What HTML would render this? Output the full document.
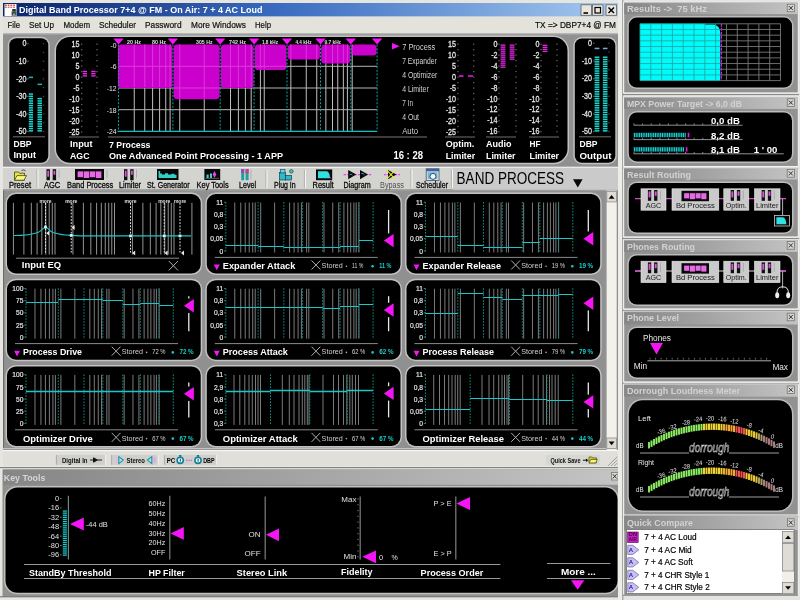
<!DOCTYPE html><html><head><meta charset="utf-8"><title>DBP</title>
<style>html,body{margin:0;padding:0;background:#e8e8e4;overflow:hidden}svg{display:block;font-family:'Liberation Sans', sans-serif}</style></head><body>
<svg width="800" height="600" viewBox="0 0 800 600" style="will-change:transform;filter:blur(0.45px)">
<defs>
<linearGradient id="tb" x1="0" x2="1" y1="0" y2="0"><stop offset="0" stop-color="#0a246a"/><stop offset="0.45" stop-color="#3a6cc0"/><stop offset="1" stop-color="#a6caf0"/></linearGradient>
<linearGradient id="gt" x1="0" x2="1" y1="0" y2="0"><stop offset="0" stop-color="#868686"/><stop offset="1" stop-color="#c4c4c4"/></linearGradient>
<linearGradient id="arcg" gradientUnits="userSpaceOnUse" x1="648" x2="773" y1="0" y2="0">
<stop offset="0" stop-color="#68d048"/><stop offset="0.44" stop-color="#90e060"/><stop offset="0.46" stop-color="#f0d020"/><stop offset="0.68" stop-color="#f0b020"/><stop offset="0.70" stop-color="#f05050"/><stop offset="0.77" stop-color="#f05050"/><stop offset="0.79" stop-color="#f0c020"/><stop offset="0.88" stop-color="#c8a830"/><stop offset="0.90" stop-color="#a07870"/><stop offset="1" stop-color="#a07878"/></linearGradient>
</defs>
<rect x="0.00" y="0.00" width="800.00" height="600.00" fill="#e6e6e2" />
<rect x="0.00" y="0.00" width="620.00" height="600.00" fill="#e6e5df" />
<rect x="3.00" y="3.00" width="615.00" height="13.60" fill="url(#tb)" />
<rect x="4.50" y="4.00" width="12.00" height="12.00" fill="#fdfdfd" />
<rect x="5.00" y="4.60" width="1.80" height="1.20" fill="#c83030" />
<rect x="5.00" y="6.60" width="1.80" height="1.20" fill="#d05050" />
<rect x="7.70" y="4.60" width="1.80" height="1.20" fill="#c83030" />
<rect x="7.70" y="6.60" width="1.80" height="1.20" fill="#d05050" />
<rect x="10.40" y="4.60" width="1.80" height="1.20" fill="#c83030" />
<rect x="10.40" y="6.60" width="1.80" height="1.20" fill="#d05050" />
<rect x="13.10" y="4.60" width="1.80" height="1.20" fill="#c83030" />
<rect x="13.10" y="6.60" width="1.80" height="1.20" fill="#d05050" />
<rect x="12.20" y="9.00" width="3.60" height="2.60" fill="#303030" />
<rect x="11.60" y="11.40" width="4.60" height="4.20" fill="#404848" />
<rect x="13.00" y="13.60" width="2.20" height="1.60" fill="#80b090" />
<text x="19.00" y="9.90" font-size="9.7" fill="#fff" dominant-baseline="central" font-weight="bold" textLength="243.50" lengthAdjust="spacingAndGlyphs" >Digital Band Processor 7+4 @ FM - On Air: 7 + 4 AC Loud</text>
<rect x="581.00" y="4.80" width="10.50" height="10.50" fill="#e8e6de" stroke="#606060" stroke-width="0.8"/>
<rect x="592.50" y="4.80" width="10.50" height="10.50" fill="#e8e6de" stroke="#606060" stroke-width="0.8"/>
<rect x="606.00" y="4.80" width="10.50" height="10.50" fill="#e8e6de" stroke="#606060" stroke-width="0.8"/>
<line x1="583.50" y1="13.00" x2="588.00" y2="13.00" stroke="#000" stroke-width="1.6" />
<rect x="595.00" y="7.50" width="5.50" height="5.50" fill="none" stroke="#000" stroke-width="1.2"/>
<line x1="608.50" y1="7.50" x2="614.00" y2="13.00" stroke="#000" stroke-width="1.5" />
<line x1="614.00" y1="7.50" x2="608.50" y2="13.00" stroke="#000" stroke-width="1.5" />
<rect x="3.00" y="16.60" width="615.00" height="17.00" fill="#e3e2db" />
<text x="7.50" y="24.80" font-size="9" fill="#101010" dominant-baseline="central" textLength="12.50" lengthAdjust="spacingAndGlyphs" stroke="#101010" stroke-width="0.2">File</text>
<text x="29.00" y="24.80" font-size="9" fill="#101010" dominant-baseline="central" textLength="25.00" lengthAdjust="spacingAndGlyphs" stroke="#101010" stroke-width="0.2">Set Up</text>
<text x="63.50" y="24.80" font-size="9" fill="#101010" dominant-baseline="central" textLength="26.50" lengthAdjust="spacingAndGlyphs" stroke="#101010" stroke-width="0.2">Modem</text>
<text x="99.00" y="24.80" font-size="9" fill="#101010" dominant-baseline="central" textLength="37.00" lengthAdjust="spacingAndGlyphs" stroke="#101010" stroke-width="0.2">Scheduler</text>
<text x="145.00" y="24.80" font-size="9" fill="#101010" dominant-baseline="central" textLength="36.50" lengthAdjust="spacingAndGlyphs" stroke="#101010" stroke-width="0.2">Password</text>
<text x="191.00" y="24.80" font-size="9" fill="#101010" dominant-baseline="central" textLength="55.00" lengthAdjust="spacingAndGlyphs" stroke="#101010" stroke-width="0.2">More Windows</text>
<text x="255.00" y="24.80" font-size="9" fill="#101010" dominant-baseline="central" textLength="16.00" lengthAdjust="spacingAndGlyphs" stroke="#101010" stroke-width="0.2">Help</text>
<text x="535.00" y="24.50" font-size="9" fill="#0c0c0c" dominant-baseline="central" textLength="81.00" lengthAdjust="spacingAndGlyphs" stroke="#0c0c0c" stroke-width="0.2">TX =&gt; DBP7+4 @ FM</text>
<rect x="3.00" y="33.50" width="615.00" height="134.00" fill="#909090" />
<line x1="3.00" y1="34.00" x2="618.00" y2="34.00" stroke="#b0b0b0" stroke-width="1" />
<rect x="7.80" y="36.80" width="42.00" height="127.50" fill="#c2c2c2" rx="8.5" />
<rect x="9.30" y="38.30" width="39.00" height="124.50" fill="#000" rx="7" />
<rect x="54.50" y="35.50" width="514.50" height="128.80" fill="#c2c2c2" rx="15.5" />
<rect x="56.00" y="37.00" width="511.50" height="125.80" fill="#000" rx="14" />
<rect x="573.30" y="37.00" width="43.50" height="127.30" fill="#c2c2c2" rx="8.5" />
<rect x="574.80" y="38.50" width="40.50" height="124.30" fill="#000" rx="7" />
<text transform="translate(26.50,43.70) scale(0.84,1)" x="0" y="0" font-size="8.5" fill="#e8e8e8" dominant-baseline="central" text-anchor="end" stroke="#e8e8e8" stroke-width="0.25">0</text>
<text transform="translate(26.50,61.25) scale(0.84,1)" x="0" y="0" font-size="8.5" fill="#e8e8e8" dominant-baseline="central" text-anchor="end" stroke="#e8e8e8" stroke-width="0.25">-10</text>
<text transform="translate(26.50,78.80) scale(0.84,1)" x="0" y="0" font-size="8.5" fill="#e8e8e8" dominant-baseline="central" text-anchor="end" stroke="#e8e8e8" stroke-width="0.25">-20</text>
<text transform="translate(26.50,96.35) scale(0.84,1)" x="0" y="0" font-size="8.5" fill="#e8e8e8" dominant-baseline="central" text-anchor="end" stroke="#e8e8e8" stroke-width="0.25">-30</text>
<text transform="translate(26.50,113.90) scale(0.84,1)" x="0" y="0" font-size="8.5" fill="#e8e8e8" dominant-baseline="central" text-anchor="end" stroke="#e8e8e8" stroke-width="0.25">-40</text>
<text transform="translate(26.50,131.45) scale(0.84,1)" x="0" y="0" font-size="8.5" fill="#e8e8e8" dominant-baseline="central" text-anchor="end" stroke="#e8e8e8" stroke-width="0.25">-50</text>
<rect x="27.30" y="43.10" width="1.40" height="1.20" fill="#606060" />
<rect x="27.30" y="60.66" width="1.40" height="1.20" fill="#606060" />
<rect x="27.30" y="78.22" width="1.40" height="1.20" fill="#606060" />
<rect x="27.30" y="95.78" width="1.40" height="1.20" fill="#606060" />
<rect x="27.30" y="113.34" width="1.40" height="1.20" fill="#606060" />
<rect x="27.30" y="130.90" width="1.40" height="1.20" fill="#606060" />
<rect x="42.80" y="43.10" width="1.40" height="1.20" fill="#484848" />
<rect x="42.80" y="51.88" width="1.40" height="1.20" fill="#484848" />
<rect x="42.80" y="60.66" width="1.40" height="1.20" fill="#484848" />
<rect x="42.80" y="69.44" width="1.40" height="1.20" fill="#484848" />
<rect x="42.80" y="78.22" width="1.40" height="1.20" fill="#484848" />
<rect x="42.80" y="87.00" width="1.40" height="1.20" fill="#484848" />
<rect x="42.80" y="95.78" width="1.40" height="1.20" fill="#484848" />
<rect x="42.80" y="104.56" width="1.40" height="1.20" fill="#484848" />
<rect x="42.80" y="113.34" width="1.40" height="1.20" fill="#484848" />
<rect x="42.80" y="122.12" width="1.40" height="1.20" fill="#484848" />
<rect x="42.80" y="130.90" width="1.40" height="1.20" fill="#484848" />
<rect x="28.80" y="130.10" width="4.20" height="1.50" fill="#1cd6ce" />
<rect x="28.80" y="127.80" width="4.20" height="1.50" fill="#1cd6ce" />
<rect x="28.80" y="125.50" width="4.20" height="1.50" fill="#1cd6ce" />
<rect x="28.80" y="123.20" width="4.20" height="1.50" fill="#1cd6ce" />
<rect x="28.80" y="120.90" width="4.20" height="1.50" fill="#1cd6ce" />
<rect x="28.80" y="118.60" width="4.20" height="1.50" fill="#1cd6ce" />
<rect x="28.80" y="116.30" width="4.20" height="1.50" fill="#1cd6ce" />
<rect x="28.80" y="114.00" width="4.20" height="1.50" fill="#1cd6ce" />
<rect x="28.80" y="111.70" width="4.20" height="1.50" fill="#1cd6ce" />
<rect x="28.80" y="109.40" width="4.20" height="1.50" fill="#1cd6ce" />
<rect x="28.80" y="107.10" width="4.20" height="1.50" fill="#1cd6ce" />
<rect x="28.80" y="104.80" width="4.20" height="1.50" fill="#1cd6ce" />
<rect x="28.80" y="102.50" width="4.20" height="1.50" fill="#1cd6ce" />
<rect x="28.80" y="100.20" width="4.20" height="1.50" fill="#1cd6ce" />
<rect x="28.80" y="97.90" width="4.20" height="1.50" fill="#1cd6ce" />
<rect x="28.80" y="95.60" width="4.20" height="1.50" fill="#1cd6ce" />
<rect x="28.80" y="93.30" width="4.20" height="1.50" fill="#1cd6ce" />
<rect x="37.50" y="130.10" width="4.50" height="1.50" fill="#1cd6ce" />
<rect x="37.50" y="127.80" width="4.50" height="1.50" fill="#1cd6ce" />
<rect x="37.50" y="125.50" width="4.50" height="1.50" fill="#1cd6ce" />
<rect x="37.50" y="123.20" width="4.50" height="1.50" fill="#1cd6ce" />
<rect x="37.50" y="120.90" width="4.50" height="1.50" fill="#1cd6ce" />
<rect x="37.50" y="118.60" width="4.50" height="1.50" fill="#1cd6ce" />
<rect x="37.50" y="116.30" width="4.50" height="1.50" fill="#1cd6ce" />
<rect x="37.50" y="114.00" width="4.50" height="1.50" fill="#1cd6ce" />
<rect x="37.50" y="111.70" width="4.50" height="1.50" fill="#1cd6ce" />
<rect x="37.50" y="109.40" width="4.50" height="1.50" fill="#1cd6ce" />
<rect x="37.50" y="107.10" width="4.50" height="1.50" fill="#1cd6ce" />
<rect x="37.50" y="104.80" width="4.50" height="1.50" fill="#1cd6ce" />
<rect x="37.50" y="102.50" width="4.50" height="1.50" fill="#1cd6ce" />
<rect x="37.50" y="100.20" width="4.50" height="1.50" fill="#1cd6ce" />
<rect x="37.50" y="97.90" width="4.50" height="1.50" fill="#1cd6ce" />
<rect x="28.80" y="76.60" width="4.20" height="1.50" fill="#20b0b0" />
<rect x="37.50" y="83.60" width="4.50" height="1.50" fill="#20b0b0" />
<line x1="13.00" y1="136.80" x2="45.00" y2="136.80" stroke="#707070" stroke-width="1" />
<text x="13.50" y="143.00" font-size="9.5" fill="#fff" dominant-baseline="central" font-weight="bold" textLength="18.00" lengthAdjust="spacingAndGlyphs" >DBP</text>
<text x="13.50" y="154.80" font-size="9.5" fill="#fff" dominant-baseline="central" font-weight="bold" textLength="22.50" lengthAdjust="spacingAndGlyphs" >Input</text>
<text transform="translate(79.50,44.20) scale(0.84,1)" x="0" y="0" font-size="8.5" fill="#e8e8e8" dominant-baseline="central" text-anchor="end" stroke="#e8e8e8" stroke-width="0.25">15</text>
<text transform="translate(79.50,55.17) scale(0.84,1)" x="0" y="0" font-size="8.5" fill="#e8e8e8" dominant-baseline="central" text-anchor="end" stroke="#e8e8e8" stroke-width="0.25">10</text>
<text transform="translate(79.50,66.14) scale(0.84,1)" x="0" y="0" font-size="8.5" fill="#e8e8e8" dominant-baseline="central" text-anchor="end" stroke="#e8e8e8" stroke-width="0.25">5</text>
<text transform="translate(79.50,77.11) scale(0.84,1)" x="0" y="0" font-size="8.5" fill="#e8e8e8" dominant-baseline="central" text-anchor="end" stroke="#e8e8e8" stroke-width="0.25">0</text>
<text transform="translate(79.50,88.08) scale(0.84,1)" x="0" y="0" font-size="8.5" fill="#e8e8e8" dominant-baseline="central" text-anchor="end" stroke="#e8e8e8" stroke-width="0.25">-5</text>
<text transform="translate(79.50,99.05) scale(0.84,1)" x="0" y="0" font-size="8.5" fill="#e8e8e8" dominant-baseline="central" text-anchor="end" stroke="#e8e8e8" stroke-width="0.25">-10</text>
<text transform="translate(79.50,110.02) scale(0.84,1)" x="0" y="0" font-size="8.5" fill="#e8e8e8" dominant-baseline="central" text-anchor="end" stroke="#e8e8e8" stroke-width="0.25">-15</text>
<text transform="translate(79.50,120.99) scale(0.84,1)" x="0" y="0" font-size="8.5" fill="#e8e8e8" dominant-baseline="central" text-anchor="end" stroke="#e8e8e8" stroke-width="0.25">-20</text>
<text transform="translate(79.50,131.96) scale(0.84,1)" x="0" y="0" font-size="8.5" fill="#e8e8e8" dominant-baseline="central" text-anchor="end" stroke="#e8e8e8" stroke-width="0.25">-25</text>
<rect x="81.00" y="43.60" width="1.40" height="1.20" fill="#606060" />
<rect x="81.00" y="49.09" width="1.40" height="1.20" fill="#606060" />
<rect x="81.00" y="54.58" width="1.40" height="1.20" fill="#606060" />
<rect x="81.00" y="60.06" width="1.40" height="1.20" fill="#606060" />
<rect x="81.00" y="65.55" width="1.40" height="1.20" fill="#606060" />
<rect x="81.00" y="71.04" width="1.40" height="1.20" fill="#606060" />
<rect x="81.00" y="76.53" width="1.40" height="1.20" fill="#606060" />
<rect x="81.00" y="82.01" width="1.40" height="1.20" fill="#606060" />
<rect x="81.00" y="87.50" width="1.40" height="1.20" fill="#606060" />
<rect x="81.00" y="92.99" width="1.40" height="1.20" fill="#606060" />
<rect x="81.00" y="98.48" width="1.40" height="1.20" fill="#606060" />
<rect x="81.00" y="103.96" width="1.40" height="1.20" fill="#606060" />
<rect x="81.00" y="109.45" width="1.40" height="1.20" fill="#606060" />
<rect x="81.00" y="114.94" width="1.40" height="1.20" fill="#606060" />
<rect x="81.00" y="120.43" width="1.40" height="1.20" fill="#606060" />
<rect x="81.00" y="125.91" width="1.40" height="1.20" fill="#606060" />
<rect x="81.00" y="131.40" width="1.40" height="1.20" fill="#606060" />
<rect x="96.30" y="43.60" width="1.40" height="1.20" fill="#606060" />
<rect x="96.30" y="49.09" width="1.40" height="1.20" fill="#606060" />
<rect x="96.30" y="54.58" width="1.40" height="1.20" fill="#606060" />
<rect x="96.30" y="60.06" width="1.40" height="1.20" fill="#606060" />
<rect x="96.30" y="65.55" width="1.40" height="1.20" fill="#606060" />
<rect x="96.30" y="71.04" width="1.40" height="1.20" fill="#606060" />
<rect x="96.30" y="76.53" width="1.40" height="1.20" fill="#606060" />
<rect x="96.30" y="82.01" width="1.40" height="1.20" fill="#606060" />
<rect x="96.30" y="87.50" width="1.40" height="1.20" fill="#606060" />
<rect x="96.30" y="92.99" width="1.40" height="1.20" fill="#606060" />
<rect x="96.30" y="98.48" width="1.40" height="1.20" fill="#606060" />
<rect x="96.30" y="103.96" width="1.40" height="1.20" fill="#606060" />
<rect x="96.30" y="109.45" width="1.40" height="1.20" fill="#606060" />
<rect x="96.30" y="114.94" width="1.40" height="1.20" fill="#606060" />
<rect x="96.30" y="120.43" width="1.40" height="1.20" fill="#606060" />
<rect x="96.30" y="125.91" width="1.40" height="1.20" fill="#606060" />
<rect x="96.30" y="131.40" width="1.40" height="1.20" fill="#606060" />
<rect x="82.80" y="75.20" width="4.20" height="1.40" fill="#e428e4" />
<rect x="82.80" y="73.00" width="4.20" height="1.40" fill="#e428e4" />
<rect x="82.80" y="70.80" width="4.20" height="1.40" fill="#e428e4" />
<rect x="91.20" y="75.20" width="4.40" height="1.40" fill="#e428e4" />
<rect x="91.20" y="73.00" width="4.40" height="1.40" fill="#e428e4" />
<rect x="91.20" y="70.80" width="4.40" height="1.40" fill="#e428e4" />
<text x="70.00" y="143.50" font-size="9.5" fill="#fff" dominant-baseline="central" font-weight="bold" textLength="22.50" lengthAdjust="spacingAndGlyphs" >Input</text>
<text x="70.00" y="155.00" font-size="9.5" fill="#fff" dominant-baseline="central" font-weight="bold" textLength="19.50" lengthAdjust="spacingAndGlyphs" >AGC</text>
<line x1="69.00" y1="137.00" x2="99.00" y2="137.00" stroke="#707070" stroke-width="1" />
<text transform="translate(116.50,45.50) scale(0.85,1)" x="0" y="0" font-size="8" fill="#e8e8e8" dominant-baseline="central" text-anchor="end" >-0</text>
<text transform="translate(116.50,66.50) scale(0.85,1)" x="0" y="0" font-size="8" fill="#e8e8e8" dominant-baseline="central" text-anchor="end" >-6</text>
<text transform="translate(116.50,88.20) scale(0.85,1)" x="0" y="0" font-size="8" fill="#e8e8e8" dominant-baseline="central" text-anchor="end" >-12</text>
<text transform="translate(116.50,110.00) scale(0.85,1)" x="0" y="0" font-size="8" fill="#e8e8e8" dominant-baseline="central" text-anchor="end" >-18</text>
<text transform="translate(116.50,131.50) scale(0.85,1)" x="0" y="0" font-size="8" fill="#e8e8e8" dominant-baseline="central" text-anchor="end" >-24</text>
<line x1="134.25" y1="44.60" x2="134.25" y2="131.40" stroke="#c0c0c0" stroke-width="1" />
<line x1="144.75" y1="44.60" x2="144.75" y2="131.40" stroke="#c0c0c0" stroke-width="1" />
<line x1="152.60" y1="44.60" x2="152.60" y2="131.40" stroke="#c0c0c0" stroke-width="1" />
<line x1="159.60" y1="44.60" x2="159.60" y2="131.40" stroke="#c0c0c0" stroke-width="1" />
<line x1="165.75" y1="44.60" x2="165.75" y2="131.40" stroke="#c0c0c0" stroke-width="1" />
<line x1="170.10" y1="44.60" x2="170.10" y2="131.40" stroke="#c0c0c0" stroke-width="1" />
<line x1="179.75" y1="44.60" x2="179.75" y2="131.40" stroke="#c0c0c0" stroke-width="1" />
<line x1="204.25" y1="44.60" x2="204.25" y2="131.40" stroke="#c0c0c0" stroke-width="1" />
<line x1="230.50" y1="44.60" x2="230.50" y2="131.40" stroke="#c0c0c0" stroke-width="1" />
<line x1="238.40" y1="44.60" x2="238.40" y2="131.40" stroke="#c0c0c0" stroke-width="1" />
<line x1="245.40" y1="44.60" x2="245.40" y2="131.40" stroke="#c0c0c0" stroke-width="1" />
<line x1="251.20" y1="44.60" x2="251.20" y2="131.40" stroke="#c0c0c0" stroke-width="1" />
<line x1="260.40" y1="44.60" x2="260.40" y2="131.40" stroke="#c0c0c0" stroke-width="1" />
<line x1="264.25" y1="44.60" x2="264.25" y2="131.40" stroke="#c0c0c0" stroke-width="1" />
<line x1="290.85" y1="44.60" x2="290.85" y2="131.40" stroke="#c0c0c0" stroke-width="1" />
<line x1="306.25" y1="44.60" x2="306.25" y2="131.40" stroke="#c0c0c0" stroke-width="1" />
<line x1="316.75" y1="44.60" x2="316.75" y2="131.40" stroke="#c0c0c0" stroke-width="1" />
<line x1="325.85" y1="44.60" x2="325.85" y2="131.40" stroke="#c0c0c0" stroke-width="1" />
<line x1="332.50" y1="44.60" x2="332.50" y2="131.40" stroke="#c0c0c0" stroke-width="1" />
<line x1="337.75" y1="44.60" x2="337.75" y2="131.40" stroke="#c0c0c0" stroke-width="1" />
<line x1="343.35" y1="44.60" x2="343.35" y2="131.40" stroke="#c0c0c0" stroke-width="1" />
<line x1="347.40" y1="44.60" x2="347.40" y2="131.40" stroke="#c0c0c0" stroke-width="1" />
<line x1="352.20" y1="44.60" x2="352.20" y2="131.40" stroke="#c0c0c0" stroke-width="1" />
<line x1="118.50" y1="66.30" x2="377.10" y2="66.30" stroke="#b4b4b4" stroke-width="1" />
<line x1="118.50" y1="88.00" x2="377.10" y2="88.00" stroke="#b4b4b4" stroke-width="1" />
<line x1="118.50" y1="109.70" x2="377.10" y2="109.70" stroke="#b4b4b4" stroke-width="1" />
<rect x="117.90" y="44.60" width="54.40" height="43.40" fill="#cc00cc" rx="3.6" />
<rect x="173.60" y="44.60" width="46.00" height="54.60" fill="#cc00cc" rx="3.6" />
<rect x="220.90" y="44.60" width="32.60" height="43.40" fill="#cc00cc" rx="3.6" />
<rect x="254.80" y="44.60" width="31.60" height="25.40" fill="#cc00cc" rx="3.6" />
<rect x="287.70" y="44.60" width="32.20" height="15.00" fill="#cc00cc" rx="3.6" />
<rect x="321.20" y="44.60" width="29.00" height="19.00" fill="#cc00cc" rx="3.6" />
<rect x="351.50" y="44.60" width="25.00" height="11.00" fill="#cc00cc" rx="3.6" />
<g opacity="0.3">
<line x1="134.25" y1="44.60" x2="134.25" y2="87.00" stroke="#ffc0ff" stroke-width="0.9" />
<line x1="144.75" y1="44.60" x2="144.75" y2="87.00" stroke="#ffc0ff" stroke-width="0.9" />
<line x1="152.60" y1="44.60" x2="152.60" y2="87.00" stroke="#ffc0ff" stroke-width="0.9" />
<line x1="159.60" y1="44.60" x2="159.60" y2="87.00" stroke="#ffc0ff" stroke-width="0.9" />
<line x1="165.75" y1="44.60" x2="165.75" y2="87.00" stroke="#ffc0ff" stroke-width="0.9" />
<line x1="170.10" y1="44.60" x2="170.10" y2="87.00" stroke="#ffc0ff" stroke-width="0.9" />
<line x1="119.30" y1="66.30" x2="172.60" y2="66.30" stroke="#ffc0ff" stroke-width="1" />
<line x1="179.75" y1="44.60" x2="179.75" y2="98.20" stroke="#ffc0ff" stroke-width="0.9" />
<line x1="204.25" y1="44.60" x2="204.25" y2="98.20" stroke="#ffc0ff" stroke-width="0.9" />
<line x1="173.70" y1="66.30" x2="219.90" y2="66.30" stroke="#ffc0ff" stroke-width="1" />
<line x1="173.70" y1="88.00" x2="219.90" y2="88.00" stroke="#ffc0ff" stroke-width="1" />
<line x1="230.50" y1="44.60" x2="230.50" y2="87.00" stroke="#ffc0ff" stroke-width="0.9" />
<line x1="238.40" y1="44.60" x2="238.40" y2="87.00" stroke="#ffc0ff" stroke-width="0.9" />
<line x1="245.40" y1="44.60" x2="245.40" y2="87.00" stroke="#ffc0ff" stroke-width="0.9" />
<line x1="251.20" y1="44.60" x2="251.20" y2="87.00" stroke="#ffc0ff" stroke-width="0.9" />
<line x1="221.00" y1="66.30" x2="253.80" y2="66.30" stroke="#ffc0ff" stroke-width="1" />
<line x1="260.40" y1="44.60" x2="260.40" y2="69.00" stroke="#ffc0ff" stroke-width="0.9" />
<line x1="264.25" y1="44.60" x2="264.25" y2="69.00" stroke="#ffc0ff" stroke-width="0.9" />
<line x1="254.90" y1="66.30" x2="286.70" y2="66.30" stroke="#ffc0ff" stroke-width="1" />
<line x1="290.85" y1="44.60" x2="290.85" y2="58.60" stroke="#ffc0ff" stroke-width="0.9" />
<line x1="306.25" y1="44.60" x2="306.25" y2="58.60" stroke="#ffc0ff" stroke-width="0.9" />
<line x1="316.75" y1="44.60" x2="316.75" y2="58.60" stroke="#ffc0ff" stroke-width="0.9" />
<line x1="325.85" y1="44.60" x2="325.85" y2="62.60" stroke="#ffc0ff" stroke-width="0.9" />
<line x1="332.50" y1="44.60" x2="332.50" y2="62.60" stroke="#ffc0ff" stroke-width="0.9" />
<line x1="337.75" y1="44.60" x2="337.75" y2="62.60" stroke="#ffc0ff" stroke-width="0.9" />
<line x1="343.35" y1="44.60" x2="343.35" y2="62.60" stroke="#ffc0ff" stroke-width="0.9" />
<line x1="347.40" y1="44.60" x2="347.40" y2="62.60" stroke="#ffc0ff" stroke-width="0.9" />
<line x1="352.20" y1="44.60" x2="352.20" y2="54.60" stroke="#ffc0ff" stroke-width="0.9" />
</g>
<line x1="118.50" y1="44.60" x2="118.50" y2="131.40" stroke="#10a098" stroke-width="1" stroke-dasharray="2 1.6"/>
<line x1="172.90" y1="44.60" x2="172.90" y2="131.40" stroke="#10a098" stroke-width="1" stroke-dasharray="2 1.6"/>
<line x1="220.20" y1="44.60" x2="220.20" y2="131.40" stroke="#10a098" stroke-width="1" stroke-dasharray="2 1.6"/>
<line x1="254.10" y1="44.60" x2="254.10" y2="131.40" stroke="#10a098" stroke-width="1" stroke-dasharray="2 1.6"/>
<line x1="287.00" y1="44.60" x2="287.00" y2="131.40" stroke="#10a098" stroke-width="1" stroke-dasharray="2 1.6"/>
<line x1="320.50" y1="44.60" x2="320.50" y2="131.40" stroke="#10a098" stroke-width="1" stroke-dasharray="2 1.6"/>
<line x1="350.80" y1="44.60" x2="350.80" y2="131.40" stroke="#10a098" stroke-width="1" stroke-dasharray="2 1.6"/>
<line x1="377.10" y1="44.60" x2="377.10" y2="131.40" stroke="#10a098" stroke-width="1" stroke-dasharray="2 1.6"/>
<line x1="117.50" y1="131.40" x2="377.10" y2="131.40" stroke="#10c0c0" stroke-width="1.3" />
<path d="M113.3,38.6 H123.7 L118.5,44.6 Z" fill="#f414f4" stroke="none" stroke-width="1" />
<path d="M167.7,38.6 H178.1 L172.9,44.6 Z" fill="#f414f4" stroke="none" stroke-width="1" />
<path d="M215.0,38.6 H225.4 L220.2,44.6 Z" fill="#f414f4" stroke="none" stroke-width="1" />
<path d="M248.9,38.6 H259.3 L254.1,44.6 Z" fill="#f414f4" stroke="none" stroke-width="1" />
<path d="M281.8,38.6 H292.2 L287.0,44.6 Z" fill="#f414f4" stroke="none" stroke-width="1" />
<path d="M315.3,38.6 H325.7 L320.5,44.6 Z" fill="#f414f4" stroke="none" stroke-width="1" />
<path d="M345.6,38.6 H356.0 L350.8,44.6 Z" fill="#f414f4" stroke="none" stroke-width="1" />
<path d="M371.9,38.6 H382.3 L377.1,44.6 Z" fill="#f414f4" stroke="none" stroke-width="1" />
<text x="127.00" y="41.60" font-size="6" fill="#e0e0e0" dominant-baseline="central" font-weight="bold" textLength="14.00" lengthAdjust="spacingAndGlyphs" >20 Hz</text>
<text x="152.00" y="41.60" font-size="6" fill="#e0e0e0" dominant-baseline="central" font-weight="bold" textLength="14.00" lengthAdjust="spacingAndGlyphs" >80 Hz</text>
<text x="196.00" y="41.60" font-size="6" fill="#e0e0e0" dominant-baseline="central" font-weight="bold" textLength="16.50" lengthAdjust="spacingAndGlyphs" >305 Hz</text>
<text x="229.00" y="41.60" font-size="6" fill="#e0e0e0" dominant-baseline="central" font-weight="bold" textLength="17.00" lengthAdjust="spacingAndGlyphs" >742 Hz</text>
<text x="262.00" y="41.60" font-size="6" fill="#e0e0e0" dominant-baseline="central" font-weight="bold" textLength="16.00" lengthAdjust="spacingAndGlyphs" >1.8 kHz</text>
<text x="295.50" y="41.60" font-size="6" fill="#e0e0e0" dominant-baseline="central" font-weight="bold" textLength="16.00" lengthAdjust="spacingAndGlyphs" >4.4 kHz</text>
<text x="324.50" y="41.60" font-size="6" fill="#e0e0e0" dominant-baseline="central" font-weight="bold" textLength="16.50" lengthAdjust="spacingAndGlyphs" >9.7 kHz</text>
<line x1="108.00" y1="137.00" x2="427.00" y2="137.00" stroke="#787878" stroke-width="1" />
<text x="109.00" y="144.00" font-size="9.5" fill="#fff" dominant-baseline="central" font-weight="bold" textLength="41.50" lengthAdjust="spacingAndGlyphs" >7 Process</text>
<text x="109.00" y="155.30" font-size="9.5" fill="#fff" dominant-baseline="central" font-weight="bold" textLength="174.00" lengthAdjust="spacingAndGlyphs" >One Advanced Point Processing - 1 APP</text>
<text x="393.40" y="155.20" font-size="10" fill="#fff" dominant-baseline="central" font-weight="bold" textLength="29.60" lengthAdjust="spacingAndGlyphs" >16 : 28</text>
<path d="M392,43 L399.6,46.3 L392,49.6 Z" fill="#f414f4" stroke="none" stroke-width="1" />
<text x="402.20" y="46.50" font-size="8.5" fill="#d2d2d2" dominant-baseline="central" textLength="33.00" lengthAdjust="spacingAndGlyphs" >7 Process</text>
<text x="402.20" y="60.50" font-size="8.5" fill="#d2d2d2" dominant-baseline="central" textLength="34.50" lengthAdjust="spacingAndGlyphs" >7 Expander</text>
<text x="402.20" y="74.50" font-size="8.5" fill="#d2d2d2" dominant-baseline="central" textLength="35.20" lengthAdjust="spacingAndGlyphs" >4 Optimizer</text>
<text x="402.20" y="88.50" font-size="8.5" fill="#d2d2d2" dominant-baseline="central" textLength="26.50" lengthAdjust="spacingAndGlyphs" >4 Limiter</text>
<text x="402.20" y="102.50" font-size="8.5" fill="#d2d2d2" dominant-baseline="central" textLength="10.80" lengthAdjust="spacingAndGlyphs" >7 In</text>
<text x="402.20" y="116.50" font-size="8.5" fill="#d2d2d2" dominant-baseline="central" textLength="16.80" lengthAdjust="spacingAndGlyphs" >4 Out</text>
<text x="402.20" y="130.50" font-size="8.5" fill="#d2d2d2" dominant-baseline="central" textLength="16.00" lengthAdjust="spacingAndGlyphs" >Auto</text>
<text transform="translate(456.00,44.20) scale(0.84,1)" x="0" y="0" font-size="8.5" fill="#e8e8e8" dominant-baseline="central" text-anchor="end" stroke="#e8e8e8" stroke-width="0.25">15</text>
<text transform="translate(456.00,55.17) scale(0.84,1)" x="0" y="0" font-size="8.5" fill="#e8e8e8" dominant-baseline="central" text-anchor="end" stroke="#e8e8e8" stroke-width="0.25">10</text>
<text transform="translate(456.00,66.14) scale(0.84,1)" x="0" y="0" font-size="8.5" fill="#e8e8e8" dominant-baseline="central" text-anchor="end" stroke="#e8e8e8" stroke-width="0.25">5</text>
<text transform="translate(456.00,77.11) scale(0.84,1)" x="0" y="0" font-size="8.5" fill="#e8e8e8" dominant-baseline="central" text-anchor="end" stroke="#e8e8e8" stroke-width="0.25">0</text>
<text transform="translate(456.00,88.08) scale(0.84,1)" x="0" y="0" font-size="8.5" fill="#e8e8e8" dominant-baseline="central" text-anchor="end" stroke="#e8e8e8" stroke-width="0.25">-5</text>
<text transform="translate(456.00,99.05) scale(0.84,1)" x="0" y="0" font-size="8.5" fill="#e8e8e8" dominant-baseline="central" text-anchor="end" stroke="#e8e8e8" stroke-width="0.25">-10</text>
<text transform="translate(456.00,110.02) scale(0.84,1)" x="0" y="0" font-size="8.5" fill="#e8e8e8" dominant-baseline="central" text-anchor="end" stroke="#e8e8e8" stroke-width="0.25">-15</text>
<text transform="translate(456.00,120.99) scale(0.84,1)" x="0" y="0" font-size="8.5" fill="#e8e8e8" dominant-baseline="central" text-anchor="end" stroke="#e8e8e8" stroke-width="0.25">-20</text>
<text transform="translate(456.00,131.96) scale(0.84,1)" x="0" y="0" font-size="8.5" fill="#e8e8e8" dominant-baseline="central" text-anchor="end" stroke="#e8e8e8" stroke-width="0.25">-25</text>
<rect x="457.30" y="43.60" width="1.40" height="1.20" fill="#606060" />
<rect x="457.30" y="49.09" width="1.40" height="1.20" fill="#606060" />
<rect x="457.30" y="54.58" width="1.40" height="1.20" fill="#606060" />
<rect x="457.30" y="60.06" width="1.40" height="1.20" fill="#606060" />
<rect x="457.30" y="65.55" width="1.40" height="1.20" fill="#606060" />
<rect x="457.30" y="71.04" width="1.40" height="1.20" fill="#606060" />
<rect x="457.30" y="76.53" width="1.40" height="1.20" fill="#606060" />
<rect x="457.30" y="82.01" width="1.40" height="1.20" fill="#606060" />
<rect x="457.30" y="87.50" width="1.40" height="1.20" fill="#606060" />
<rect x="457.30" y="92.99" width="1.40" height="1.20" fill="#606060" />
<rect x="457.30" y="98.48" width="1.40" height="1.20" fill="#606060" />
<rect x="457.30" y="103.96" width="1.40" height="1.20" fill="#606060" />
<rect x="457.30" y="109.45" width="1.40" height="1.20" fill="#606060" />
<rect x="457.30" y="114.94" width="1.40" height="1.20" fill="#606060" />
<rect x="457.30" y="120.43" width="1.40" height="1.20" fill="#606060" />
<rect x="457.30" y="125.91" width="1.40" height="1.20" fill="#606060" />
<rect x="457.30" y="131.40" width="1.40" height="1.20" fill="#606060" />
<rect x="473.00" y="43.60" width="1.40" height="1.20" fill="#606060" />
<rect x="473.00" y="49.09" width="1.40" height="1.20" fill="#606060" />
<rect x="473.00" y="54.58" width="1.40" height="1.20" fill="#606060" />
<rect x="473.00" y="60.06" width="1.40" height="1.20" fill="#606060" />
<rect x="473.00" y="65.55" width="1.40" height="1.20" fill="#606060" />
<rect x="473.00" y="71.04" width="1.40" height="1.20" fill="#606060" />
<rect x="473.00" y="76.53" width="1.40" height="1.20" fill="#606060" />
<rect x="473.00" y="82.01" width="1.40" height="1.20" fill="#606060" />
<rect x="473.00" y="87.50" width="1.40" height="1.20" fill="#606060" />
<rect x="473.00" y="92.99" width="1.40" height="1.20" fill="#606060" />
<rect x="473.00" y="98.48" width="1.40" height="1.20" fill="#606060" />
<rect x="473.00" y="103.96" width="1.40" height="1.20" fill="#606060" />
<rect x="473.00" y="109.45" width="1.40" height="1.20" fill="#606060" />
<rect x="473.00" y="114.94" width="1.40" height="1.20" fill="#606060" />
<rect x="473.00" y="120.43" width="1.40" height="1.20" fill="#606060" />
<rect x="473.00" y="125.91" width="1.40" height="1.20" fill="#606060" />
<rect x="473.00" y="131.40" width="1.40" height="1.20" fill="#606060" />
<rect x="459.00" y="75.30" width="4.50" height="1.50" fill="#f414f4" />
<rect x="468.00" y="75.30" width="5.00" height="1.50" fill="#f414f4" />
<line x1="445.00" y1="137.00" x2="475.00" y2="137.00" stroke="#707070" stroke-width="1" />
<text x="445.70" y="143.80" font-size="9.5" fill="#fff" dominant-baseline="central" font-weight="bold" textLength="28.50" lengthAdjust="spacingAndGlyphs" >Optim.</text>
<text x="445.70" y="155.20" font-size="9.5" fill="#fff" dominant-baseline="central" font-weight="bold" textLength="29.50" lengthAdjust="spacingAndGlyphs" >Limiter</text>
<text transform="translate(497.50,44.20) scale(0.84,1)" x="0" y="0" font-size="8.5" fill="#e8e8e8" dominant-baseline="central" text-anchor="end" stroke="#e8e8e8" stroke-width="0.25">0</text>
<text transform="translate(539.50,44.20) scale(0.84,1)" x="0" y="0" font-size="8.5" fill="#e8e8e8" dominant-baseline="central" text-anchor="end" stroke="#e8e8e8" stroke-width="0.25">0</text>
<text transform="translate(497.50,55.13) scale(0.84,1)" x="0" y="0" font-size="8.5" fill="#e8e8e8" dominant-baseline="central" text-anchor="end" stroke="#e8e8e8" stroke-width="0.25">-2</text>
<text transform="translate(539.50,55.13) scale(0.84,1)" x="0" y="0" font-size="8.5" fill="#e8e8e8" dominant-baseline="central" text-anchor="end" stroke="#e8e8e8" stroke-width="0.25">-2</text>
<text transform="translate(497.50,66.06) scale(0.84,1)" x="0" y="0" font-size="8.5" fill="#e8e8e8" dominant-baseline="central" text-anchor="end" stroke="#e8e8e8" stroke-width="0.25">-4</text>
<text transform="translate(539.50,66.06) scale(0.84,1)" x="0" y="0" font-size="8.5" fill="#e8e8e8" dominant-baseline="central" text-anchor="end" stroke="#e8e8e8" stroke-width="0.25">-4</text>
<text transform="translate(497.50,76.99) scale(0.84,1)" x="0" y="0" font-size="8.5" fill="#e8e8e8" dominant-baseline="central" text-anchor="end" stroke="#e8e8e8" stroke-width="0.25">-6</text>
<text transform="translate(539.50,76.99) scale(0.84,1)" x="0" y="0" font-size="8.5" fill="#e8e8e8" dominant-baseline="central" text-anchor="end" stroke="#e8e8e8" stroke-width="0.25">-6</text>
<text transform="translate(497.50,87.92) scale(0.84,1)" x="0" y="0" font-size="8.5" fill="#e8e8e8" dominant-baseline="central" text-anchor="end" stroke="#e8e8e8" stroke-width="0.25">-8</text>
<text transform="translate(539.50,87.92) scale(0.84,1)" x="0" y="0" font-size="8.5" fill="#e8e8e8" dominant-baseline="central" text-anchor="end" stroke="#e8e8e8" stroke-width="0.25">-8</text>
<text transform="translate(497.50,98.85) scale(0.84,1)" x="0" y="0" font-size="8.5" fill="#e8e8e8" dominant-baseline="central" text-anchor="end" stroke="#e8e8e8" stroke-width="0.25">-10</text>
<text transform="translate(539.50,98.85) scale(0.84,1)" x="0" y="0" font-size="8.5" fill="#e8e8e8" dominant-baseline="central" text-anchor="end" stroke="#e8e8e8" stroke-width="0.25">-10</text>
<text transform="translate(497.50,109.78) scale(0.84,1)" x="0" y="0" font-size="8.5" fill="#e8e8e8" dominant-baseline="central" text-anchor="end" stroke="#e8e8e8" stroke-width="0.25">-12</text>
<text transform="translate(539.50,109.78) scale(0.84,1)" x="0" y="0" font-size="8.5" fill="#e8e8e8" dominant-baseline="central" text-anchor="end" stroke="#e8e8e8" stroke-width="0.25">-12</text>
<text transform="translate(497.50,120.71) scale(0.84,1)" x="0" y="0" font-size="8.5" fill="#e8e8e8" dominant-baseline="central" text-anchor="end" stroke="#e8e8e8" stroke-width="0.25">-14</text>
<text transform="translate(539.50,120.71) scale(0.84,1)" x="0" y="0" font-size="8.5" fill="#e8e8e8" dominant-baseline="central" text-anchor="end" stroke="#e8e8e8" stroke-width="0.25">-14</text>
<text transform="translate(497.50,131.64) scale(0.84,1)" x="0" y="0" font-size="8.5" fill="#e8e8e8" dominant-baseline="central" text-anchor="end" stroke="#e8e8e8" stroke-width="0.25">-16</text>
<text transform="translate(539.50,131.64) scale(0.84,1)" x="0" y="0" font-size="8.5" fill="#e8e8e8" dominant-baseline="central" text-anchor="end" stroke="#e8e8e8" stroke-width="0.25">-16</text>
<rect x="498.30" y="43.60" width="1.40" height="1.20" fill="#606060" />
<rect x="498.30" y="49.07" width="1.40" height="1.20" fill="#606060" />
<rect x="498.30" y="54.54" width="1.40" height="1.20" fill="#606060" />
<rect x="498.30" y="60.01" width="1.40" height="1.20" fill="#606060" />
<rect x="498.30" y="65.48" width="1.40" height="1.20" fill="#606060" />
<rect x="498.30" y="70.94" width="1.40" height="1.20" fill="#606060" />
<rect x="498.30" y="76.41" width="1.40" height="1.20" fill="#606060" />
<rect x="498.30" y="81.88" width="1.40" height="1.20" fill="#606060" />
<rect x="498.30" y="87.35" width="1.40" height="1.20" fill="#606060" />
<rect x="498.30" y="92.82" width="1.40" height="1.20" fill="#606060" />
<rect x="498.30" y="98.29" width="1.40" height="1.20" fill="#606060" />
<rect x="498.30" y="103.76" width="1.40" height="1.20" fill="#606060" />
<rect x="498.30" y="109.22" width="1.40" height="1.20" fill="#606060" />
<rect x="498.30" y="114.69" width="1.40" height="1.20" fill="#606060" />
<rect x="498.30" y="120.16" width="1.40" height="1.20" fill="#606060" />
<rect x="498.30" y="125.63" width="1.40" height="1.20" fill="#606060" />
<rect x="498.30" y="131.10" width="1.40" height="1.20" fill="#606060" />
<rect x="515.30" y="43.60" width="1.40" height="1.20" fill="#606060" />
<rect x="515.30" y="49.07" width="1.40" height="1.20" fill="#606060" />
<rect x="515.30" y="54.54" width="1.40" height="1.20" fill="#606060" />
<rect x="515.30" y="60.01" width="1.40" height="1.20" fill="#606060" />
<rect x="515.30" y="65.48" width="1.40" height="1.20" fill="#606060" />
<rect x="515.30" y="70.94" width="1.40" height="1.20" fill="#606060" />
<rect x="515.30" y="76.41" width="1.40" height="1.20" fill="#606060" />
<rect x="515.30" y="81.88" width="1.40" height="1.20" fill="#606060" />
<rect x="515.30" y="87.35" width="1.40" height="1.20" fill="#606060" />
<rect x="515.30" y="92.82" width="1.40" height="1.20" fill="#606060" />
<rect x="515.30" y="98.29" width="1.40" height="1.20" fill="#606060" />
<rect x="515.30" y="103.76" width="1.40" height="1.20" fill="#606060" />
<rect x="515.30" y="109.22" width="1.40" height="1.20" fill="#606060" />
<rect x="515.30" y="114.69" width="1.40" height="1.20" fill="#606060" />
<rect x="515.30" y="120.16" width="1.40" height="1.20" fill="#606060" />
<rect x="515.30" y="125.63" width="1.40" height="1.20" fill="#606060" />
<rect x="515.30" y="131.10" width="1.40" height="1.20" fill="#606060" />
<rect x="540.30" y="43.60" width="1.40" height="1.20" fill="#606060" />
<rect x="540.30" y="49.07" width="1.40" height="1.20" fill="#606060" />
<rect x="540.30" y="54.54" width="1.40" height="1.20" fill="#606060" />
<rect x="540.30" y="60.01" width="1.40" height="1.20" fill="#606060" />
<rect x="540.30" y="65.48" width="1.40" height="1.20" fill="#606060" />
<rect x="540.30" y="70.94" width="1.40" height="1.20" fill="#606060" />
<rect x="540.30" y="76.41" width="1.40" height="1.20" fill="#606060" />
<rect x="540.30" y="81.88" width="1.40" height="1.20" fill="#606060" />
<rect x="540.30" y="87.35" width="1.40" height="1.20" fill="#606060" />
<rect x="540.30" y="92.82" width="1.40" height="1.20" fill="#606060" />
<rect x="540.30" y="98.29" width="1.40" height="1.20" fill="#606060" />
<rect x="540.30" y="103.76" width="1.40" height="1.20" fill="#606060" />
<rect x="540.30" y="109.22" width="1.40" height="1.20" fill="#606060" />
<rect x="540.30" y="114.69" width="1.40" height="1.20" fill="#606060" />
<rect x="540.30" y="120.16" width="1.40" height="1.20" fill="#606060" />
<rect x="540.30" y="125.63" width="1.40" height="1.20" fill="#606060" />
<rect x="540.30" y="131.10" width="1.40" height="1.20" fill="#606060" />
<rect x="556.30" y="43.60" width="1.40" height="1.20" fill="#606060" />
<rect x="556.30" y="49.07" width="1.40" height="1.20" fill="#606060" />
<rect x="556.30" y="54.54" width="1.40" height="1.20" fill="#606060" />
<rect x="556.30" y="60.01" width="1.40" height="1.20" fill="#606060" />
<rect x="556.30" y="65.48" width="1.40" height="1.20" fill="#606060" />
<rect x="556.30" y="70.94" width="1.40" height="1.20" fill="#606060" />
<rect x="556.30" y="76.41" width="1.40" height="1.20" fill="#606060" />
<rect x="556.30" y="81.88" width="1.40" height="1.20" fill="#606060" />
<rect x="556.30" y="87.35" width="1.40" height="1.20" fill="#606060" />
<rect x="556.30" y="92.82" width="1.40" height="1.20" fill="#606060" />
<rect x="556.30" y="98.29" width="1.40" height="1.20" fill="#606060" />
<rect x="556.30" y="103.76" width="1.40" height="1.20" fill="#606060" />
<rect x="556.30" y="109.22" width="1.40" height="1.20" fill="#606060" />
<rect x="556.30" y="114.69" width="1.40" height="1.20" fill="#606060" />
<rect x="556.30" y="120.16" width="1.40" height="1.20" fill="#606060" />
<rect x="556.30" y="125.63" width="1.40" height="1.20" fill="#606060" />
<rect x="556.30" y="131.10" width="1.40" height="1.20" fill="#606060" />
<rect x="500.60" y="66.50" width="4.80" height="1.30" fill="#e428e4" />
<rect x="500.60" y="64.50" width="4.80" height="1.30" fill="#e428e4" />
<rect x="500.60" y="62.50" width="4.80" height="1.30" fill="#e428e4" />
<rect x="500.60" y="60.50" width="4.80" height="1.30" fill="#e428e4" />
<rect x="500.60" y="58.50" width="4.80" height="1.30" fill="#e428e4" />
<rect x="500.60" y="56.50" width="4.80" height="1.30" fill="#e428e4" />
<rect x="500.60" y="54.50" width="4.80" height="1.30" fill="#e428e4" />
<rect x="500.60" y="52.50" width="4.80" height="1.30" fill="#e428e4" />
<rect x="500.60" y="50.50" width="4.80" height="1.30" fill="#e428e4" />
<rect x="500.60" y="48.50" width="4.80" height="1.30" fill="#e428e4" />
<rect x="500.60" y="46.50" width="4.80" height="1.30" fill="#e428e4" />
<rect x="500.60" y="44.50" width="4.80" height="1.30" fill="#e428e4" />
<rect x="509.70" y="58.50" width="4.80" height="1.30" fill="#e428e4" />
<rect x="509.70" y="56.50" width="4.80" height="1.30" fill="#e428e4" />
<rect x="509.70" y="54.50" width="4.80" height="1.30" fill="#e428e4" />
<rect x="509.70" y="52.50" width="4.80" height="1.30" fill="#e428e4" />
<rect x="509.70" y="50.50" width="4.80" height="1.30" fill="#e428e4" />
<rect x="509.70" y="48.50" width="4.80" height="1.30" fill="#e428e4" />
<rect x="509.70" y="46.50" width="4.80" height="1.30" fill="#e428e4" />
<rect x="509.70" y="44.50" width="4.80" height="1.30" fill="#e428e4" />
<rect x="542.60" y="50.70" width="4.80" height="1.30" fill="#e428e4" />
<rect x="542.60" y="48.70" width="4.80" height="1.30" fill="#e428e4" />
<rect x="542.60" y="46.70" width="4.80" height="1.30" fill="#e428e4" />
<rect x="542.60" y="44.70" width="4.80" height="1.30" fill="#e428e4" />
<line x1="486.00" y1="137.00" x2="516.00" y2="137.00" stroke="#707070" stroke-width="1" />
<line x1="529.00" y1="137.00" x2="559.00" y2="137.00" stroke="#707070" stroke-width="1" />
<text x="486.00" y="143.80" font-size="9.5" fill="#fff" dominant-baseline="central" font-weight="bold" textLength="25.50" lengthAdjust="spacingAndGlyphs" >Audio</text>
<text x="486.00" y="155.20" font-size="9.5" fill="#fff" dominant-baseline="central" font-weight="bold" textLength="29.50" lengthAdjust="spacingAndGlyphs" >Limiter</text>
<text x="529.50" y="143.80" font-size="9.5" fill="#fff" dominant-baseline="central" font-weight="bold" textLength="11.00" lengthAdjust="spacingAndGlyphs" >HF</text>
<text x="529.50" y="155.20" font-size="9.5" fill="#fff" dominant-baseline="central" font-weight="bold" textLength="29.50" lengthAdjust="spacingAndGlyphs" >Limiter</text>
<text transform="translate(592.00,43.30) scale(0.84,1)" x="0" y="0" font-size="8.5" fill="#e8e8e8" dominant-baseline="central" text-anchor="end" stroke="#e8e8e8" stroke-width="0.25">0</text>
<text transform="translate(592.00,60.95) scale(0.84,1)" x="0" y="0" font-size="8.5" fill="#e8e8e8" dominant-baseline="central" text-anchor="end" stroke="#e8e8e8" stroke-width="0.25">-10</text>
<text transform="translate(592.00,78.60) scale(0.84,1)" x="0" y="0" font-size="8.5" fill="#e8e8e8" dominant-baseline="central" text-anchor="end" stroke="#e8e8e8" stroke-width="0.25">-20</text>
<text transform="translate(592.00,96.25) scale(0.84,1)" x="0" y="0" font-size="8.5" fill="#e8e8e8" dominant-baseline="central" text-anchor="end" stroke="#e8e8e8" stroke-width="0.25">-30</text>
<text transform="translate(592.00,113.90) scale(0.84,1)" x="0" y="0" font-size="8.5" fill="#e8e8e8" dominant-baseline="central" text-anchor="end" stroke="#e8e8e8" stroke-width="0.25">-40</text>
<text transform="translate(592.00,131.55) scale(0.84,1)" x="0" y="0" font-size="8.5" fill="#e8e8e8" dominant-baseline="central" text-anchor="end" stroke="#e8e8e8" stroke-width="0.25">-50</text>
<rect x="593.00" y="42.70" width="1.40" height="1.20" fill="#606060" />
<rect x="593.00" y="60.34" width="1.40" height="1.20" fill="#606060" />
<rect x="593.00" y="77.98" width="1.40" height="1.20" fill="#606060" />
<rect x="593.00" y="95.62" width="1.40" height="1.20" fill="#606060" />
<rect x="593.00" y="113.26" width="1.40" height="1.20" fill="#606060" />
<rect x="593.00" y="130.90" width="1.40" height="1.20" fill="#606060" />
<rect x="608.30" y="42.70" width="1.40" height="1.20" fill="#484848" />
<rect x="608.30" y="51.52" width="1.40" height="1.20" fill="#484848" />
<rect x="608.30" y="60.34" width="1.40" height="1.20" fill="#484848" />
<rect x="608.30" y="69.16" width="1.40" height="1.20" fill="#484848" />
<rect x="608.30" y="77.98" width="1.40" height="1.20" fill="#484848" />
<rect x="608.30" y="86.80" width="1.40" height="1.20" fill="#484848" />
<rect x="608.30" y="95.62" width="1.40" height="1.20" fill="#484848" />
<rect x="608.30" y="104.44" width="1.40" height="1.20" fill="#484848" />
<rect x="608.30" y="113.26" width="1.40" height="1.20" fill="#484848" />
<rect x="608.30" y="122.08" width="1.40" height="1.20" fill="#484848" />
<rect x="608.30" y="130.90" width="1.40" height="1.20" fill="#484848" />
<rect x="594.60" y="130.10" width="4.80" height="1.50" fill="#1cd6ce" />
<rect x="594.60" y="127.80" width="4.80" height="1.50" fill="#1cd6ce" />
<rect x="594.60" y="125.50" width="4.80" height="1.50" fill="#1cd6ce" />
<rect x="594.60" y="123.20" width="4.80" height="1.50" fill="#1cd6ce" />
<rect x="594.60" y="120.90" width="4.80" height="1.50" fill="#1cd6ce" />
<rect x="594.60" y="118.60" width="4.80" height="1.50" fill="#1cd6ce" />
<rect x="594.60" y="116.30" width="4.80" height="1.50" fill="#1cd6ce" />
<rect x="594.60" y="114.00" width="4.80" height="1.50" fill="#1cd6ce" />
<rect x="594.60" y="111.70" width="4.80" height="1.50" fill="#1cd6ce" />
<rect x="594.60" y="109.40" width="4.80" height="1.50" fill="#1cd6ce" />
<rect x="594.60" y="107.10" width="4.80" height="1.50" fill="#1cd6ce" />
<rect x="594.60" y="104.80" width="4.80" height="1.50" fill="#1cd6ce" />
<rect x="594.60" y="102.50" width="4.80" height="1.50" fill="#1cd6ce" />
<rect x="594.60" y="100.20" width="4.80" height="1.50" fill="#1cd6ce" />
<rect x="594.60" y="97.90" width="4.80" height="1.50" fill="#1cd6ce" />
<rect x="594.60" y="95.60" width="4.80" height="1.50" fill="#1cd6ce" />
<rect x="594.60" y="93.30" width="4.80" height="1.50" fill="#1cd6ce" />
<rect x="594.60" y="91.00" width="4.80" height="1.50" fill="#1cd6ce" />
<rect x="594.60" y="88.70" width="4.80" height="1.50" fill="#1cd6ce" />
<rect x="594.60" y="86.40" width="4.80" height="1.50" fill="#1cd6ce" />
<rect x="594.60" y="84.10" width="4.80" height="1.50" fill="#1cd6ce" />
<rect x="594.60" y="81.80" width="4.80" height="1.50" fill="#1cd6ce" />
<rect x="594.60" y="79.50" width="4.80" height="1.50" fill="#1cd6ce" />
<rect x="594.60" y="77.20" width="4.80" height="1.50" fill="#1cd6ce" />
<rect x="594.60" y="74.90" width="4.80" height="1.50" fill="#1cd6ce" />
<rect x="594.60" y="72.60" width="4.80" height="1.50" fill="#1cd6ce" />
<rect x="594.60" y="70.30" width="4.80" height="1.50" fill="#1cd6ce" />
<rect x="594.60" y="68.00" width="4.80" height="1.50" fill="#1cd6ce" />
<rect x="594.60" y="65.70" width="4.80" height="1.50" fill="#1cd6ce" />
<rect x="594.60" y="63.40" width="4.80" height="1.50" fill="#1cd6ce" />
<rect x="594.60" y="61.10" width="4.80" height="1.50" fill="#1cd6ce" />
<rect x="594.60" y="58.80" width="4.80" height="1.50" fill="#1cd6ce" />
<rect x="594.60" y="56.50" width="4.80" height="1.50" fill="#1cd6ce" />
<rect x="602.90" y="130.10" width="4.60" height="1.50" fill="#1cd6ce" />
<rect x="602.90" y="127.80" width="4.60" height="1.50" fill="#1cd6ce" />
<rect x="602.90" y="125.50" width="4.60" height="1.50" fill="#1cd6ce" />
<rect x="602.90" y="123.20" width="4.60" height="1.50" fill="#1cd6ce" />
<rect x="602.90" y="120.90" width="4.60" height="1.50" fill="#1cd6ce" />
<rect x="602.90" y="118.60" width="4.60" height="1.50" fill="#1cd6ce" />
<rect x="602.90" y="116.30" width="4.60" height="1.50" fill="#1cd6ce" />
<rect x="602.90" y="114.00" width="4.60" height="1.50" fill="#1cd6ce" />
<rect x="602.90" y="111.70" width="4.60" height="1.50" fill="#1cd6ce" />
<rect x="602.90" y="109.40" width="4.60" height="1.50" fill="#1cd6ce" />
<rect x="602.90" y="107.10" width="4.60" height="1.50" fill="#1cd6ce" />
<rect x="602.90" y="104.80" width="4.60" height="1.50" fill="#1cd6ce" />
<rect x="602.90" y="102.50" width="4.60" height="1.50" fill="#1cd6ce" />
<rect x="602.90" y="100.20" width="4.60" height="1.50" fill="#1cd6ce" />
<rect x="602.90" y="97.90" width="4.60" height="1.50" fill="#1cd6ce" />
<rect x="602.90" y="95.60" width="4.60" height="1.50" fill="#1cd6ce" />
<rect x="602.90" y="93.30" width="4.60" height="1.50" fill="#1cd6ce" />
<rect x="602.90" y="91.00" width="4.60" height="1.50" fill="#1cd6ce" />
<rect x="602.90" y="88.70" width="4.60" height="1.50" fill="#1cd6ce" />
<rect x="602.90" y="86.40" width="4.60" height="1.50" fill="#1cd6ce" />
<rect x="602.90" y="84.10" width="4.60" height="1.50" fill="#1cd6ce" />
<rect x="602.90" y="81.80" width="4.60" height="1.50" fill="#1cd6ce" />
<rect x="602.90" y="79.50" width="4.60" height="1.50" fill="#1cd6ce" />
<rect x="602.90" y="77.20" width="4.60" height="1.50" fill="#1cd6ce" />
<rect x="602.90" y="74.90" width="4.60" height="1.50" fill="#1cd6ce" />
<rect x="602.90" y="72.60" width="4.60" height="1.50" fill="#1cd6ce" />
<rect x="602.90" y="70.30" width="4.60" height="1.50" fill="#1cd6ce" />
<rect x="602.90" y="68.00" width="4.60" height="1.50" fill="#1cd6ce" />
<rect x="602.90" y="65.70" width="4.60" height="1.50" fill="#1cd6ce" />
<rect x="602.90" y="63.40" width="4.60" height="1.50" fill="#1cd6ce" />
<rect x="602.90" y="61.10" width="4.60" height="1.50" fill="#1cd6ce" />
<rect x="602.90" y="58.80" width="4.60" height="1.50" fill="#1cd6ce" />
<rect x="602.90" y="56.50" width="4.60" height="1.50" fill="#1cd6ce" />
<rect x="594.60" y="47.70" width="4.80" height="1.50" fill="#78a8e0" />
<rect x="602.90" y="47.70" width="4.60" height="1.50" fill="#78a8e0" />
<line x1="579.00" y1="136.80" x2="611.00" y2="136.80" stroke="#707070" stroke-width="1" />
<text x="579.50" y="143.80" font-size="9.5" fill="#fff" dominant-baseline="central" font-weight="bold" textLength="18.00" lengthAdjust="spacingAndGlyphs" >DBP</text>
<text x="579.50" y="155.20" font-size="9.5" fill="#fff" dominant-baseline="central" font-weight="bold" textLength="32.00" lengthAdjust="spacingAndGlyphs" >Output</text>
<rect x="3.00" y="166.80" width="615.50" height="23.40" fill="#d3d3cf" />
<line x1="3.00" y1="167.30" x2="618.00" y2="167.30" stroke="#f8f8f8" stroke-width="1" />
<line x1="3.00" y1="190.00" x2="618.00" y2="190.00" stroke="#707070" stroke-width="1" />
<path d="M14.5,172 h4 l1,1.2 h5 v7 h-10 z" fill="#e8e040" stroke="#303000" stroke-width="0.7" />
<path d="M14.5,180.2 l2.5,-4.6 h9.5 l-2.5,4.6 z" fill="#f8f880" stroke="#303000" stroke-width="0.7" />
<path d="M21.5,170.6 q2.5,-1.8 4,0.4" fill="none" stroke="#202020" stroke-width="0.8" />
<text x="9.00" y="185.20" font-size="8.5" fill="#0a0a0a" dominant-baseline="central" textLength="22.00" lengthAdjust="spacingAndGlyphs" stroke="#0a0a0a" stroke-width="0.3">Preset</text>
<line x1="37.00" y1="169.50" x2="37.00" y2="188.00" stroke="#a8a8a8" stroke-width="1" />
<line x1="38.00" y1="169.50" x2="38.00" y2="188.00" stroke="#fafafa" stroke-width="1" />
<rect x="46.50" y="169.20" width="3.40" height="11.00" fill="#101010" />
<rect x="47.30" y="170.70" width="1.80" height="6.00" fill="#e050e0" />
<rect x="52.70" y="169.20" width="3.40" height="11.00" fill="#101010" />
<rect x="53.50" y="170.70" width="1.80" height="4.00" fill="#e050e0" />
<line x1="59.00" y1="169.70" x2="59.00" y2="178.20" stroke="#b0b0b0" stroke-width="1" />
<text x="44.00" y="185.20" font-size="8.5" fill="#0a0a0a" dominant-baseline="central" textLength="16.20" lengthAdjust="spacingAndGlyphs" stroke="#0a0a0a" stroke-width="0.3">AGC</text>
<rect x="75.00" y="169.00" width="29.00" height="11.00" fill="#080808" />
<rect x="77.60" y="171.40" width="5.50" height="5.80" fill="#e868e8" />
<rect x="83.70" y="171.40" width="5.50" height="6.60" fill="#e868e8" />
<rect x="89.80" y="171.40" width="5.50" height="5.80" fill="#e868e8" />
<rect x="95.90" y="171.40" width="5.50" height="6.60" fill="#e868e8" />
<line x1="107.00" y1="170.00" x2="107.00" y2="178.00" stroke="#b0b0b0" stroke-width="1" />
<text x="67.00" y="185.20" font-size="8.5" fill="#0a0a0a" dominant-baseline="central" textLength="46.20" lengthAdjust="spacingAndGlyphs" stroke="#0a0a0a" stroke-width="0.3">Band Process</text>
<rect x="124.00" y="169.20" width="3.40" height="11.00" fill="#101010" />
<rect x="124.80" y="170.70" width="1.80" height="6.00" fill="#e050e0" />
<rect x="130.20" y="169.20" width="3.40" height="11.00" fill="#101010" />
<rect x="131.00" y="170.70" width="1.80" height="4.00" fill="#e050e0" />
<line x1="136.50" y1="169.70" x2="136.50" y2="178.20" stroke="#b0b0b0" stroke-width="1" />
<text x="119.00" y="185.20" font-size="8.5" fill="#0a0a0a" dominant-baseline="central" textLength="22.00" lengthAdjust="spacingAndGlyphs" stroke="#0a0a0a" stroke-width="0.3">Limiter</text>
<rect x="157.00" y="169.00" width="21.50" height="11.00" fill="#080808" />
<path d="M158.5,171 v7 h18 v-3.2 h-2 v-1 h-3 v0.8 h-3.5 v-1.4 h-3 v1.2 h-3 v-1 h-1.8 v-2.4z" fill="#30d0c8" stroke="none" stroke-width="1" />
<text x="147.00" y="185.20" font-size="8.5" fill="#0a0a0a" dominant-baseline="central" textLength="42.60" lengthAdjust="spacingAndGlyphs" stroke="#0a0a0a" stroke-width="0.3">St. Generator</text>
<rect x="204.40" y="169.00" width="15.80" height="11.00" fill="#080808" />
<rect x="206.50" y="174.50" width="2.20" height="3.50" fill="#30d0d0" />
<rect x="210.00" y="173.50" width="2.00" height="4.50" fill="#30d0d0" />
<path d="M214.5,171 l1.8,3.5 l-1.8,3.5 l-1.8,-3.5z" fill="#f040f0" stroke="none" stroke-width="1" />
<line x1="205.50" y1="178.40" x2="219.00" y2="178.40" stroke="#909090" stroke-width="0.6" />
<text x="196.60" y="185.20" font-size="8.5" fill="#0a0a0a" dominant-baseline="central" textLength="32.00" lengthAdjust="spacingAndGlyphs" stroke="#0a0a0a" stroke-width="0.3">Key Tools</text>
<rect x="241.20" y="169.00" width="3.00" height="11.20" fill="#20a0a0" />
<rect x="241.20" y="169.00" width="3.00" height="4.00" fill="#a040c0" />
<rect x="245.60" y="169.00" width="3.00" height="11.20" fill="#20a0a0" />
<rect x="245.60" y="169.00" width="3.00" height="4.60" fill="#c04080" />
<line x1="251.00" y1="169.50" x2="251.00" y2="179.50" stroke="#b0b0b0" stroke-width="1" />
<text x="239.00" y="185.20" font-size="8.5" fill="#0a0a0a" dominant-baseline="central" textLength="17.00" lengthAdjust="spacingAndGlyphs" stroke="#0a0a0a" stroke-width="0.3">Level</text>
<line x1="266.00" y1="169.50" x2="266.00" y2="188.00" stroke="#a8a8a8" stroke-width="1" />
<line x1="267.00" y1="169.50" x2="267.00" y2="188.00" stroke="#fafafa" stroke-width="1" />
<rect x="279.50" y="172.50" width="6.00" height="7.50" fill="#30b8c8" stroke="#104050" stroke-width="0.7"/>
<rect x="285.50" y="175.50" width="6.00" height="4.50" fill="#30b8c8" stroke="#104050" stroke-width="0.7"/>
<rect x="280.50" y="169.50" width="4.50" height="3.40" fill="#60d8e0" stroke="#104050" stroke-width="0.6"/>
<circle cx="291.3" cy="171.3" r="1.9" fill="#40c0a0" stroke="#205040" stroke-width="0.6"/>
<text x="274.00" y="185.20" font-size="8.5" fill="#0a0a0a" dominant-baseline="central" textLength="21.60" lengthAdjust="spacingAndGlyphs" stroke="#0a0a0a" stroke-width="0.3">Plug In</text>
<line x1="304.40" y1="169.50" x2="304.40" y2="188.00" stroke="#a8a8a8" stroke-width="1" />
<line x1="305.40" y1="169.50" x2="305.40" y2="188.00" stroke="#fafafa" stroke-width="1" />
<rect x="316.00" y="169.40" width="16.20" height="10.80" fill="#080808" />
<path d="M318,171.2 h8.5 q3.2,0.4 3.6,7 h-12.1z" fill="#30e0e0" stroke="none" stroke-width="1" />
<line x1="329.40" y1="176.60" x2="331.00" y2="178.40" stroke="#f040f0" stroke-width="1" />
<text x="312.60" y="185.20" font-size="8.5" fill="#0a0a0a" dominant-baseline="central" textLength="21.00" lengthAdjust="spacingAndGlyphs" stroke="#0a0a0a" stroke-width="0.3">Result</text>
<line x1="343.60" y1="174.60" x2="372.00" y2="174.60" stroke="#f040f0" stroke-width="1.4" stroke-dasharray="2.4 1.2"/>
<path d="M348.2,170 l8,4.6 l-8,4.6z" fill="#080808" stroke="none" stroke-width="1" />
<path d="M360,170 l8,4.6 l-8,4.6z" fill="#080808" stroke="none" stroke-width="1" />
<path d="M349.5,175 q1.5,-2 3,0" fill="none" stroke="#30d0d0" stroke-width="0.8" />
<path d="M361.2,173.4 q2,-0.6 3.4,1.6" fill="none" stroke="#30d0d0" stroke-width="0.8" />
<text x="343.60" y="185.20" font-size="8.5" fill="#0a0a0a" dominant-baseline="central" textLength="27.00" lengthAdjust="spacingAndGlyphs" stroke="#0a0a0a" stroke-width="0.3">Diagram</text>
<line x1="384.00" y1="174.60" x2="400.00" y2="174.60" stroke="#f040f0" stroke-width="1.4" stroke-dasharray="2.4 1.2"/>
<path d="M388,170 l8.4,4.6 l-8.4,4.6z" fill="#080808" stroke="none" stroke-width="1" />
<line x1="386.40" y1="169.60" x2="395.60" y2="179.60" stroke="#e8e830" stroke-width="1.1" />
<line x1="395.60" y1="169.60" x2="386.40" y2="179.60" stroke="#e8e830" stroke-width="1.1" />
<text x="380.00" y="185.20" font-size="8.5" fill="#505050" dominant-baseline="central" textLength="24.00" lengthAdjust="spacingAndGlyphs" >Bypass</text>
<line x1="411.00" y1="169.50" x2="411.00" y2="188.00" stroke="#a8a8a8" stroke-width="1" />
<line x1="412.00" y1="169.50" x2="412.00" y2="188.00" stroke="#fafafa" stroke-width="1" />
<rect x="426.20" y="168.80" width="12.80" height="11.60" fill="#e8f0f8" stroke="#405060" stroke-width="0.8"/>
<rect x="426.20" y="168.80" width="12.80" height="2.60" fill="#4060a0" />
<rect x="427.50" y="172.20" width="10.00" height="7.00" fill="#70b8d8" />
<circle cx="433" cy="176.4" r="3" fill="#f4f8ff" stroke="#204060" stroke-width="0.9"/>
<text x="416.00" y="185.20" font-size="8.5" fill="#0a0a0a" dominant-baseline="central" textLength="32.00" lengthAdjust="spacingAndGlyphs" stroke="#0a0a0a" stroke-width="0.3">Scheduler</text>
<line x1="451.40" y1="169.50" x2="451.40" y2="188.00" stroke="#a8a8a8" stroke-width="1" />
<line x1="452.40" y1="169.50" x2="452.40" y2="188.00" stroke="#fafafa" stroke-width="1" />
<rect x="453.00" y="167.80" width="165.50" height="22.00" fill="#cacaca" />
<text x="456.60" y="178.30" font-size="16.5" fill="#000" dominant-baseline="central" textLength="107.50" lengthAdjust="spacingAndGlyphs" >BAND PROCESS</text>
<path d="M573,179.2 h9.6 l-4.8,8.2z" fill="#080808" stroke="none" stroke-width="1" />
<rect x="3.00" y="190.50" width="615.50" height="260.00" fill="#909090" />
<line x1="3.60" y1="190.50" x2="3.60" y2="449.00" stroke="#686868" stroke-width="1" />
<line x1="3.00" y1="448.60" x2="606.00" y2="448.60" stroke="#c8c8c8" stroke-width="1" />
<rect x="606.50" y="190.50" width="10.20" height="260.00" fill="#f2f1ec" />
<line x1="606.30" y1="190.50" x2="606.30" y2="450.00" stroke="#b0b0b0" stroke-width="0.8" />
<rect x="606.80" y="191.50" width="9.60" height="10.40" fill="#dedcd4" stroke="#808080" stroke-width="0.7"/>
<path d="M608.7,198.7 h5.8 l-2.9,-3.6z" fill="#000" stroke="none" stroke-width="1" />
<rect x="606.80" y="438.00" width="9.60" height="10.40" fill="#dedcd4" stroke="#808080" stroke-width="0.7"/>
<path d="M608.7,441.6 h5.8 l-2.9,3.6z" fill="#000" stroke="none" stroke-width="1" />
<rect x="5.50" y="192.50" width="196.70" height="82.50" fill="#c2c2c2" rx="10.5" />
<rect x="7.00" y="194.00" width="193.70" height="79.50" fill="#000" rx="9" />
<line x1="13.41" y1="202.80" x2="13.41" y2="254.60" stroke="#a4a4a4" stroke-width="0.9" />
<line x1="23.89" y1="202.80" x2="23.89" y2="254.60" stroke="#a4a4a4" stroke-width="0.9" />
<line x1="31.32" y1="202.80" x2="31.32" y2="254.60" stroke="#a4a4a4" stroke-width="0.9" />
<line x1="37.09" y1="202.80" x2="37.09" y2="254.60" stroke="#a4a4a4" stroke-width="0.9" />
<line x1="41.80" y1="202.80" x2="41.80" y2="254.60" stroke="#a4a4a4" stroke-width="0.9" />
<line x1="45.78" y1="202.80" x2="45.78" y2="254.60" stroke="#a4a4a4" stroke-width="0.9" />
<line x1="49.23" y1="202.80" x2="49.23" y2="254.60" stroke="#a4a4a4" stroke-width="0.9" />
<line x1="52.28" y1="202.80" x2="52.28" y2="254.60" stroke="#a4a4a4" stroke-width="0.9" />
<line x1="55.00" y1="202.80" x2="55.00" y2="254.60" stroke="#a4a4a4" stroke-width="0.9" />
<line x1="72.91" y1="202.80" x2="72.91" y2="254.60" stroke="#a4a4a4" stroke-width="0.9" />
<line x1="83.39" y1="202.80" x2="83.39" y2="254.60" stroke="#a4a4a4" stroke-width="0.9" />
<line x1="90.82" y1="202.80" x2="90.82" y2="254.60" stroke="#a4a4a4" stroke-width="0.9" />
<line x1="96.59" y1="202.80" x2="96.59" y2="254.60" stroke="#a4a4a4" stroke-width="0.9" />
<line x1="101.30" y1="202.80" x2="101.30" y2="254.60" stroke="#a4a4a4" stroke-width="0.9" />
<line x1="105.28" y1="202.80" x2="105.28" y2="254.60" stroke="#a4a4a4" stroke-width="0.9" />
<line x1="108.73" y1="202.80" x2="108.73" y2="254.60" stroke="#a4a4a4" stroke-width="0.9" />
<line x1="111.78" y1="202.80" x2="111.78" y2="254.60" stroke="#a4a4a4" stroke-width="0.9" />
<line x1="114.50" y1="202.80" x2="114.50" y2="254.60" stroke="#a4a4a4" stroke-width="0.9" />
<line x1="132.41" y1="202.80" x2="132.41" y2="254.60" stroke="#a4a4a4" stroke-width="0.9" />
<line x1="142.89" y1="202.80" x2="142.89" y2="254.60" stroke="#a4a4a4" stroke-width="0.9" />
<line x1="150.32" y1="202.80" x2="150.32" y2="254.60" stroke="#a4a4a4" stroke-width="0.9" />
<line x1="156.09" y1="202.80" x2="156.09" y2="254.60" stroke="#a4a4a4" stroke-width="0.9" />
<line x1="160.80" y1="202.80" x2="160.80" y2="254.60" stroke="#a4a4a4" stroke-width="0.9" />
<line x1="164.78" y1="202.80" x2="164.78" y2="254.60" stroke="#a4a4a4" stroke-width="0.9" />
<line x1="168.23" y1="202.80" x2="168.23" y2="254.60" stroke="#a4a4a4" stroke-width="0.9" />
<line x1="171.28" y1="202.80" x2="171.28" y2="254.60" stroke="#a4a4a4" stroke-width="0.9" />
<line x1="174.00" y1="202.80" x2="174.00" y2="254.60" stroke="#a4a4a4" stroke-width="0.9" />
<line x1="191.91" y1="202.80" x2="191.91" y2="254.60" stroke="#a4a4a4" stroke-width="0.9" />
<text x="45.50" y="201.20" font-size="5" fill="#e0e0e0" dominant-baseline="central" font-weight="bold" text-anchor="middle" >more</text>
<line x1="45.50" y1="203.00" x2="45.50" y2="252.50" stroke="#e8e8e8" stroke-width="1" stroke-dasharray="1.8 1.4"/>
<text x="71.25" y="201.20" font-size="5" fill="#e0e0e0" dominant-baseline="central" font-weight="bold" text-anchor="middle" >more</text>
<line x1="71.25" y1="203.00" x2="71.25" y2="252.50" stroke="#e8e8e8" stroke-width="1" stroke-dasharray="1.8 1.4"/>
<text x="130.50" y="201.20" font-size="5" fill="#e0e0e0" dominant-baseline="central" font-weight="bold" text-anchor="middle" >more</text>
<line x1="130.50" y1="203.00" x2="130.50" y2="252.50" stroke="#e8e8e8" stroke-width="1" stroke-dasharray="1.8 1.4"/>
<text x="164.25" y="201.20" font-size="5" fill="#e0e0e0" dominant-baseline="central" font-weight="bold" text-anchor="middle" >more</text>
<line x1="164.25" y1="203.00" x2="164.25" y2="252.50" stroke="#e8e8e8" stroke-width="1" stroke-dasharray="1.8 1.4"/>
<text x="180.00" y="201.20" font-size="5" fill="#e0e0e0" dominant-baseline="central" font-weight="bold" text-anchor="middle" >more</text>
<line x1="180.00" y1="203.00" x2="180.00" y2="252.50" stroke="#e8e8e8" stroke-width="1" stroke-dasharray="1.8 1.4"/>
<path d="M13.8,235.5 C25,235.4 32,234.5 38,232.4 C42,231 44,227 45.5,227 C47.5,227 49,230.8 53,232.6 C60,235 66,235.2 71.2,235.4 L80,235.9 H191" fill="none" stroke="#18c8c8" stroke-width="1.1" />
<rect x="44.10" y="225.60" width="2.80" height="2.80" fill="#d0f0f0" />
<rect x="69.85" y="234.00" width="2.80" height="2.80" fill="#d0f0f0" />
<rect x="129.10" y="234.50" width="2.80" height="2.80" fill="#d0f0f0" />
<rect x="162.85" y="234.50" width="2.80" height="2.80" fill="#d0f0f0" />
<rect x="178.60" y="234.50" width="2.80" height="2.80" fill="#d0f0f0" />
<path d="M46.2,233.2 l3,-2.4 v4.8z" fill="#e8e8e8" stroke="none" stroke-width="1" />
<path d="M71.6,227.5 l3,-2.4 v4.8z" fill="#e8e8e8" stroke="none" stroke-width="1" />
<path d="M132.2,253.0 l3,-2.4 v4.8z" fill="#e8e8e8" stroke="none" stroke-width="1" />
<path d="M164.6,253.0 l3,-2.4 v4.8z" fill="#e8e8e8" stroke="none" stroke-width="1" />
<path d="M181.0,253.0 l3,-2.4 v4.8z" fill="#e8e8e8" stroke="none" stroke-width="1" />
<line x1="16.00" y1="258.20" x2="179.00" y2="258.20" stroke="#8a8a8a" stroke-width="1" />
<text x="21.80" y="264.80" font-size="9.5" fill="#fff" dominant-baseline="central" font-weight="bold" textLength="39.20" lengthAdjust="spacingAndGlyphs" >Input EQ</text>
<line x1="168.80" y1="261.00" x2="178.00" y2="270.40" stroke="#b0b0b0" stroke-width="1" />
<line x1="178.00" y1="261.00" x2="168.80" y2="270.40" stroke="#b0b0b0" stroke-width="1" />
<rect x="205.30" y="192.50" width="196.70" height="82.50" fill="#c2c2c2" rx="10.5" />
<rect x="206.80" y="194.00" width="193.70" height="79.50" fill="#000" rx="9" />
<text transform="translate(223.30,202.30) scale(0.86,1)" x="0" y="0" font-size="7.8" fill="#e4e4e4" dominant-baseline="central" text-anchor="end" stroke="#e4e4e4" stroke-width="0.2">11</text>
<rect x="224.10" y="201.80" width="1.50" height="1.00" fill="#707070" />
<text transform="translate(223.30,214.45) scale(0.86,1)" x="0" y="0" font-size="7.8" fill="#e4e4e4" dominant-baseline="central" text-anchor="end" stroke="#e4e4e4" stroke-width="0.2">0,8</text>
<rect x="224.10" y="213.95" width="1.50" height="1.00" fill="#707070" />
<text transform="translate(223.30,226.60) scale(0.86,1)" x="0" y="0" font-size="7.8" fill="#e4e4e4" dominant-baseline="central" text-anchor="end" stroke="#e4e4e4" stroke-width="0.2">0,3</text>
<rect x="224.10" y="226.10" width="1.50" height="1.00" fill="#707070" />
<text transform="translate(223.30,238.75) scale(0.86,1)" x="0" y="0" font-size="7.8" fill="#e4e4e4" dominant-baseline="central" text-anchor="end" stroke="#e4e4e4" stroke-width="0.2">0,05</text>
<rect x="224.10" y="238.25" width="1.50" height="1.00" fill="#707070" />
<text transform="translate(223.30,250.90) scale(0.86,1)" x="0" y="0" font-size="7.8" fill="#e4e4e4" dominant-baseline="central" text-anchor="end" stroke="#e4e4e4" stroke-width="0.2">0</text>
<rect x="224.10" y="250.40" width="1.50" height="1.00" fill="#707070" />
<line x1="234.77" y1="202.50" x2="234.77" y2="252.50" stroke="#9a9a9a" stroke-width="0.8" />
<line x1="240.75" y1="202.50" x2="240.75" y2="252.50" stroke="#9a9a9a" stroke-width="0.8" />
<line x1="245.22" y1="202.50" x2="245.22" y2="252.50" stroke="#9a9a9a" stroke-width="0.8" />
<line x1="249.21" y1="202.50" x2="249.21" y2="252.50" stroke="#9a9a9a" stroke-width="0.8" />
<line x1="252.71" y1="202.50" x2="252.71" y2="252.50" stroke="#9a9a9a" stroke-width="0.8" />
<line x1="255.19" y1="202.50" x2="255.19" y2="252.50" stroke="#9a9a9a" stroke-width="0.8" />
<line x1="260.69" y1="202.50" x2="260.69" y2="252.50" stroke="#9a9a9a" stroke-width="0.8" />
<line x1="274.64" y1="202.50" x2="274.64" y2="252.50" stroke="#9a9a9a" stroke-width="0.8" />
<line x1="289.60" y1="202.50" x2="289.60" y2="252.50" stroke="#9a9a9a" stroke-width="0.8" />
<line x1="294.10" y1="202.50" x2="294.10" y2="252.50" stroke="#9a9a9a" stroke-width="0.8" />
<line x1="298.08" y1="202.50" x2="298.08" y2="252.50" stroke="#9a9a9a" stroke-width="0.8" />
<line x1="301.39" y1="202.50" x2="301.39" y2="252.50" stroke="#9a9a9a" stroke-width="0.8" />
<line x1="306.63" y1="202.50" x2="306.63" y2="252.50" stroke="#9a9a9a" stroke-width="0.8" />
<line x1="308.82" y1="202.50" x2="308.82" y2="252.50" stroke="#9a9a9a" stroke-width="0.8" />
<line x1="323.97" y1="202.50" x2="323.97" y2="252.50" stroke="#9a9a9a" stroke-width="0.8" />
<line x1="332.74" y1="202.50" x2="332.74" y2="252.50" stroke="#9a9a9a" stroke-width="0.8" />
<line x1="338.72" y1="202.50" x2="338.72" y2="252.50" stroke="#9a9a9a" stroke-width="0.8" />
<line x1="343.91" y1="202.50" x2="343.91" y2="252.50" stroke="#9a9a9a" stroke-width="0.8" />
<line x1="347.70" y1="202.50" x2="347.70" y2="252.50" stroke="#9a9a9a" stroke-width="0.8" />
<line x1="350.69" y1="202.50" x2="350.69" y2="252.50" stroke="#9a9a9a" stroke-width="0.8" />
<line x1="353.88" y1="202.50" x2="353.88" y2="252.50" stroke="#9a9a9a" stroke-width="0.8" />
<line x1="356.18" y1="202.50" x2="356.18" y2="252.50" stroke="#9a9a9a" stroke-width="0.8" />
<line x1="358.92" y1="202.50" x2="358.92" y2="252.50" stroke="#9a9a9a" stroke-width="0.8" />
<line x1="225.80" y1="202.00" x2="225.80" y2="252.50" stroke="#0c8c84" stroke-width="1" stroke-dasharray="1.6 1.4"/>
<line x1="258.10" y1="202.00" x2="258.10" y2="252.50" stroke="#0c8c84" stroke-width="1" stroke-dasharray="1.6 1.4"/>
<line x1="283.80" y1="202.00" x2="283.80" y2="252.50" stroke="#0c8c84" stroke-width="1" stroke-dasharray="1.6 1.4"/>
<line x1="302.60" y1="202.00" x2="302.60" y2="252.50" stroke="#0c8c84" stroke-width="1" stroke-dasharray="1.6 1.4"/>
<line x1="322.60" y1="202.00" x2="322.60" y2="252.50" stroke="#0c8c84" stroke-width="1" stroke-dasharray="1.6 1.4"/>
<line x1="340.10" y1="202.00" x2="340.10" y2="252.50" stroke="#0c8c84" stroke-width="1" stroke-dasharray="1.6 1.4"/>
<line x1="358.80" y1="202.00" x2="358.80" y2="252.50" stroke="#0c8c84" stroke-width="1" stroke-dasharray="1.6 1.4"/>
<line x1="373.10" y1="202.00" x2="373.10" y2="252.50" stroke="#0c8c84" stroke-width="1" stroke-dasharray="1.6 1.4"/>
<path d="M225.8,245.50 H258.1 M258.1,246.50 H283.8 M283.8,247.50 H302.6 M302.6,247.50 H322.6 M322.6,247.50 H340.1 M340.1,246.50 H358.8 M358.8,240.50 H373.1 " fill="none" stroke="#18c8c8" stroke-width="1.1" />
<line x1="214.80" y1="257.40" x2="377.80" y2="257.40" stroke="#8a8a8a" stroke-width="1" />
<path d="M213.8,264.6 h6 l-3,5.6z" fill="#f414f4" stroke="none" stroke-width="1" />
<text x="222.80" y="265.60" font-size="9.5" fill="#fff" dominant-baseline="central" font-weight="bold" textLength="72.50" lengthAdjust="spacingAndGlyphs" >Expander Attack</text>
<line x1="311.50" y1="260.50" x2="320.30" y2="269.50" stroke="#b0b0b0" stroke-width="1" />
<line x1="320.30" y1="260.50" x2="311.50" y2="269.50" stroke="#b0b0b0" stroke-width="1" />
<text x="321.60" y="265.70" font-size="8" fill="#d0d0d0" dominant-baseline="central" textLength="21.20" lengthAdjust="spacingAndGlyphs" >Stored</text>
<circle cx="346.4" cy="266.2" r="0.8" fill="#b0b0b0"/>
<text x="352.00" y="265.70" font-size="7.5" fill="#d8d8d8" dominant-baseline="central" textLength="11.30" lengthAdjust="spacingAndGlyphs" >11 %</text>
<circle cx="372.6" cy="266.2" r="1.3" fill="#18c8c8"/>
<text x="379.20" y="265.70" font-size="7.5" fill="#18d0d0" dominant-baseline="central" font-weight="bold" textLength="12.30" lengthAdjust="spacingAndGlyphs" >11 %</text>
<line x1="388.60" y1="210.00" x2="388.60" y2="245.00" stroke="#e8e8e8" stroke-width="1.3" />
<rect x="383.00" y="233.40" width="11.60" height="14.40" fill="#000" />
<path d="M383.8,240.6 L393.6,233.9 V247.3 Z" fill="#f414f4" stroke="none" stroke-width="1" />
<rect x="405.00" y="192.50" width="196.70" height="82.50" fill="#c2c2c2" rx="10.5" />
<rect x="406.50" y="194.00" width="193.70" height="79.50" fill="#000" rx="9" />
<text transform="translate(423.00,202.30) scale(0.86,1)" x="0" y="0" font-size="7.8" fill="#e4e4e4" dominant-baseline="central" text-anchor="end" stroke="#e4e4e4" stroke-width="0.2">11</text>
<rect x="423.80" y="201.80" width="1.50" height="1.00" fill="#707070" />
<text transform="translate(423.00,214.45) scale(0.86,1)" x="0" y="0" font-size="7.8" fill="#e4e4e4" dominant-baseline="central" text-anchor="end" stroke="#e4e4e4" stroke-width="0.2">0,8</text>
<rect x="423.80" y="213.95" width="1.50" height="1.00" fill="#707070" />
<text transform="translate(423.00,226.60) scale(0.86,1)" x="0" y="0" font-size="7.8" fill="#e4e4e4" dominant-baseline="central" text-anchor="end" stroke="#e4e4e4" stroke-width="0.2">0,3</text>
<rect x="423.80" y="226.10" width="1.50" height="1.00" fill="#707070" />
<text transform="translate(423.00,238.75) scale(0.86,1)" x="0" y="0" font-size="7.8" fill="#e4e4e4" dominant-baseline="central" text-anchor="end" stroke="#e4e4e4" stroke-width="0.2">0,05</text>
<rect x="423.80" y="238.25" width="1.50" height="1.00" fill="#707070" />
<text transform="translate(423.00,250.90) scale(0.86,1)" x="0" y="0" font-size="7.8" fill="#e4e4e4" dominant-baseline="central" text-anchor="end" stroke="#e4e4e4" stroke-width="0.2">0</text>
<rect x="423.80" y="250.40" width="1.50" height="1.00" fill="#707070" />
<line x1="434.47" y1="202.50" x2="434.47" y2="252.50" stroke="#9a9a9a" stroke-width="0.8" />
<line x1="440.45" y1="202.50" x2="440.45" y2="252.50" stroke="#9a9a9a" stroke-width="0.8" />
<line x1="444.92" y1="202.50" x2="444.92" y2="252.50" stroke="#9a9a9a" stroke-width="0.8" />
<line x1="448.91" y1="202.50" x2="448.91" y2="252.50" stroke="#9a9a9a" stroke-width="0.8" />
<line x1="452.41" y1="202.50" x2="452.41" y2="252.50" stroke="#9a9a9a" stroke-width="0.8" />
<line x1="454.89" y1="202.50" x2="454.89" y2="252.50" stroke="#9a9a9a" stroke-width="0.8" />
<line x1="460.39" y1="202.50" x2="460.39" y2="252.50" stroke="#9a9a9a" stroke-width="0.8" />
<line x1="474.34" y1="202.50" x2="474.34" y2="252.50" stroke="#9a9a9a" stroke-width="0.8" />
<line x1="489.30" y1="202.50" x2="489.30" y2="252.50" stroke="#9a9a9a" stroke-width="0.8" />
<line x1="493.80" y1="202.50" x2="493.80" y2="252.50" stroke="#9a9a9a" stroke-width="0.8" />
<line x1="497.78" y1="202.50" x2="497.78" y2="252.50" stroke="#9a9a9a" stroke-width="0.8" />
<line x1="501.09" y1="202.50" x2="501.09" y2="252.50" stroke="#9a9a9a" stroke-width="0.8" />
<line x1="506.33" y1="202.50" x2="506.33" y2="252.50" stroke="#9a9a9a" stroke-width="0.8" />
<line x1="508.52" y1="202.50" x2="508.52" y2="252.50" stroke="#9a9a9a" stroke-width="0.8" />
<line x1="523.67" y1="202.50" x2="523.67" y2="252.50" stroke="#9a9a9a" stroke-width="0.8" />
<line x1="532.44" y1="202.50" x2="532.44" y2="252.50" stroke="#9a9a9a" stroke-width="0.8" />
<line x1="538.42" y1="202.50" x2="538.42" y2="252.50" stroke="#9a9a9a" stroke-width="0.8" />
<line x1="543.61" y1="202.50" x2="543.61" y2="252.50" stroke="#9a9a9a" stroke-width="0.8" />
<line x1="547.40" y1="202.50" x2="547.40" y2="252.50" stroke="#9a9a9a" stroke-width="0.8" />
<line x1="550.39" y1="202.50" x2="550.39" y2="252.50" stroke="#9a9a9a" stroke-width="0.8" />
<line x1="553.58" y1="202.50" x2="553.58" y2="252.50" stroke="#9a9a9a" stroke-width="0.8" />
<line x1="555.88" y1="202.50" x2="555.88" y2="252.50" stroke="#9a9a9a" stroke-width="0.8" />
<line x1="558.62" y1="202.50" x2="558.62" y2="252.50" stroke="#9a9a9a" stroke-width="0.8" />
<line x1="425.50" y1="202.00" x2="425.50" y2="252.50" stroke="#0c8c84" stroke-width="1" stroke-dasharray="1.6 1.4"/>
<line x1="457.80" y1="202.00" x2="457.80" y2="252.50" stroke="#0c8c84" stroke-width="1" stroke-dasharray="1.6 1.4"/>
<line x1="483.50" y1="202.00" x2="483.50" y2="252.50" stroke="#0c8c84" stroke-width="1" stroke-dasharray="1.6 1.4"/>
<line x1="502.30" y1="202.00" x2="502.30" y2="252.50" stroke="#0c8c84" stroke-width="1" stroke-dasharray="1.6 1.4"/>
<line x1="522.30" y1="202.00" x2="522.30" y2="252.50" stroke="#0c8c84" stroke-width="1" stroke-dasharray="1.6 1.4"/>
<line x1="539.80" y1="202.00" x2="539.80" y2="252.50" stroke="#0c8c84" stroke-width="1" stroke-dasharray="1.6 1.4"/>
<line x1="558.50" y1="202.00" x2="558.50" y2="252.50" stroke="#0c8c84" stroke-width="1" stroke-dasharray="1.6 1.4"/>
<line x1="572.80" y1="202.00" x2="572.80" y2="252.50" stroke="#0c8c84" stroke-width="1" stroke-dasharray="1.6 1.4"/>
<path d="M425.5,236.50 H457.8 M457.8,245.50 H483.5 M483.5,247.50 H502.3 M502.3,247.50 H522.3 M522.3,242.50 H539.8 M539.8,238.50 H558.5 M558.5,238.50 H572.8 " fill="none" stroke="#18c8c8" stroke-width="1.1" />
<line x1="414.50" y1="257.40" x2="577.50" y2="257.40" stroke="#8a8a8a" stroke-width="1" />
<path d="M413.5,264.6 h6 l-3,5.6z" fill="#f414f4" stroke="none" stroke-width="1" />
<text x="422.50" y="265.60" font-size="9.5" fill="#fff" dominant-baseline="central" font-weight="bold" textLength="78.50" lengthAdjust="spacingAndGlyphs" >Expander Release</text>
<line x1="511.20" y1="260.50" x2="520.00" y2="269.50" stroke="#b0b0b0" stroke-width="1" />
<line x1="520.00" y1="260.50" x2="511.20" y2="269.50" stroke="#b0b0b0" stroke-width="1" />
<text x="521.30" y="265.70" font-size="8" fill="#d0d0d0" dominant-baseline="central" textLength="21.20" lengthAdjust="spacingAndGlyphs" >Stored</text>
<circle cx="546.1" cy="266.2" r="0.8" fill="#b0b0b0"/>
<text x="551.70" y="265.70" font-size="7.5" fill="#d8d8d8" dominant-baseline="central" textLength="13.30" lengthAdjust="spacingAndGlyphs" >19 %</text>
<circle cx="572.3" cy="266.2" r="1.3" fill="#18c8c8"/>
<text x="578.90" y="265.70" font-size="7.5" fill="#18d0d0" dominant-baseline="central" font-weight="bold" textLength="14.30" lengthAdjust="spacingAndGlyphs" >19 %</text>
<line x1="588.30" y1="210.00" x2="588.30" y2="245.00" stroke="#e8e8e8" stroke-width="1.3" />
<rect x="582.70" y="231.50" width="11.60" height="14.40" fill="#000" />
<path d="M583.5,238.7 L593.3,232.0 V245.4 Z" fill="#f414f4" stroke="none" stroke-width="1" />
<rect x="5.50" y="278.70" width="196.70" height="82.50" fill="#c2c2c2" rx="10.5" />
<rect x="7.00" y="280.20" width="193.70" height="79.50" fill="#000" rx="9" />
<text transform="translate(23.50,288.50) scale(0.86,1)" x="0" y="0" font-size="7.8" fill="#e4e4e4" dominant-baseline="central" text-anchor="end" stroke="#e4e4e4" stroke-width="0.2">100</text>
<rect x="24.30" y="288.00" width="1.50" height="1.00" fill="#707070" />
<text transform="translate(23.50,300.65) scale(0.86,1)" x="0" y="0" font-size="7.8" fill="#e4e4e4" dominant-baseline="central" text-anchor="end" stroke="#e4e4e4" stroke-width="0.2">75</text>
<rect x="24.30" y="300.15" width="1.50" height="1.00" fill="#707070" />
<text transform="translate(23.50,312.80) scale(0.86,1)" x="0" y="0" font-size="7.8" fill="#e4e4e4" dominant-baseline="central" text-anchor="end" stroke="#e4e4e4" stroke-width="0.2">50</text>
<rect x="24.30" y="312.30" width="1.50" height="1.00" fill="#707070" />
<text transform="translate(23.50,324.95) scale(0.86,1)" x="0" y="0" font-size="7.8" fill="#e4e4e4" dominant-baseline="central" text-anchor="end" stroke="#e4e4e4" stroke-width="0.2">25</text>
<rect x="24.30" y="324.45" width="1.50" height="1.00" fill="#707070" />
<text transform="translate(23.50,337.10) scale(0.86,1)" x="0" y="0" font-size="7.8" fill="#e4e4e4" dominant-baseline="central" text-anchor="end" stroke="#e4e4e4" stroke-width="0.2">0</text>
<rect x="24.30" y="336.60" width="1.50" height="1.00" fill="#707070" />
<line x1="34.97" y1="288.70" x2="34.97" y2="338.70" stroke="#9a9a9a" stroke-width="0.8" />
<line x1="40.95" y1="288.70" x2="40.95" y2="338.70" stroke="#9a9a9a" stroke-width="0.8" />
<line x1="45.42" y1="288.70" x2="45.42" y2="338.70" stroke="#9a9a9a" stroke-width="0.8" />
<line x1="49.41" y1="288.70" x2="49.41" y2="338.70" stroke="#9a9a9a" stroke-width="0.8" />
<line x1="52.91" y1="288.70" x2="52.91" y2="338.70" stroke="#9a9a9a" stroke-width="0.8" />
<line x1="55.39" y1="288.70" x2="55.39" y2="338.70" stroke="#9a9a9a" stroke-width="0.8" />
<line x1="60.89" y1="288.70" x2="60.89" y2="338.70" stroke="#9a9a9a" stroke-width="0.8" />
<line x1="74.84" y1="288.70" x2="74.84" y2="338.70" stroke="#9a9a9a" stroke-width="0.8" />
<line x1="89.80" y1="288.70" x2="89.80" y2="338.70" stroke="#9a9a9a" stroke-width="0.8" />
<line x1="94.30" y1="288.70" x2="94.30" y2="338.70" stroke="#9a9a9a" stroke-width="0.8" />
<line x1="98.28" y1="288.70" x2="98.28" y2="338.70" stroke="#9a9a9a" stroke-width="0.8" />
<line x1="101.59" y1="288.70" x2="101.59" y2="338.70" stroke="#9a9a9a" stroke-width="0.8" />
<line x1="106.83" y1="288.70" x2="106.83" y2="338.70" stroke="#9a9a9a" stroke-width="0.8" />
<line x1="109.02" y1="288.70" x2="109.02" y2="338.70" stroke="#9a9a9a" stroke-width="0.8" />
<line x1="124.17" y1="288.70" x2="124.17" y2="338.70" stroke="#9a9a9a" stroke-width="0.8" />
<line x1="132.94" y1="288.70" x2="132.94" y2="338.70" stroke="#9a9a9a" stroke-width="0.8" />
<line x1="138.92" y1="288.70" x2="138.92" y2="338.70" stroke="#9a9a9a" stroke-width="0.8" />
<line x1="144.11" y1="288.70" x2="144.11" y2="338.70" stroke="#9a9a9a" stroke-width="0.8" />
<line x1="147.90" y1="288.70" x2="147.90" y2="338.70" stroke="#9a9a9a" stroke-width="0.8" />
<line x1="150.89" y1="288.70" x2="150.89" y2="338.70" stroke="#9a9a9a" stroke-width="0.8" />
<line x1="154.08" y1="288.70" x2="154.08" y2="338.70" stroke="#9a9a9a" stroke-width="0.8" />
<line x1="156.38" y1="288.70" x2="156.38" y2="338.70" stroke="#9a9a9a" stroke-width="0.8" />
<line x1="159.12" y1="288.70" x2="159.12" y2="338.70" stroke="#9a9a9a" stroke-width="0.8" />
<line x1="26.00" y1="288.20" x2="26.00" y2="338.70" stroke="#0c8c84" stroke-width="1" stroke-dasharray="1.6 1.4"/>
<line x1="58.30" y1="288.20" x2="58.30" y2="338.70" stroke="#0c8c84" stroke-width="1" stroke-dasharray="1.6 1.4"/>
<line x1="84.00" y1="288.20" x2="84.00" y2="338.70" stroke="#0c8c84" stroke-width="1" stroke-dasharray="1.6 1.4"/>
<line x1="102.80" y1="288.20" x2="102.80" y2="338.70" stroke="#0c8c84" stroke-width="1" stroke-dasharray="1.6 1.4"/>
<line x1="122.80" y1="288.20" x2="122.80" y2="338.70" stroke="#0c8c84" stroke-width="1" stroke-dasharray="1.6 1.4"/>
<line x1="140.30" y1="288.20" x2="140.30" y2="338.70" stroke="#0c8c84" stroke-width="1" stroke-dasharray="1.6 1.4"/>
<line x1="159.00" y1="288.20" x2="159.00" y2="338.70" stroke="#0c8c84" stroke-width="1" stroke-dasharray="1.6 1.4"/>
<line x1="173.30" y1="288.20" x2="173.30" y2="338.70" stroke="#0c8c84" stroke-width="1" stroke-dasharray="1.6 1.4"/>
<path d="M26.0,302.50 H58.3 M58.3,299.50 H84.0 M84.0,299.50 H102.8 M102.8,300.50 H122.8 M122.8,304.50 H140.3 M140.3,303.50 H159.0 M159.0,305.50 H173.3 " fill="none" stroke="#18c8c8" stroke-width="1.1" />
<line x1="15.00" y1="343.60" x2="178.00" y2="343.60" stroke="#8a8a8a" stroke-width="1" />
<path d="M14.0,350.8 h6 l-3,5.6z" fill="#f414f4" stroke="none" stroke-width="1" />
<text x="23.00" y="351.80" font-size="9.5" fill="#fff" dominant-baseline="central" font-weight="bold" textLength="59.00" lengthAdjust="spacingAndGlyphs" >Process Drive</text>
<line x1="111.70" y1="346.70" x2="120.50" y2="355.70" stroke="#b0b0b0" stroke-width="1" />
<line x1="120.50" y1="346.70" x2="111.70" y2="355.70" stroke="#b0b0b0" stroke-width="1" />
<text x="121.80" y="351.90" font-size="8" fill="#d0d0d0" dominant-baseline="central" textLength="21.20" lengthAdjust="spacingAndGlyphs" >Stored</text>
<circle cx="146.6" cy="352.4" r="0.8" fill="#b0b0b0"/>
<text x="152.20" y="351.90" font-size="7.5" fill="#d8d8d8" dominant-baseline="central" textLength="13.30" lengthAdjust="spacingAndGlyphs" >72 %</text>
<circle cx="172.8" cy="352.4" r="1.3" fill="#18c8c8"/>
<text x="179.40" y="351.90" font-size="7.5" fill="#18d0d0" dominant-baseline="central" font-weight="bold" textLength="14.30" lengthAdjust="spacingAndGlyphs" >72 %</text>
<line x1="188.80" y1="296.20" x2="188.80" y2="331.20" stroke="#e8e8e8" stroke-width="1.3" />
<rect x="183.20" y="298.50" width="11.60" height="14.40" fill="#000" />
<path d="M184.0,305.7 L193.8,299.0 V312.4 Z" fill="#f414f4" stroke="none" stroke-width="1" />
<rect x="205.30" y="278.70" width="196.70" height="82.50" fill="#c2c2c2" rx="10.5" />
<rect x="206.80" y="280.20" width="193.70" height="79.50" fill="#000" rx="9" />
<text transform="translate(223.30,288.50) scale(0.86,1)" x="0" y="0" font-size="7.8" fill="#e4e4e4" dominant-baseline="central" text-anchor="end" stroke="#e4e4e4" stroke-width="0.2">11</text>
<rect x="224.10" y="288.00" width="1.50" height="1.00" fill="#707070" />
<text transform="translate(223.30,300.65) scale(0.86,1)" x="0" y="0" font-size="7.8" fill="#e4e4e4" dominant-baseline="central" text-anchor="end" stroke="#e4e4e4" stroke-width="0.2">0,8</text>
<rect x="224.10" y="300.15" width="1.50" height="1.00" fill="#707070" />
<text transform="translate(223.30,312.80) scale(0.86,1)" x="0" y="0" font-size="7.8" fill="#e4e4e4" dominant-baseline="central" text-anchor="end" stroke="#e4e4e4" stroke-width="0.2">0,3</text>
<rect x="224.10" y="312.30" width="1.50" height="1.00" fill="#707070" />
<text transform="translate(223.30,324.95) scale(0.86,1)" x="0" y="0" font-size="7.8" fill="#e4e4e4" dominant-baseline="central" text-anchor="end" stroke="#e4e4e4" stroke-width="0.2">0,05</text>
<rect x="224.10" y="324.45" width="1.50" height="1.00" fill="#707070" />
<text transform="translate(223.30,337.10) scale(0.86,1)" x="0" y="0" font-size="7.8" fill="#e4e4e4" dominant-baseline="central" text-anchor="end" stroke="#e4e4e4" stroke-width="0.2">0</text>
<rect x="224.10" y="336.60" width="1.50" height="1.00" fill="#707070" />
<line x1="234.77" y1="288.70" x2="234.77" y2="338.70" stroke="#9a9a9a" stroke-width="0.8" />
<line x1="240.75" y1="288.70" x2="240.75" y2="338.70" stroke="#9a9a9a" stroke-width="0.8" />
<line x1="245.22" y1="288.70" x2="245.22" y2="338.70" stroke="#9a9a9a" stroke-width="0.8" />
<line x1="249.21" y1="288.70" x2="249.21" y2="338.70" stroke="#9a9a9a" stroke-width="0.8" />
<line x1="252.71" y1="288.70" x2="252.71" y2="338.70" stroke="#9a9a9a" stroke-width="0.8" />
<line x1="255.19" y1="288.70" x2="255.19" y2="338.70" stroke="#9a9a9a" stroke-width="0.8" />
<line x1="260.69" y1="288.70" x2="260.69" y2="338.70" stroke="#9a9a9a" stroke-width="0.8" />
<line x1="274.64" y1="288.70" x2="274.64" y2="338.70" stroke="#9a9a9a" stroke-width="0.8" />
<line x1="289.60" y1="288.70" x2="289.60" y2="338.70" stroke="#9a9a9a" stroke-width="0.8" />
<line x1="294.10" y1="288.70" x2="294.10" y2="338.70" stroke="#9a9a9a" stroke-width="0.8" />
<line x1="298.08" y1="288.70" x2="298.08" y2="338.70" stroke="#9a9a9a" stroke-width="0.8" />
<line x1="301.39" y1="288.70" x2="301.39" y2="338.70" stroke="#9a9a9a" stroke-width="0.8" />
<line x1="306.63" y1="288.70" x2="306.63" y2="338.70" stroke="#9a9a9a" stroke-width="0.8" />
<line x1="308.82" y1="288.70" x2="308.82" y2="338.70" stroke="#9a9a9a" stroke-width="0.8" />
<line x1="323.97" y1="288.70" x2="323.97" y2="338.70" stroke="#9a9a9a" stroke-width="0.8" />
<line x1="332.74" y1="288.70" x2="332.74" y2="338.70" stroke="#9a9a9a" stroke-width="0.8" />
<line x1="338.72" y1="288.70" x2="338.72" y2="338.70" stroke="#9a9a9a" stroke-width="0.8" />
<line x1="343.91" y1="288.70" x2="343.91" y2="338.70" stroke="#9a9a9a" stroke-width="0.8" />
<line x1="347.70" y1="288.70" x2="347.70" y2="338.70" stroke="#9a9a9a" stroke-width="0.8" />
<line x1="350.69" y1="288.70" x2="350.69" y2="338.70" stroke="#9a9a9a" stroke-width="0.8" />
<line x1="353.88" y1="288.70" x2="353.88" y2="338.70" stroke="#9a9a9a" stroke-width="0.8" />
<line x1="356.18" y1="288.70" x2="356.18" y2="338.70" stroke="#9a9a9a" stroke-width="0.8" />
<line x1="358.92" y1="288.70" x2="358.92" y2="338.70" stroke="#9a9a9a" stroke-width="0.8" />
<line x1="225.80" y1="288.20" x2="225.80" y2="338.70" stroke="#0c8c84" stroke-width="1" stroke-dasharray="1.6 1.4"/>
<line x1="258.10" y1="288.20" x2="258.10" y2="338.70" stroke="#0c8c84" stroke-width="1" stroke-dasharray="1.6 1.4"/>
<line x1="283.80" y1="288.20" x2="283.80" y2="338.70" stroke="#0c8c84" stroke-width="1" stroke-dasharray="1.6 1.4"/>
<line x1="302.60" y1="288.20" x2="302.60" y2="338.70" stroke="#0c8c84" stroke-width="1" stroke-dasharray="1.6 1.4"/>
<line x1="322.60" y1="288.20" x2="322.60" y2="338.70" stroke="#0c8c84" stroke-width="1" stroke-dasharray="1.6 1.4"/>
<line x1="340.10" y1="288.20" x2="340.10" y2="338.70" stroke="#0c8c84" stroke-width="1" stroke-dasharray="1.6 1.4"/>
<line x1="358.80" y1="288.20" x2="358.80" y2="338.70" stroke="#0c8c84" stroke-width="1" stroke-dasharray="1.6 1.4"/>
<line x1="373.10" y1="288.20" x2="373.10" y2="338.70" stroke="#0c8c84" stroke-width="1" stroke-dasharray="1.6 1.4"/>
<path d="M225.8,307.50 H258.1 M258.1,307.50 H283.8 M283.8,307.50 H302.6 M302.6,307.50 H322.6 M322.6,308.50 H340.1 M340.1,306.50 H358.8 M358.8,304.50 H373.1 " fill="none" stroke="#18c8c8" stroke-width="1.1" />
<line x1="214.80" y1="343.60" x2="377.80" y2="343.60" stroke="#8a8a8a" stroke-width="1" />
<path d="M213.8,350.8 h6 l-3,5.6z" fill="#f414f4" stroke="none" stroke-width="1" />
<text x="222.80" y="351.80" font-size="9.5" fill="#fff" dominant-baseline="central" font-weight="bold" textLength="65.00" lengthAdjust="spacingAndGlyphs" >Process Attack</text>
<line x1="311.50" y1="346.70" x2="320.30" y2="355.70" stroke="#b0b0b0" stroke-width="1" />
<line x1="320.30" y1="346.70" x2="311.50" y2="355.70" stroke="#b0b0b0" stroke-width="1" />
<text x="321.60" y="351.90" font-size="8" fill="#d0d0d0" dominant-baseline="central" textLength="21.20" lengthAdjust="spacingAndGlyphs" >Stored</text>
<circle cx="346.4" cy="352.4" r="0.8" fill="#b0b0b0"/>
<text x="352.00" y="351.90" font-size="7.5" fill="#d8d8d8" dominant-baseline="central" textLength="13.30" lengthAdjust="spacingAndGlyphs" >62 %</text>
<circle cx="372.6" cy="352.4" r="1.3" fill="#18c8c8"/>
<text x="379.20" y="351.90" font-size="7.5" fill="#18d0d0" dominant-baseline="central" font-weight="bold" textLength="14.30" lengthAdjust="spacingAndGlyphs" >62 %</text>
<line x1="388.60" y1="296.20" x2="388.60" y2="331.20" stroke="#e8e8e8" stroke-width="1.3" />
<rect x="383.00" y="302.80" width="11.60" height="14.40" fill="#000" />
<path d="M383.8,310.0 L393.6,303.3 V316.7 Z" fill="#f414f4" stroke="none" stroke-width="1" />
<rect x="405.00" y="278.70" width="196.70" height="82.50" fill="#c2c2c2" rx="10.5" />
<rect x="406.50" y="280.20" width="193.70" height="79.50" fill="#000" rx="9" />
<text transform="translate(423.00,288.50) scale(0.86,1)" x="0" y="0" font-size="7.8" fill="#e4e4e4" dominant-baseline="central" text-anchor="end" stroke="#e4e4e4" stroke-width="0.2">11</text>
<rect x="423.80" y="288.00" width="1.50" height="1.00" fill="#707070" />
<text transform="translate(423.00,300.65) scale(0.86,1)" x="0" y="0" font-size="7.8" fill="#e4e4e4" dominant-baseline="central" text-anchor="end" stroke="#e4e4e4" stroke-width="0.2">0,8</text>
<rect x="423.80" y="300.15" width="1.50" height="1.00" fill="#707070" />
<text transform="translate(423.00,312.80) scale(0.86,1)" x="0" y="0" font-size="7.8" fill="#e4e4e4" dominant-baseline="central" text-anchor="end" stroke="#e4e4e4" stroke-width="0.2">0,3</text>
<rect x="423.80" y="312.30" width="1.50" height="1.00" fill="#707070" />
<text transform="translate(423.00,324.95) scale(0.86,1)" x="0" y="0" font-size="7.8" fill="#e4e4e4" dominant-baseline="central" text-anchor="end" stroke="#e4e4e4" stroke-width="0.2">0,05</text>
<rect x="423.80" y="324.45" width="1.50" height="1.00" fill="#707070" />
<text transform="translate(423.00,337.10) scale(0.86,1)" x="0" y="0" font-size="7.8" fill="#e4e4e4" dominant-baseline="central" text-anchor="end" stroke="#e4e4e4" stroke-width="0.2">0</text>
<rect x="423.80" y="336.60" width="1.50" height="1.00" fill="#707070" />
<line x1="434.47" y1="288.70" x2="434.47" y2="338.70" stroke="#9a9a9a" stroke-width="0.8" />
<line x1="440.45" y1="288.70" x2="440.45" y2="338.70" stroke="#9a9a9a" stroke-width="0.8" />
<line x1="444.92" y1="288.70" x2="444.92" y2="338.70" stroke="#9a9a9a" stroke-width="0.8" />
<line x1="448.91" y1="288.70" x2="448.91" y2="338.70" stroke="#9a9a9a" stroke-width="0.8" />
<line x1="452.41" y1="288.70" x2="452.41" y2="338.70" stroke="#9a9a9a" stroke-width="0.8" />
<line x1="454.89" y1="288.70" x2="454.89" y2="338.70" stroke="#9a9a9a" stroke-width="0.8" />
<line x1="460.39" y1="288.70" x2="460.39" y2="338.70" stroke="#9a9a9a" stroke-width="0.8" />
<line x1="474.34" y1="288.70" x2="474.34" y2="338.70" stroke="#9a9a9a" stroke-width="0.8" />
<line x1="489.30" y1="288.70" x2="489.30" y2="338.70" stroke="#9a9a9a" stroke-width="0.8" />
<line x1="493.80" y1="288.70" x2="493.80" y2="338.70" stroke="#9a9a9a" stroke-width="0.8" />
<line x1="497.78" y1="288.70" x2="497.78" y2="338.70" stroke="#9a9a9a" stroke-width="0.8" />
<line x1="501.09" y1="288.70" x2="501.09" y2="338.70" stroke="#9a9a9a" stroke-width="0.8" />
<line x1="506.33" y1="288.70" x2="506.33" y2="338.70" stroke="#9a9a9a" stroke-width="0.8" />
<line x1="508.52" y1="288.70" x2="508.52" y2="338.70" stroke="#9a9a9a" stroke-width="0.8" />
<line x1="523.67" y1="288.70" x2="523.67" y2="338.70" stroke="#9a9a9a" stroke-width="0.8" />
<line x1="532.44" y1="288.70" x2="532.44" y2="338.70" stroke="#9a9a9a" stroke-width="0.8" />
<line x1="538.42" y1="288.70" x2="538.42" y2="338.70" stroke="#9a9a9a" stroke-width="0.8" />
<line x1="543.61" y1="288.70" x2="543.61" y2="338.70" stroke="#9a9a9a" stroke-width="0.8" />
<line x1="547.40" y1="288.70" x2="547.40" y2="338.70" stroke="#9a9a9a" stroke-width="0.8" />
<line x1="550.39" y1="288.70" x2="550.39" y2="338.70" stroke="#9a9a9a" stroke-width="0.8" />
<line x1="553.58" y1="288.70" x2="553.58" y2="338.70" stroke="#9a9a9a" stroke-width="0.8" />
<line x1="555.88" y1="288.70" x2="555.88" y2="338.70" stroke="#9a9a9a" stroke-width="0.8" />
<line x1="558.62" y1="288.70" x2="558.62" y2="338.70" stroke="#9a9a9a" stroke-width="0.8" />
<line x1="425.50" y1="288.20" x2="425.50" y2="338.70" stroke="#0c8c84" stroke-width="1" stroke-dasharray="1.6 1.4"/>
<line x1="457.80" y1="288.20" x2="457.80" y2="338.70" stroke="#0c8c84" stroke-width="1" stroke-dasharray="1.6 1.4"/>
<line x1="483.50" y1="288.20" x2="483.50" y2="338.70" stroke="#0c8c84" stroke-width="1" stroke-dasharray="1.6 1.4"/>
<line x1="502.30" y1="288.20" x2="502.30" y2="338.70" stroke="#0c8c84" stroke-width="1" stroke-dasharray="1.6 1.4"/>
<line x1="522.30" y1="288.20" x2="522.30" y2="338.70" stroke="#0c8c84" stroke-width="1" stroke-dasharray="1.6 1.4"/>
<line x1="539.80" y1="288.20" x2="539.80" y2="338.70" stroke="#0c8c84" stroke-width="1" stroke-dasharray="1.6 1.4"/>
<line x1="558.50" y1="288.20" x2="558.50" y2="338.70" stroke="#0c8c84" stroke-width="1" stroke-dasharray="1.6 1.4"/>
<line x1="572.80" y1="288.20" x2="572.80" y2="338.70" stroke="#0c8c84" stroke-width="1" stroke-dasharray="1.6 1.4"/>
<path d="M425.5,313.50 H457.8 M457.8,293.50 H483.5 M483.5,297.50 H502.3 M502.3,299.50 H522.3 M522.3,295.50 H539.8 M539.8,295.50 H558.5 M558.5,294.50 H572.8 " fill="none" stroke="#18c8c8" stroke-width="1.1" />
<line x1="414.50" y1="343.60" x2="577.50" y2="343.60" stroke="#8a8a8a" stroke-width="1" />
<path d="M413.5,350.8 h6 l-3,5.6z" fill="#f414f4" stroke="none" stroke-width="1" />
<text x="422.50" y="351.80" font-size="9.5" fill="#fff" dominant-baseline="central" font-weight="bold" textLength="71.50" lengthAdjust="spacingAndGlyphs" >Process Release</text>
<line x1="511.20" y1="346.70" x2="520.00" y2="355.70" stroke="#b0b0b0" stroke-width="1" />
<line x1="520.00" y1="346.70" x2="511.20" y2="355.70" stroke="#b0b0b0" stroke-width="1" />
<text x="521.30" y="351.90" font-size="8" fill="#d0d0d0" dominant-baseline="central" textLength="21.20" lengthAdjust="spacingAndGlyphs" >Stored</text>
<circle cx="546.1" cy="352.4" r="0.8" fill="#b0b0b0"/>
<text x="551.70" y="351.90" font-size="7.5" fill="#d8d8d8" dominant-baseline="central" textLength="13.30" lengthAdjust="spacingAndGlyphs" >79 %</text>
<circle cx="572.3" cy="352.4" r="1.3" fill="#18c8c8"/>
<text x="578.90" y="351.90" font-size="7.5" fill="#18d0d0" dominant-baseline="central" font-weight="bold" textLength="14.30" lengthAdjust="spacingAndGlyphs" >79 %</text>
<line x1="588.30" y1="296.20" x2="588.30" y2="331.20" stroke="#e8e8e8" stroke-width="1.3" />
<rect x="582.70" y="296.00" width="11.60" height="14.40" fill="#000" />
<path d="M583.5,303.2 L593.3,296.5 V309.9 Z" fill="#f414f4" stroke="none" stroke-width="1" />
<rect x="5.50" y="364.90" width="196.70" height="82.50" fill="#c2c2c2" rx="10.5" />
<rect x="7.00" y="366.40" width="193.70" height="79.50" fill="#000" rx="9" />
<text transform="translate(23.50,374.70) scale(0.86,1)" x="0" y="0" font-size="7.8" fill="#e4e4e4" dominant-baseline="central" text-anchor="end" stroke="#e4e4e4" stroke-width="0.2">100</text>
<rect x="24.30" y="374.20" width="1.50" height="1.00" fill="#707070" />
<text transform="translate(23.50,386.85) scale(0.86,1)" x="0" y="0" font-size="7.8" fill="#e4e4e4" dominant-baseline="central" text-anchor="end" stroke="#e4e4e4" stroke-width="0.2">75</text>
<rect x="24.30" y="386.35" width="1.50" height="1.00" fill="#707070" />
<text transform="translate(23.50,399.00) scale(0.86,1)" x="0" y="0" font-size="7.8" fill="#e4e4e4" dominant-baseline="central" text-anchor="end" stroke="#e4e4e4" stroke-width="0.2">50</text>
<rect x="24.30" y="398.50" width="1.50" height="1.00" fill="#707070" />
<text transform="translate(23.50,411.15) scale(0.86,1)" x="0" y="0" font-size="7.8" fill="#e4e4e4" dominant-baseline="central" text-anchor="end" stroke="#e4e4e4" stroke-width="0.2">25</text>
<rect x="24.30" y="410.65" width="1.50" height="1.00" fill="#707070" />
<text transform="translate(23.50,423.30) scale(0.86,1)" x="0" y="0" font-size="7.8" fill="#e4e4e4" dominant-baseline="central" text-anchor="end" stroke="#e4e4e4" stroke-width="0.2">0</text>
<rect x="24.30" y="422.80" width="1.50" height="1.00" fill="#707070" />
<line x1="34.97" y1="374.90" x2="34.97" y2="424.90" stroke="#9a9a9a" stroke-width="0.8" />
<line x1="40.95" y1="374.90" x2="40.95" y2="424.90" stroke="#9a9a9a" stroke-width="0.8" />
<line x1="45.42" y1="374.90" x2="45.42" y2="424.90" stroke="#9a9a9a" stroke-width="0.8" />
<line x1="49.41" y1="374.90" x2="49.41" y2="424.90" stroke="#9a9a9a" stroke-width="0.8" />
<line x1="52.91" y1="374.90" x2="52.91" y2="424.90" stroke="#9a9a9a" stroke-width="0.8" />
<line x1="55.39" y1="374.90" x2="55.39" y2="424.90" stroke="#9a9a9a" stroke-width="0.8" />
<line x1="60.89" y1="374.90" x2="60.89" y2="424.90" stroke="#9a9a9a" stroke-width="0.8" />
<line x1="74.84" y1="374.90" x2="74.84" y2="424.90" stroke="#9a9a9a" stroke-width="0.8" />
<line x1="89.80" y1="374.90" x2="89.80" y2="424.90" stroke="#9a9a9a" stroke-width="0.8" />
<line x1="94.30" y1="374.90" x2="94.30" y2="424.90" stroke="#9a9a9a" stroke-width="0.8" />
<line x1="98.28" y1="374.90" x2="98.28" y2="424.90" stroke="#9a9a9a" stroke-width="0.8" />
<line x1="101.59" y1="374.90" x2="101.59" y2="424.90" stroke="#9a9a9a" stroke-width="0.8" />
<line x1="106.83" y1="374.90" x2="106.83" y2="424.90" stroke="#9a9a9a" stroke-width="0.8" />
<line x1="109.02" y1="374.90" x2="109.02" y2="424.90" stroke="#9a9a9a" stroke-width="0.8" />
<line x1="124.17" y1="374.90" x2="124.17" y2="424.90" stroke="#9a9a9a" stroke-width="0.8" />
<line x1="132.94" y1="374.90" x2="132.94" y2="424.90" stroke="#9a9a9a" stroke-width="0.8" />
<line x1="138.92" y1="374.90" x2="138.92" y2="424.90" stroke="#9a9a9a" stroke-width="0.8" />
<line x1="144.11" y1="374.90" x2="144.11" y2="424.90" stroke="#9a9a9a" stroke-width="0.8" />
<line x1="147.90" y1="374.90" x2="147.90" y2="424.90" stroke="#9a9a9a" stroke-width="0.8" />
<line x1="150.89" y1="374.90" x2="150.89" y2="424.90" stroke="#9a9a9a" stroke-width="0.8" />
<line x1="154.08" y1="374.90" x2="154.08" y2="424.90" stroke="#9a9a9a" stroke-width="0.8" />
<line x1="156.38" y1="374.90" x2="156.38" y2="424.90" stroke="#9a9a9a" stroke-width="0.8" />
<line x1="159.12" y1="374.90" x2="159.12" y2="424.90" stroke="#9a9a9a" stroke-width="0.8" />
<line x1="26.00" y1="374.40" x2="26.00" y2="424.90" stroke="#0c8c84" stroke-width="1" stroke-dasharray="1.6 1.4"/>
<line x1="58.30" y1="374.40" x2="58.30" y2="424.90" stroke="#0c8c84" stroke-width="1" stroke-dasharray="1.6 1.4"/>
<line x1="84.00" y1="374.40" x2="84.00" y2="424.90" stroke="#0c8c84" stroke-width="1" stroke-dasharray="1.6 1.4"/>
<line x1="102.80" y1="374.40" x2="102.80" y2="424.90" stroke="#0c8c84" stroke-width="1" stroke-dasharray="1.6 1.4"/>
<line x1="122.80" y1="374.40" x2="122.80" y2="424.90" stroke="#0c8c84" stroke-width="1" stroke-dasharray="1.6 1.4"/>
<line x1="140.30" y1="374.40" x2="140.30" y2="424.90" stroke="#0c8c84" stroke-width="1" stroke-dasharray="1.6 1.4"/>
<line x1="159.00" y1="374.40" x2="159.00" y2="424.90" stroke="#0c8c84" stroke-width="1" stroke-dasharray="1.6 1.4"/>
<line x1="173.30" y1="374.40" x2="173.30" y2="424.90" stroke="#0c8c84" stroke-width="1" stroke-dasharray="1.6 1.4"/>
<path d="M26.0,391.50 H58.3 M58.3,391.50 H84.0 M84.0,391.50 H102.8 M102.8,391.50 H122.8 M122.8,391.50 H140.3 M140.3,391.50 H159.0 M159.0,391.50 H173.3 " fill="none" stroke="#18c8c8" stroke-width="1.7" />
<line x1="15.00" y1="429.80" x2="178.00" y2="429.80" stroke="#8a8a8a" stroke-width="1" />
<text x="23.00" y="438.00" font-size="9.5" fill="#fff" dominant-baseline="central" font-weight="bold" textLength="69.70" lengthAdjust="spacingAndGlyphs" >Optimizer Drive</text>
<line x1="111.70" y1="432.90" x2="120.50" y2="441.90" stroke="#b0b0b0" stroke-width="1" />
<line x1="120.50" y1="432.90" x2="111.70" y2="441.90" stroke="#b0b0b0" stroke-width="1" />
<text x="121.80" y="438.10" font-size="8" fill="#d0d0d0" dominant-baseline="central" textLength="21.20" lengthAdjust="spacingAndGlyphs" >Stored</text>
<circle cx="146.6" cy="438.6" r="0.8" fill="#b0b0b0"/>
<text x="152.20" y="438.10" font-size="7.5" fill="#d8d8d8" dominant-baseline="central" textLength="13.30" lengthAdjust="spacingAndGlyphs" >67 %</text>
<circle cx="172.8" cy="438.6" r="1.3" fill="#18c8c8"/>
<text x="179.40" y="438.10" font-size="7.5" fill="#18d0d0" dominant-baseline="central" font-weight="bold" textLength="14.30" lengthAdjust="spacingAndGlyphs" >67 %</text>
<line x1="188.80" y1="382.40" x2="188.80" y2="417.40" stroke="#e8e8e8" stroke-width="1.3" />
<rect x="183.20" y="386.50" width="11.60" height="14.40" fill="#000" />
<path d="M184.0,393.7 L193.8,387.0 V400.4 Z" fill="#f414f4" stroke="none" stroke-width="1" />
<rect x="205.30" y="364.90" width="196.70" height="82.50" fill="#c2c2c2" rx="10.5" />
<rect x="206.80" y="366.40" width="193.70" height="79.50" fill="#000" rx="9" />
<text transform="translate(223.30,374.70) scale(0.86,1)" x="0" y="0" font-size="7.8" fill="#e4e4e4" dominant-baseline="central" text-anchor="end" stroke="#e4e4e4" stroke-width="0.2">11</text>
<rect x="224.10" y="374.20" width="1.50" height="1.00" fill="#707070" />
<text transform="translate(223.30,386.85) scale(0.86,1)" x="0" y="0" font-size="7.8" fill="#e4e4e4" dominant-baseline="central" text-anchor="end" stroke="#e4e4e4" stroke-width="0.2">2,9</text>
<rect x="224.10" y="386.35" width="1.50" height="1.00" fill="#707070" />
<text transform="translate(223.30,399.00) scale(0.86,1)" x="0" y="0" font-size="7.8" fill="#e4e4e4" dominant-baseline="central" text-anchor="end" stroke="#e4e4e4" stroke-width="0.2">0,8</text>
<rect x="224.10" y="398.50" width="1.50" height="1.00" fill="#707070" />
<text transform="translate(223.30,411.15) scale(0.86,1)" x="0" y="0" font-size="7.8" fill="#e4e4e4" dominant-baseline="central" text-anchor="end" stroke="#e4e4e4" stroke-width="0.2">0,5</text>
<rect x="224.10" y="410.65" width="1.50" height="1.00" fill="#707070" />
<text transform="translate(223.30,423.30) scale(0.86,1)" x="0" y="0" font-size="7.8" fill="#e4e4e4" dominant-baseline="central" text-anchor="end" stroke="#e4e4e4" stroke-width="0.2">0,3</text>
<rect x="224.10" y="422.80" width="1.50" height="1.00" fill="#707070" />
<line x1="234.00" y1="374.90" x2="234.00" y2="424.90" stroke="#9a9a9a" stroke-width="0.8" />
<line x1="239.80" y1="374.90" x2="239.80" y2="424.90" stroke="#9a9a9a" stroke-width="0.8" />
<line x1="244.80" y1="374.90" x2="244.80" y2="424.90" stroke="#9a9a9a" stroke-width="0.8" />
<line x1="249.00" y1="374.90" x2="249.00" y2="424.90" stroke="#9a9a9a" stroke-width="0.8" />
<line x1="252.30" y1="374.90" x2="252.30" y2="424.90" stroke="#9a9a9a" stroke-width="0.8" />
<line x1="255.50" y1="374.90" x2="255.50" y2="424.90" stroke="#9a9a9a" stroke-width="0.8" />
<line x1="258.00" y1="374.90" x2="258.00" y2="424.90" stroke="#9a9a9a" stroke-width="0.8" />
<line x1="260.50" y1="374.90" x2="260.50" y2="424.90" stroke="#9a9a9a" stroke-width="0.8" />
<line x1="282.30" y1="374.90" x2="282.30" y2="424.90" stroke="#9a9a9a" stroke-width="0.8" />
<line x1="289.30" y1="374.90" x2="289.30" y2="424.90" stroke="#9a9a9a" stroke-width="0.8" />
<line x1="294.00" y1="374.90" x2="294.00" y2="424.90" stroke="#9a9a9a" stroke-width="0.8" />
<line x1="299.00" y1="374.90" x2="299.00" y2="424.90" stroke="#9a9a9a" stroke-width="0.8" />
<line x1="302.30" y1="374.90" x2="302.30" y2="424.90" stroke="#9a9a9a" stroke-width="0.8" />
<line x1="304.80" y1="374.90" x2="304.80" y2="424.90" stroke="#9a9a9a" stroke-width="0.8" />
<line x1="307.30" y1="374.90" x2="307.30" y2="424.90" stroke="#9a9a9a" stroke-width="0.8" />
<line x1="309.00" y1="374.90" x2="309.00" y2="424.90" stroke="#9a9a9a" stroke-width="0.8" />
<line x1="323.00" y1="374.90" x2="323.00" y2="424.90" stroke="#9a9a9a" stroke-width="0.8" />
<line x1="333.50" y1="374.90" x2="333.50" y2="424.90" stroke="#9a9a9a" stroke-width="0.8" />
<line x1="338.50" y1="374.90" x2="338.50" y2="424.90" stroke="#9a9a9a" stroke-width="0.8" />
<line x1="343.50" y1="374.90" x2="343.50" y2="424.90" stroke="#9a9a9a" stroke-width="0.8" />
<line x1="346.80" y1="374.90" x2="346.80" y2="424.90" stroke="#9a9a9a" stroke-width="0.8" />
<line x1="349.80" y1="374.90" x2="349.80" y2="424.90" stroke="#9a9a9a" stroke-width="0.8" />
<line x1="352.30" y1="374.90" x2="352.30" y2="424.90" stroke="#9a9a9a" stroke-width="0.8" />
<line x1="355.50" y1="374.90" x2="355.50" y2="424.90" stroke="#9a9a9a" stroke-width="0.8" />
<line x1="358.50" y1="374.90" x2="358.50" y2="424.90" stroke="#9a9a9a" stroke-width="0.8" />
<line x1="225.80" y1="374.40" x2="225.80" y2="424.90" stroke="#0c8c84" stroke-width="1" stroke-dasharray="1.6 1.4"/>
<line x1="270.50" y1="374.40" x2="270.50" y2="424.90" stroke="#0c8c84" stroke-width="1" stroke-dasharray="1.6 1.4"/>
<line x1="309.80" y1="374.40" x2="309.80" y2="424.90" stroke="#0c8c84" stroke-width="1" stroke-dasharray="1.6 1.4"/>
<line x1="347.30" y1="374.40" x2="347.30" y2="424.90" stroke="#0c8c84" stroke-width="1" stroke-dasharray="1.6 1.4"/>
<line x1="373.10" y1="374.40" x2="373.10" y2="424.90" stroke="#0c8c84" stroke-width="1" stroke-dasharray="1.6 1.4"/>
<path d="M225.8,391.50 H270.5 M270.5,390.50 H309.8 M309.8,391.50 H347.3 M347.3,390.50 H373.1 " fill="none" stroke="#18c8c8" stroke-width="1.4" />
<line x1="214.80" y1="429.80" x2="377.80" y2="429.80" stroke="#8a8a8a" stroke-width="1" />
<text x="222.80" y="438.00" font-size="9.5" fill="#fff" dominant-baseline="central" font-weight="bold" textLength="75.00" lengthAdjust="spacingAndGlyphs" >Optimizer Attack</text>
<line x1="311.50" y1="432.90" x2="320.30" y2="441.90" stroke="#b0b0b0" stroke-width="1" />
<line x1="320.30" y1="432.90" x2="311.50" y2="441.90" stroke="#b0b0b0" stroke-width="1" />
<text x="321.60" y="438.10" font-size="8" fill="#d0d0d0" dominant-baseline="central" textLength="21.20" lengthAdjust="spacingAndGlyphs" >Stored</text>
<circle cx="346.4" cy="438.6" r="0.8" fill="#b0b0b0"/>
<text x="352.00" y="438.10" font-size="7.5" fill="#d8d8d8" dominant-baseline="central" textLength="13.30" lengthAdjust="spacingAndGlyphs" >67 %</text>
<circle cx="372.6" cy="438.6" r="1.3" fill="#18c8c8"/>
<text x="379.20" y="438.10" font-size="7.5" fill="#18d0d0" dominant-baseline="central" font-weight="bold" textLength="14.30" lengthAdjust="spacingAndGlyphs" >67 %</text>
<line x1="388.60" y1="382.40" x2="388.60" y2="417.40" stroke="#e8e8e8" stroke-width="1.3" />
<rect x="383.00" y="386.20" width="11.60" height="14.40" fill="#000" />
<path d="M383.8,393.4 L393.6,386.7 V400.1 Z" fill="#f414f4" stroke="none" stroke-width="1" />
<rect x="405.00" y="364.90" width="196.70" height="82.50" fill="#c2c2c2" rx="10.5" />
<rect x="406.50" y="366.40" width="193.70" height="79.50" fill="#000" rx="9" />
<text transform="translate(423.00,374.70) scale(0.86,1)" x="0" y="0" font-size="7.8" fill="#e4e4e4" dominant-baseline="central" text-anchor="end" stroke="#e4e4e4" stroke-width="0.2">11</text>
<rect x="423.80" y="374.20" width="1.50" height="1.00" fill="#707070" />
<text transform="translate(423.00,386.85) scale(0.86,1)" x="0" y="0" font-size="7.8" fill="#e4e4e4" dominant-baseline="central" text-anchor="end" stroke="#e4e4e4" stroke-width="0.2">0,8</text>
<rect x="423.80" y="386.35" width="1.50" height="1.00" fill="#707070" />
<text transform="translate(423.00,399.00) scale(0.86,1)" x="0" y="0" font-size="7.8" fill="#e4e4e4" dominant-baseline="central" text-anchor="end" stroke="#e4e4e4" stroke-width="0.2">0,3</text>
<rect x="423.80" y="398.50" width="1.50" height="1.00" fill="#707070" />
<text transform="translate(423.00,411.15) scale(0.86,1)" x="0" y="0" font-size="7.8" fill="#e4e4e4" dominant-baseline="central" text-anchor="end" stroke="#e4e4e4" stroke-width="0.2">0,05</text>
<rect x="423.80" y="410.65" width="1.50" height="1.00" fill="#707070" />
<text transform="translate(423.00,423.30) scale(0.86,1)" x="0" y="0" font-size="7.8" fill="#e4e4e4" dominant-baseline="central" text-anchor="end" stroke="#e4e4e4" stroke-width="0.2">0</text>
<rect x="423.80" y="422.80" width="1.50" height="1.00" fill="#707070" />
<line x1="433.70" y1="374.90" x2="433.70" y2="424.90" stroke="#9a9a9a" stroke-width="0.8" />
<line x1="439.50" y1="374.90" x2="439.50" y2="424.90" stroke="#9a9a9a" stroke-width="0.8" />
<line x1="444.50" y1="374.90" x2="444.50" y2="424.90" stroke="#9a9a9a" stroke-width="0.8" />
<line x1="448.70" y1="374.90" x2="448.70" y2="424.90" stroke="#9a9a9a" stroke-width="0.8" />
<line x1="452.00" y1="374.90" x2="452.00" y2="424.90" stroke="#9a9a9a" stroke-width="0.8" />
<line x1="455.20" y1="374.90" x2="455.20" y2="424.90" stroke="#9a9a9a" stroke-width="0.8" />
<line x1="457.70" y1="374.90" x2="457.70" y2="424.90" stroke="#9a9a9a" stroke-width="0.8" />
<line x1="460.20" y1="374.90" x2="460.20" y2="424.90" stroke="#9a9a9a" stroke-width="0.8" />
<line x1="482.00" y1="374.90" x2="482.00" y2="424.90" stroke="#9a9a9a" stroke-width="0.8" />
<line x1="489.00" y1="374.90" x2="489.00" y2="424.90" stroke="#9a9a9a" stroke-width="0.8" />
<line x1="493.70" y1="374.90" x2="493.70" y2="424.90" stroke="#9a9a9a" stroke-width="0.8" />
<line x1="498.70" y1="374.90" x2="498.70" y2="424.90" stroke="#9a9a9a" stroke-width="0.8" />
<line x1="502.00" y1="374.90" x2="502.00" y2="424.90" stroke="#9a9a9a" stroke-width="0.8" />
<line x1="504.50" y1="374.90" x2="504.50" y2="424.90" stroke="#9a9a9a" stroke-width="0.8" />
<line x1="507.00" y1="374.90" x2="507.00" y2="424.90" stroke="#9a9a9a" stroke-width="0.8" />
<line x1="508.70" y1="374.90" x2="508.70" y2="424.90" stroke="#9a9a9a" stroke-width="0.8" />
<line x1="522.70" y1="374.90" x2="522.70" y2="424.90" stroke="#9a9a9a" stroke-width="0.8" />
<line x1="533.20" y1="374.90" x2="533.20" y2="424.90" stroke="#9a9a9a" stroke-width="0.8" />
<line x1="538.20" y1="374.90" x2="538.20" y2="424.90" stroke="#9a9a9a" stroke-width="0.8" />
<line x1="543.20" y1="374.90" x2="543.20" y2="424.90" stroke="#9a9a9a" stroke-width="0.8" />
<line x1="546.50" y1="374.90" x2="546.50" y2="424.90" stroke="#9a9a9a" stroke-width="0.8" />
<line x1="549.50" y1="374.90" x2="549.50" y2="424.90" stroke="#9a9a9a" stroke-width="0.8" />
<line x1="552.00" y1="374.90" x2="552.00" y2="424.90" stroke="#9a9a9a" stroke-width="0.8" />
<line x1="555.20" y1="374.90" x2="555.20" y2="424.90" stroke="#9a9a9a" stroke-width="0.8" />
<line x1="558.20" y1="374.90" x2="558.20" y2="424.90" stroke="#9a9a9a" stroke-width="0.8" />
<line x1="425.50" y1="374.40" x2="425.50" y2="424.90" stroke="#0c8c84" stroke-width="1" stroke-dasharray="1.6 1.4"/>
<line x1="470.20" y1="374.40" x2="470.20" y2="424.90" stroke="#0c8c84" stroke-width="1" stroke-dasharray="1.6 1.4"/>
<line x1="509.50" y1="374.40" x2="509.50" y2="424.90" stroke="#0c8c84" stroke-width="1" stroke-dasharray="1.6 1.4"/>
<line x1="547.00" y1="374.40" x2="547.00" y2="424.90" stroke="#0c8c84" stroke-width="1" stroke-dasharray="1.6 1.4"/>
<line x1="572.80" y1="374.40" x2="572.80" y2="424.90" stroke="#0c8c84" stroke-width="1" stroke-dasharray="1.6 1.4"/>
<path d="M425.5,409.50 H470.2 M470.2,398.50 H509.5 M509.5,399.50 H547.0 M547.0,400.50 H572.8 " fill="none" stroke="#18c8c8" stroke-width="1.1" />
<line x1="414.50" y1="429.80" x2="577.50" y2="429.80" stroke="#8a8a8a" stroke-width="1" />
<text x="422.50" y="438.00" font-size="9.5" fill="#fff" dominant-baseline="central" font-weight="bold" textLength="81.50" lengthAdjust="spacingAndGlyphs" >Optimizer Release</text>
<line x1="511.20" y1="432.90" x2="520.00" y2="441.90" stroke="#b0b0b0" stroke-width="1" />
<line x1="520.00" y1="432.90" x2="511.20" y2="441.90" stroke="#b0b0b0" stroke-width="1" />
<text x="521.30" y="438.10" font-size="8" fill="#d0d0d0" dominant-baseline="central" textLength="21.20" lengthAdjust="spacingAndGlyphs" >Stored</text>
<circle cx="546.1" cy="438.6" r="0.8" fill="#b0b0b0"/>
<text x="551.70" y="438.10" font-size="7.5" fill="#d8d8d8" dominant-baseline="central" textLength="13.30" lengthAdjust="spacingAndGlyphs" >44 %</text>
<circle cx="572.3" cy="438.6" r="1.3" fill="#18c8c8"/>
<text x="578.90" y="438.10" font-size="7.5" fill="#18d0d0" dominant-baseline="central" font-weight="bold" textLength="14.30" lengthAdjust="spacingAndGlyphs" >44 %</text>
<line x1="588.30" y1="382.40" x2="588.30" y2="417.40" stroke="#e8e8e8" stroke-width="1.3" />
<rect x="582.70" y="394.70" width="11.60" height="14.40" fill="#000" />
<path d="M583.5,401.9 L593.3,395.2 V408.6 Z" fill="#f414f4" stroke="none" stroke-width="1" />
<rect x="3.00" y="450.30" width="615.00" height="16.30" fill="#e0dfd9" />
<line x1="3.00" y1="450.60" x2="618.00" y2="450.60" stroke="#fafafa" stroke-width="1" />
<rect x="56.40" y="455.00" width="49.20" height="9.80" fill="#cfcfcc" />
<line x1="56.40" y1="455.00" x2="56.40" y2="464.80" stroke="#a0a0a0" stroke-width="0.8" />
<line x1="105.60" y1="455.00" x2="105.60" y2="464.80" stroke="#f8f8f8" stroke-width="0.8" />
<rect x="111.60" y="455.00" width="46.80" height="9.80" fill="#cfcfcc" />
<line x1="111.60" y1="455.00" x2="111.60" y2="464.80" stroke="#a0a0a0" stroke-width="0.8" />
<line x1="158.40" y1="455.00" x2="158.40" y2="464.80" stroke="#f8f8f8" stroke-width="0.8" />
<rect x="164.40" y="455.00" width="52.20" height="9.80" fill="#cfcfcc" />
<line x1="164.40" y1="455.00" x2="164.40" y2="464.80" stroke="#a0a0a0" stroke-width="0.8" />
<line x1="216.60" y1="455.00" x2="216.60" y2="464.80" stroke="#f8f8f8" stroke-width="0.8" />
<text x="62.00" y="460.00" font-size="7" fill="#101010" dominant-baseline="central" font-weight="bold" textLength="25.50" lengthAdjust="spacingAndGlyphs" >Digital In</text>
<line x1="90.00" y1="460.00" x2="102.00" y2="460.00" stroke="#202020" stroke-width="1" />
<path d="M94,457.6 l4,2.4 l-4,2.4z" fill="#101010" stroke="none" stroke-width="1" />
<line x1="93.50" y1="457.60" x2="93.50" y2="462.40" stroke="#101010" stroke-width="1" />
<rect x="115.60" y="457.40" width="2.40" height="5.40" fill="#e8b8e8" />
<path d="M118.8,456.6 l4.4,3.5 l-4.4,3.5z" fill="#b8e0e8" stroke="#1898a8" stroke-width="1.1" />
<text x="126.50" y="460.20" font-size="7" fill="#101010" dominant-baseline="central" font-weight="bold" textLength="18.50" lengthAdjust="spacingAndGlyphs" >Stereo</text>
<path d="M151.8,456.6 l-4.4,3.5 l4.4,3.5z" fill="#b8e0e8" stroke="#1898a8" stroke-width="1.1" />
<rect x="153.40" y="457.40" width="2.20" height="5.40" fill="#e8a0e8" />
<text x="166.80" y="460.20" font-size="6.8" fill="#000" dominant-baseline="central" font-weight="bold" textLength="8.50" lengthAdjust="spacingAndGlyphs" >PC</text>
<circle cx="180.2" cy="460.3" r="3.1" fill="#e8ffff" stroke="#108098" stroke-width="1.6"/>
<rect x="179.00" y="455.00" width="2.40" height="1.80" fill="#108098" />
<rect x="179.80" y="458.60" width="0.90" height="3.20" fill="#103040" />
<line x1="186.00" y1="460.30" x2="192.00" y2="460.30" stroke="#e040e0" stroke-width="1" stroke-dasharray="1.4 1"/>
<circle cx="198" cy="460.3" r="3.1" fill="#e8ffff" stroke="#108098" stroke-width="1.6"/>
<rect x="196.80" y="455.00" width="2.40" height="1.80" fill="#108098" />
<rect x="197.60" y="458.60" width="0.90" height="3.20" fill="#103040" />
<text x="203.20" y="460.20" font-size="6.8" fill="#000" dominant-baseline="central" font-weight="bold" textLength="11.50" lengthAdjust="spacingAndGlyphs" >DBP</text>
<rect x="546.00" y="455.00" width="54.00" height="9.80" fill="#d6d6d2" />
<text x="550.50" y="460.20" font-size="7" fill="#101010" dominant-baseline="central" font-weight="bold" textLength="30.00" lengthAdjust="spacingAndGlyphs" >Quick Save</text>
<line x1="583.00" y1="460.20" x2="587.00" y2="460.20" stroke="#101010" stroke-width="1" />
<path d="M586,458.4 l2.4,1.8 l-2.4,1.8z" fill="#101010" stroke="none" stroke-width="1" />
<path d="M589,457 h3 l0.8,0.9 h3.6 v5 h-7.4z" fill="#d8d030" stroke="#303000" stroke-width="0.6" />
<path d="M589,462.9 l1.8,-3.4 h6.6 l-1.8,3.4z" fill="#f8f870" stroke="#303000" stroke-width="0.6" />
<line x1="608.00" y1="466.00" x2="617.40" y2="456.60" stroke="#a0a0a0" stroke-width="1" />
<line x1="611.20" y1="466.00" x2="617.40" y2="459.80" stroke="#a0a0a0" stroke-width="1" />
<line x1="614.40" y1="466.00" x2="617.40" y2="463.00" stroke="#a0a0a0" stroke-width="1" />
<rect x="0.00" y="466.60" width="620.00" height="3.00" fill="#eeeeea" />
<line x1="0.00" y1="467.70" x2="619.00" y2="467.70" stroke="#6a6a6a" stroke-width="1" />
<rect x="2.50" y="469.40" width="617.50" height="127.20" fill="#909090" />
<line x1="0.00" y1="596.80" x2="620.00" y2="596.80" stroke="#6a6a6a" stroke-width="1" />
<rect x="3.00" y="469.60" width="615.00" height="15.20" fill="url(#gt)" />
<text x="3.80" y="477.70" font-size="9.6" fill="#d6d6d6" dominant-baseline="central" font-weight="bold" textLength="41.50" lengthAdjust="spacingAndGlyphs" >Key Tools</text>
<rect x="611.40" y="472.60" width="6.60" height="7.40" fill="#d8d8d4" stroke="#707070" stroke-width="0.7"/>
<line x1="612.80" y1="474.20" x2="616.60" y2="478.40" stroke="#202020" stroke-width="0.9" />
<line x1="616.60" y1="474.20" x2="612.80" y2="478.40" stroke="#202020" stroke-width="0.9" />
<rect x="4.00" y="485.90" width="615.00" height="108.40" fill="#c0c0c0" rx="13.5" />
<rect x="5.50" y="487.40" width="612.00" height="105.40" fill="#000" rx="12" />
<text x="59.20" y="498.50" font-size="7.5" fill="#e0e0e0" dominant-baseline="central" text-anchor="end" >0</text>
<rect x="60.00" y="498.00" width="1.60" height="1.00" fill="#707070" />
<text x="59.20" y="507.90" font-size="7.5" fill="#e0e0e0" dominant-baseline="central" text-anchor="end" >-16</text>
<rect x="60.00" y="507.40" width="1.60" height="1.00" fill="#707070" />
<text x="59.20" y="517.30" font-size="7.5" fill="#e0e0e0" dominant-baseline="central" text-anchor="end" >-32</text>
<rect x="60.00" y="516.80" width="1.60" height="1.00" fill="#707070" />
<text x="59.20" y="526.70" font-size="7.5" fill="#e0e0e0" dominant-baseline="central" text-anchor="end" >-48</text>
<rect x="60.00" y="526.20" width="1.60" height="1.00" fill="#707070" />
<text x="59.20" y="536.10" font-size="7.5" fill="#e0e0e0" dominant-baseline="central" text-anchor="end" >-64</text>
<rect x="60.00" y="535.60" width="1.60" height="1.00" fill="#707070" />
<text x="59.20" y="545.50" font-size="7.5" fill="#e0e0e0" dominant-baseline="central" text-anchor="end" >-80</text>
<rect x="60.00" y="545.00" width="1.60" height="1.00" fill="#707070" />
<text x="59.20" y="554.90" font-size="7.5" fill="#e0e0e0" dominant-baseline="central" text-anchor="end" >-96</text>
<rect x="60.00" y="554.40" width="1.60" height="1.00" fill="#707070" />
<rect x="62.80" y="554.50" width="4.10" height="1.30" fill="#18c8c8" />
<rect x="62.80" y="552.40" width="4.10" height="1.30" fill="#18c8c8" />
<rect x="62.80" y="550.30" width="4.10" height="1.30" fill="#18c8c8" />
<rect x="62.80" y="548.20" width="4.10" height="1.30" fill="#18c8c8" />
<rect x="62.80" y="546.10" width="4.10" height="1.30" fill="#18c8c8" />
<rect x="62.80" y="544.00" width="4.10" height="1.30" fill="#18c8c8" />
<rect x="62.80" y="541.90" width="4.10" height="1.30" fill="#18c8c8" />
<rect x="62.80" y="539.80" width="4.10" height="1.30" fill="#18c8c8" />
<rect x="62.80" y="537.70" width="4.10" height="1.30" fill="#18c8c8" />
<rect x="62.80" y="535.60" width="4.10" height="1.30" fill="#18c8c8" />
<rect x="62.80" y="533.50" width="4.10" height="1.30" fill="#18c8c8" />
<rect x="62.80" y="531.40" width="4.10" height="1.30" fill="#18c8c8" />
<rect x="62.80" y="529.30" width="4.10" height="1.30" fill="#18c8c8" />
<rect x="62.80" y="527.20" width="4.10" height="1.30" fill="#18c8c8" />
<rect x="62.80" y="525.10" width="4.10" height="1.30" fill="#18c8c8" />
<rect x="62.80" y="523.00" width="4.10" height="1.30" fill="#18c8c8" />
<rect x="62.80" y="520.90" width="4.10" height="1.30" fill="#18c8c8" />
<rect x="62.80" y="518.80" width="4.10" height="1.30" fill="#18c8c8" />
<rect x="62.80" y="516.70" width="4.10" height="1.30" fill="#18c8c8" />
<rect x="62.80" y="514.60" width="4.10" height="1.30" fill="#18c8c8" />
<rect x="62.80" y="512.50" width="4.10" height="1.30" fill="#18c8c8" />
<rect x="62.80" y="510.40" width="4.10" height="1.30" fill="#18c8c8" />
<line x1="68.40" y1="495.80" x2="68.40" y2="559.40" stroke="#6a8a88" stroke-width="1.2" />
<path d="M70,524 L83.8,517.6 V530.4 Z" fill="#f414f4" stroke="none" stroke-width="1" />
<text x="85.80" y="524.20" font-size="8" fill="#e0e0e0" dominant-baseline="central" textLength="22.00" lengthAdjust="spacingAndGlyphs" >-44 dB</text>
<text x="29.00" y="572.00" font-size="9.5" fill="#fff" dominant-baseline="central" font-weight="bold" textLength="82.40" lengthAdjust="spacingAndGlyphs" >StandBy Threshold</text>
<text transform="translate(165.30,503.50) scale(0.9,1)" x="0" y="0" font-size="8" fill="#e0e0e0" dominant-baseline="central" text-anchor="end" >60Hz</text>
<text transform="translate(165.30,513.34) scale(0.9,1)" x="0" y="0" font-size="8" fill="#e0e0e0" dominant-baseline="central" text-anchor="end" >50Hz</text>
<text transform="translate(165.30,523.18) scale(0.9,1)" x="0" y="0" font-size="8" fill="#e0e0e0" dominant-baseline="central" text-anchor="end" >40Hz</text>
<text transform="translate(165.30,533.02) scale(0.9,1)" x="0" y="0" font-size="8" fill="#e0e0e0" dominant-baseline="central" text-anchor="end" >30Hz</text>
<text transform="translate(165.30,542.86) scale(0.9,1)" x="0" y="0" font-size="8" fill="#e0e0e0" dominant-baseline="central" text-anchor="end" >20Hz</text>
<text transform="translate(165.30,552.70) scale(0.9,1)" x="0" y="0" font-size="8" fill="#e0e0e0" dominant-baseline="central" text-anchor="end" >OFF</text>
<line x1="169.80" y1="495.80" x2="169.80" y2="559.40" stroke="#808080" stroke-width="1.2" />
<path d="M170.5,533.4 L183.8,527 V539.8 Z" fill="#f414f4" stroke="none" stroke-width="1" />
<text x="148.50" y="572.00" font-size="9.5" fill="#fff" dominant-baseline="central" font-weight="bold" textLength="36.30" lengthAdjust="spacingAndGlyphs" >HP Filter</text>
<text x="260.60" y="534.30" font-size="8" fill="#e0e0e0" dominant-baseline="central" text-anchor="end" >ON</text>
<text x="260.60" y="553.60" font-size="8" fill="#e0e0e0" dominant-baseline="central" text-anchor="end" >OFF</text>
<line x1="265.20" y1="496.60" x2="265.20" y2="559.40" stroke="#808080" stroke-width="1.2" />
<path d="M266,534.8 L279,528.4 V541.2 Z" fill="#f414f4" stroke="none" stroke-width="1" />
<text x="236.60" y="572.00" font-size="9.5" fill="#fff" dominant-baseline="central" font-weight="bold" textLength="50.60" lengthAdjust="spacingAndGlyphs" >Stereo Link</text>
<text x="356.40" y="499.00" font-size="8" fill="#e0e0e0" dominant-baseline="central" text-anchor="end" >Max</text>
<text x="356.40" y="556.80" font-size="8" fill="#e0e0e0" dominant-baseline="central" text-anchor="end" >Min</text>
<line x1="360.20" y1="496.60" x2="360.20" y2="559.40" stroke="#808080" stroke-width="1.2" />
<rect x="357.30" y="498.40" width="1.40" height="1.20" fill="#606060" />
<rect x="357.30" y="504.18" width="1.40" height="1.20" fill="#606060" />
<rect x="357.30" y="509.96" width="1.40" height="1.20" fill="#606060" />
<rect x="357.30" y="515.74" width="1.40" height="1.20" fill="#606060" />
<rect x="357.30" y="521.52" width="1.40" height="1.20" fill="#606060" />
<rect x="357.30" y="527.30" width="1.40" height="1.20" fill="#606060" />
<rect x="357.30" y="533.08" width="1.40" height="1.20" fill="#606060" />
<rect x="357.30" y="538.86" width="1.40" height="1.20" fill="#606060" />
<rect x="357.30" y="544.64" width="1.40" height="1.20" fill="#606060" />
<rect x="357.30" y="550.42" width="1.40" height="1.20" fill="#606060" />
<rect x="357.30" y="556.20" width="1.40" height="1.20" fill="#606060" />
<path d="M362.3,556.8 L376,550.4 V563.2 Z" fill="#f414f4" stroke="none" stroke-width="1" />
<text x="379.00" y="557.00" font-size="7.5" fill="#e0e0e0" dominant-baseline="central" >0</text>
<text x="391.50" y="557.00" font-size="7" fill="#e0e0e0" dominant-baseline="central" >%</text>
<text x="341.00" y="571.60" font-size="9.5" fill="#fff" dominant-baseline="central" font-weight="bold" textLength="31.40" lengthAdjust="spacingAndGlyphs" >Fidelity</text>
<text x="433.50" y="503.50" font-size="7.5" fill="#e0e0e0" dominant-baseline="central" textLength="18.20" lengthAdjust="spacingAndGlyphs" >P &gt; E</text>
<text x="433.50" y="553.50" font-size="7.5" fill="#e0e0e0" dominant-baseline="central" textLength="18.20" lengthAdjust="spacingAndGlyphs" >E &gt; P</text>
<line x1="455.80" y1="496.60" x2="455.80" y2="559.40" stroke="#808080" stroke-width="1.2" />
<path d="M456.4,503.5 L470,497.1 V509.9 Z" fill="#f414f4" stroke="none" stroke-width="1" />
<text x="420.60" y="572.00" font-size="9.5" fill="#fff" dominant-baseline="central" font-weight="bold" textLength="62.70" lengthAdjust="spacingAndGlyphs" >Process Order</text>
<line x1="24.00" y1="564.50" x2="500.40" y2="564.50" stroke="#989898" stroke-width="1" />
<line x1="24.00" y1="578.50" x2="500.40" y2="578.50" stroke="#989898" stroke-width="1" />
<line x1="547.00" y1="563.50" x2="610.40" y2="563.50" stroke="#989898" stroke-width="1" />
<line x1="547.00" y1="578.50" x2="610.40" y2="578.50" stroke="#989898" stroke-width="1" />
<text x="561.00" y="571.00" font-size="9.5" fill="#fff" dominant-baseline="central" font-weight="bold" textLength="34.80" lengthAdjust="spacingAndGlyphs" >More ...</text>
<path d="M571,580.3 h13.3 l-6.65,9.5z" fill="#f414f4" stroke="none" stroke-width="1" />
<rect x="618.00" y="0.00" width="5.50" height="600.00" fill="#ecece8" />
<rect x="623.50" y="0.00" width="176.50" height="600.00" fill="#e4e4e0" />
<line x1="622.80" y1="0.00" x2="622.80" y2="600.00" stroke="#8a8a8a" stroke-width="1" />
<rect x="623.20" y="1.80" width="175.40" height="91.40" fill="#f6f6f4" />
<line x1="622.60" y1="94.60" x2="799.00" y2="94.60" stroke="#808080" stroke-width="1" />
<rect x="624.20" y="2.60" width="173.60" height="89.80" fill="#929292" />
<rect x="624.20" y="2.60" width="173.60" height="11.50" fill="url(#gt)" />
<line x1="623.80" y1="2.60" x2="797.80" y2="2.60" stroke="#c8c8c8" stroke-width="0.8" />
<text x="627.00" y="8.90" font-size="9.6" fill="#d2d2d2" dominant-baseline="central" font-weight="bold" textLength="80.00" lengthAdjust="spacingAndGlyphs" >Results -&gt;&#160; 75 kHz</text>
<rect x="787.20" y="4.20" width="7.20" height="7.60" fill="#d4d4d0" stroke="#686868" stroke-width="0.7"/>
<line x1="788.80" y1="6.00" x2="792.80" y2="10.00" stroke="#202020" stroke-width="0.9" />
<line x1="792.80" y1="6.00" x2="788.80" y2="10.00" stroke="#202020" stroke-width="0.9" />
<rect x="627.30" y="16.10" width="166.20" height="73.00" fill="#bcbcbc" rx="9.5" />
<rect x="628.80" y="17.60" width="163.20" height="70.00" fill="#000" rx="8" />
<path d="M640,23.8 H705 V24.4 H712 C717,24.4 720.2,27 720.2,33 V80.6 H640 Z" fill="#00fbfb" stroke="none" stroke-width="1" />
<line x1="640.00" y1="23.80" x2="640.00" y2="80.60" stroke="#20a8a8" stroke-width="0.9" />
<line x1="650.81" y1="23.80" x2="650.81" y2="80.60" stroke="#20a8a8" stroke-width="0.9" />
<line x1="661.62" y1="23.80" x2="661.62" y2="80.60" stroke="#20a8a8" stroke-width="0.9" />
<line x1="672.42" y1="23.80" x2="672.42" y2="80.60" stroke="#20a8a8" stroke-width="0.9" />
<line x1="683.23" y1="23.80" x2="683.23" y2="80.60" stroke="#20a8a8" stroke-width="0.9" />
<line x1="694.04" y1="23.80" x2="694.04" y2="80.60" stroke="#20a8a8" stroke-width="0.9" />
<line x1="704.85" y1="23.80" x2="704.85" y2="80.60" stroke="#20a8a8" stroke-width="0.9" />
<line x1="715.65" y1="23.80" x2="715.65" y2="80.60" stroke="#20a8a8" stroke-width="0.9" />
<line x1="726.46" y1="23.80" x2="726.46" y2="80.60" stroke="#787878" stroke-width="0.9" />
<line x1="737.27" y1="23.80" x2="737.27" y2="80.60" stroke="#787878" stroke-width="0.9" />
<line x1="748.08" y1="23.80" x2="748.08" y2="80.60" stroke="#787878" stroke-width="0.9" />
<line x1="758.88" y1="23.80" x2="758.88" y2="80.60" stroke="#787878" stroke-width="0.9" />
<line x1="769.69" y1="23.80" x2="769.69" y2="80.60" stroke="#787878" stroke-width="0.9" />
<line x1="780.50" y1="23.80" x2="780.50" y2="80.60" stroke="#787878" stroke-width="0.9" />
<line x1="720.40" y1="23.80" x2="780.50" y2="23.80" stroke="#787878" stroke-width="0.9" />
<line x1="640.00" y1="23.80" x2="720.40" y2="23.80" stroke="#20a8a8" stroke-width="0.9" />
<line x1="720.40" y1="29.48" x2="780.50" y2="29.48" stroke="#787878" stroke-width="0.9" />
<line x1="640.00" y1="29.48" x2="720.40" y2="29.48" stroke="#20a8a8" stroke-width="0.9" />
<line x1="720.40" y1="35.16" x2="780.50" y2="35.16" stroke="#787878" stroke-width="0.9" />
<line x1="640.00" y1="35.16" x2="720.40" y2="35.16" stroke="#20a8a8" stroke-width="0.9" />
<line x1="720.40" y1="40.84" x2="780.50" y2="40.84" stroke="#787878" stroke-width="0.9" />
<line x1="640.00" y1="40.84" x2="720.40" y2="40.84" stroke="#20a8a8" stroke-width="0.9" />
<line x1="720.40" y1="46.52" x2="780.50" y2="46.52" stroke="#787878" stroke-width="0.9" />
<line x1="640.00" y1="46.52" x2="720.40" y2="46.52" stroke="#20a8a8" stroke-width="0.9" />
<line x1="720.40" y1="52.20" x2="780.50" y2="52.20" stroke="#787878" stroke-width="0.9" />
<line x1="640.00" y1="52.20" x2="720.40" y2="52.20" stroke="#20a8a8" stroke-width="0.9" />
<line x1="720.40" y1="57.88" x2="780.50" y2="57.88" stroke="#787878" stroke-width="0.9" />
<line x1="640.00" y1="57.88" x2="720.40" y2="57.88" stroke="#20a8a8" stroke-width="0.9" />
<line x1="720.40" y1="63.56" x2="780.50" y2="63.56" stroke="#787878" stroke-width="0.9" />
<line x1="640.00" y1="63.56" x2="720.40" y2="63.56" stroke="#20a8a8" stroke-width="0.9" />
<line x1="720.40" y1="69.24" x2="780.50" y2="69.24" stroke="#787878" stroke-width="0.9" />
<line x1="640.00" y1="69.24" x2="720.40" y2="69.24" stroke="#20a8a8" stroke-width="0.9" />
<line x1="720.40" y1="74.92" x2="780.50" y2="74.92" stroke="#787878" stroke-width="0.9" />
<line x1="640.00" y1="74.92" x2="720.40" y2="74.92" stroke="#20a8a8" stroke-width="0.9" />
<line x1="720.40" y1="80.60" x2="780.50" y2="80.60" stroke="#787878" stroke-width="0.9" />
<line x1="640.00" y1="80.60" x2="720.40" y2="80.60" stroke="#20a8a8" stroke-width="0.9" />
<line x1="721.40" y1="23.80" x2="721.40" y2="80.60" stroke="#d020d0" stroke-width="1.2" stroke-dasharray="3 1"/>
<rect x="623.20" y="96.40" width="175.40" height="70.40" fill="#f6f6f4" />
<line x1="622.60" y1="168.20" x2="799.00" y2="168.20" stroke="#808080" stroke-width="1" />
<rect x="624.20" y="97.20" width="173.60" height="68.80" fill="#929292" />
<rect x="624.20" y="97.20" width="173.60" height="11.70" fill="url(#gt)" />
<line x1="623.80" y1="97.20" x2="797.80" y2="97.20" stroke="#c8c8c8" stroke-width="0.8" />
<text x="627.00" y="103.50" font-size="9.6" fill="#d2d2d2" dominant-baseline="central" font-weight="bold" textLength="115.00" lengthAdjust="spacingAndGlyphs" >MPX Power Target -&gt; 6,0 dB</text>
<rect x="787.20" y="98.80" width="7.20" height="7.60" fill="#d4d4d0" stroke="#686868" stroke-width="0.7"/>
<line x1="788.80" y1="100.60" x2="792.80" y2="104.60" stroke="#202020" stroke-width="0.9" />
<line x1="792.80" y1="100.60" x2="788.80" y2="104.60" stroke="#202020" stroke-width="0.9" />
<rect x="627.30" y="110.90" width="166.20" height="52.00" fill="#bcbcbc" rx="9.5" />
<rect x="628.80" y="112.40" width="163.20" height="49.00" fill="#000" rx="8" />
<line x1="633.80" y1="125.20" x2="742.50" y2="125.20" stroke="#a0a0a0" stroke-width="0.9" />
<line x1="634.00" y1="123.40" x2="634.00" y2="125.20" stroke="#a0a0a0" stroke-width="0.8" />
<line x1="642.60" y1="123.40" x2="642.60" y2="125.20" stroke="#a0a0a0" stroke-width="0.8" />
<line x1="651.20" y1="123.40" x2="651.20" y2="125.20" stroke="#a0a0a0" stroke-width="0.8" />
<line x1="659.80" y1="123.40" x2="659.80" y2="125.20" stroke="#a0a0a0" stroke-width="0.8" />
<line x1="668.40" y1="123.40" x2="668.40" y2="125.20" stroke="#a0a0a0" stroke-width="0.8" />
<line x1="677.00" y1="123.40" x2="677.00" y2="125.20" stroke="#a0a0a0" stroke-width="0.8" />
<line x1="685.60" y1="123.40" x2="685.60" y2="125.20" stroke="#a0a0a0" stroke-width="0.8" />
<line x1="694.20" y1="123.40" x2="694.20" y2="125.20" stroke="#a0a0a0" stroke-width="0.8" />
<line x1="702.80" y1="123.40" x2="702.80" y2="125.20" stroke="#a0a0a0" stroke-width="0.8" />
<line x1="711.40" y1="123.40" x2="711.40" y2="125.20" stroke="#a0a0a0" stroke-width="0.8" />
<line x1="720.00" y1="123.40" x2="720.00" y2="125.20" stroke="#a0a0a0" stroke-width="0.8" />
<line x1="728.60" y1="123.40" x2="728.60" y2="125.20" stroke="#a0a0a0" stroke-width="0.8" />
<line x1="737.20" y1="123.40" x2="737.20" y2="125.20" stroke="#a0a0a0" stroke-width="0.8" />
<text x="711.00" y="120.00" font-size="9.5" fill="#fff" dominant-baseline="central" font-weight="bold" textLength="29.00" lengthAdjust="spacingAndGlyphs" >0,0 dB</text>
<line x1="633.80" y1="139.60" x2="742.50" y2="139.60" stroke="#a0a0a0" stroke-width="0.9" />
<line x1="634.00" y1="137.80" x2="634.00" y2="139.60" stroke="#a0a0a0" stroke-width="0.8" />
<line x1="642.60" y1="137.80" x2="642.60" y2="139.60" stroke="#a0a0a0" stroke-width="0.8" />
<line x1="651.20" y1="137.80" x2="651.20" y2="139.60" stroke="#a0a0a0" stroke-width="0.8" />
<line x1="659.80" y1="137.80" x2="659.80" y2="139.60" stroke="#a0a0a0" stroke-width="0.8" />
<line x1="668.40" y1="137.80" x2="668.40" y2="139.60" stroke="#a0a0a0" stroke-width="0.8" />
<line x1="677.00" y1="137.80" x2="677.00" y2="139.60" stroke="#a0a0a0" stroke-width="0.8" />
<line x1="685.60" y1="137.80" x2="685.60" y2="139.60" stroke="#a0a0a0" stroke-width="0.8" />
<line x1="694.20" y1="137.80" x2="694.20" y2="139.60" stroke="#a0a0a0" stroke-width="0.8" />
<line x1="702.80" y1="137.80" x2="702.80" y2="139.60" stroke="#a0a0a0" stroke-width="0.8" />
<line x1="711.40" y1="137.80" x2="711.40" y2="139.60" stroke="#a0a0a0" stroke-width="0.8" />
<line x1="720.00" y1="137.80" x2="720.00" y2="139.60" stroke="#a0a0a0" stroke-width="0.8" />
<line x1="728.60" y1="137.80" x2="728.60" y2="139.60" stroke="#a0a0a0" stroke-width="0.8" />
<line x1="737.20" y1="137.80" x2="737.20" y2="139.60" stroke="#a0a0a0" stroke-width="0.8" />
<rect x="633.80" y="132.80" width="1.20" height="4.40" fill="#18d0d0" />
<rect x="635.55" y="132.80" width="1.20" height="4.40" fill="#18d0d0" />
<rect x="637.30" y="132.80" width="1.20" height="4.40" fill="#18d0d0" />
<rect x="639.05" y="132.80" width="1.20" height="4.40" fill="#18d0d0" />
<rect x="640.80" y="132.80" width="1.20" height="4.40" fill="#18d0d0" />
<rect x="642.55" y="132.80" width="1.20" height="4.40" fill="#18d0d0" />
<rect x="644.30" y="132.80" width="1.20" height="4.40" fill="#18d0d0" />
<rect x="646.05" y="132.80" width="1.20" height="4.40" fill="#18d0d0" />
<rect x="647.80" y="132.80" width="1.20" height="4.40" fill="#18d0d0" />
<rect x="649.55" y="132.80" width="1.20" height="4.40" fill="#18d0d0" />
<rect x="651.30" y="132.80" width="1.20" height="4.40" fill="#18d0d0" />
<rect x="653.05" y="132.80" width="1.20" height="4.40" fill="#18d0d0" />
<rect x="654.80" y="132.80" width="1.20" height="4.40" fill="#18d0d0" />
<rect x="656.55" y="132.80" width="1.20" height="4.40" fill="#18d0d0" />
<rect x="658.30" y="132.80" width="1.20" height="4.40" fill="#18d0d0" />
<rect x="660.05" y="132.80" width="1.20" height="4.40" fill="#18d0d0" />
<rect x="661.80" y="132.80" width="1.20" height="4.40" fill="#18d0d0" />
<rect x="663.55" y="132.80" width="1.20" height="4.40" fill="#18d0d0" />
<rect x="665.30" y="132.80" width="1.20" height="4.40" fill="#18d0d0" />
<rect x="667.05" y="132.80" width="1.20" height="4.40" fill="#18d0d0" />
<rect x="668.80" y="132.80" width="1.20" height="4.40" fill="#18d0d0" />
<rect x="670.55" y="132.80" width="1.20" height="4.40" fill="#18d0d0" />
<rect x="672.30" y="132.80" width="1.20" height="4.40" fill="#18d0d0" />
<rect x="674.05" y="132.80" width="1.20" height="4.40" fill="#18d0d0" />
<rect x="675.80" y="132.80" width="1.20" height="4.40" fill="#18d0d0" />
<rect x="677.55" y="132.80" width="1.20" height="4.40" fill="#18d0d0" />
<rect x="679.30" y="132.80" width="1.20" height="4.40" fill="#18d0d0" />
<rect x="681.05" y="132.80" width="1.20" height="4.40" fill="#18d0d0" />
<rect x="682.80" y="132.80" width="1.20" height="4.40" fill="#18d0d0" />
<rect x="684.55" y="132.80" width="1.20" height="4.40" fill="#18d0d0" />
<rect x="687.70" y="132.80" width="1.60" height="4.40" fill="#f414f4" />
<text x="711.00" y="135.00" font-size="9.5" fill="#fff" dominant-baseline="central" font-weight="bold" textLength="29.00" lengthAdjust="spacingAndGlyphs" >8,2 dB</text>
<line x1="633.80" y1="153.80" x2="783.80" y2="153.80" stroke="#a0a0a0" stroke-width="0.9" />
<line x1="634.00" y1="152.00" x2="634.00" y2="153.80" stroke="#a0a0a0" stroke-width="0.8" />
<line x1="642.60" y1="152.00" x2="642.60" y2="153.80" stroke="#a0a0a0" stroke-width="0.8" />
<line x1="651.20" y1="152.00" x2="651.20" y2="153.80" stroke="#a0a0a0" stroke-width="0.8" />
<line x1="659.80" y1="152.00" x2="659.80" y2="153.80" stroke="#a0a0a0" stroke-width="0.8" />
<line x1="668.40" y1="152.00" x2="668.40" y2="153.80" stroke="#a0a0a0" stroke-width="0.8" />
<line x1="677.00" y1="152.00" x2="677.00" y2="153.80" stroke="#a0a0a0" stroke-width="0.8" />
<line x1="685.60" y1="152.00" x2="685.60" y2="153.80" stroke="#a0a0a0" stroke-width="0.8" />
<line x1="694.20" y1="152.00" x2="694.20" y2="153.80" stroke="#a0a0a0" stroke-width="0.8" />
<line x1="702.80" y1="152.00" x2="702.80" y2="153.80" stroke="#a0a0a0" stroke-width="0.8" />
<line x1="711.40" y1="152.00" x2="711.40" y2="153.80" stroke="#a0a0a0" stroke-width="0.8" />
<line x1="720.00" y1="152.00" x2="720.00" y2="153.80" stroke="#a0a0a0" stroke-width="0.8" />
<line x1="728.60" y1="152.00" x2="728.60" y2="153.80" stroke="#a0a0a0" stroke-width="0.8" />
<line x1="737.20" y1="152.00" x2="737.20" y2="153.80" stroke="#a0a0a0" stroke-width="0.8" />
<rect x="633.80" y="147.20" width="1.20" height="4.40" fill="#18d0d0" />
<rect x="635.55" y="147.20" width="1.20" height="4.40" fill="#18d0d0" />
<rect x="637.30" y="147.20" width="1.20" height="4.40" fill="#18d0d0" />
<rect x="639.05" y="147.20" width="1.20" height="4.40" fill="#18d0d0" />
<rect x="640.80" y="147.20" width="1.20" height="4.40" fill="#18d0d0" />
<rect x="642.55" y="147.20" width="1.20" height="4.40" fill="#18d0d0" />
<rect x="644.30" y="147.20" width="1.20" height="4.40" fill="#18d0d0" />
<rect x="646.05" y="147.20" width="1.20" height="4.40" fill="#18d0d0" />
<rect x="647.80" y="147.20" width="1.20" height="4.40" fill="#18d0d0" />
<rect x="649.55" y="147.20" width="1.20" height="4.40" fill="#18d0d0" />
<rect x="651.30" y="147.20" width="1.20" height="4.40" fill="#18d0d0" />
<rect x="653.05" y="147.20" width="1.20" height="4.40" fill="#18d0d0" />
<rect x="654.80" y="147.20" width="1.20" height="4.40" fill="#18d0d0" />
<rect x="656.55" y="147.20" width="1.20" height="4.40" fill="#18d0d0" />
<rect x="658.30" y="147.20" width="1.20" height="4.40" fill="#18d0d0" />
<rect x="660.05" y="147.20" width="1.20" height="4.40" fill="#18d0d0" />
<rect x="661.80" y="147.20" width="1.20" height="4.40" fill="#18d0d0" />
<rect x="663.55" y="147.20" width="1.20" height="4.40" fill="#18d0d0" />
<rect x="665.30" y="147.20" width="1.20" height="4.40" fill="#18d0d0" />
<rect x="667.05" y="147.20" width="1.20" height="4.40" fill="#18d0d0" />
<rect x="668.80" y="147.20" width="1.20" height="4.40" fill="#18d0d0" />
<rect x="670.55" y="147.20" width="1.20" height="4.40" fill="#18d0d0" />
<rect x="672.30" y="147.20" width="1.20" height="4.40" fill="#18d0d0" />
<rect x="674.05" y="147.20" width="1.20" height="4.40" fill="#18d0d0" />
<rect x="675.80" y="147.20" width="1.20" height="4.40" fill="#18d0d0" />
<rect x="677.55" y="147.20" width="1.20" height="4.40" fill="#18d0d0" />
<rect x="679.30" y="147.20" width="1.20" height="4.40" fill="#18d0d0" />
<rect x="681.05" y="147.20" width="1.20" height="4.40" fill="#18d0d0" />
<rect x="682.80" y="147.20" width="1.20" height="4.40" fill="#18d0d0" />
<rect x="685.80" y="147.20" width="1.60" height="4.40" fill="#f414f4" />
<text x="711.00" y="149.40" font-size="9.5" fill="#fff" dominant-baseline="central" font-weight="bold" textLength="29.00" lengthAdjust="spacingAndGlyphs" >8,1 dB</text>
<text x="753.80" y="149.40" font-size="9.5" fill="#fff" dominant-baseline="central" font-weight="bold" textLength="23.60" lengthAdjust="spacingAndGlyphs" >1 ' 00</text>
<rect x="623.20" y="167.20" width="175.40" height="70.00" fill="#f6f6f4" />
<line x1="622.60" y1="238.60" x2="799.00" y2="238.60" stroke="#808080" stroke-width="1" />
<rect x="624.20" y="168.00" width="173.60" height="68.40" fill="#929292" />
<rect x="624.20" y="168.00" width="173.60" height="11.50" fill="url(#gt)" />
<line x1="623.80" y1="168.00" x2="797.80" y2="168.00" stroke="#c8c8c8" stroke-width="0.8" />
<text x="627.00" y="174.30" font-size="9.6" fill="#d2d2d2" dominant-baseline="central" font-weight="bold" textLength="64.00" lengthAdjust="spacingAndGlyphs" >Result Routing</text>
<rect x="787.20" y="169.60" width="7.20" height="7.60" fill="#d4d4d0" stroke="#686868" stroke-width="0.7"/>
<line x1="788.80" y1="171.40" x2="792.80" y2="175.40" stroke="#202020" stroke-width="0.9" />
<line x1="792.80" y1="171.40" x2="788.80" y2="175.40" stroke="#202020" stroke-width="0.9" />
<rect x="627.30" y="181.50" width="166.20" height="52.60" fill="#bcbcbc" rx="9.5" />
<rect x="628.80" y="183.00" width="163.20" height="49.60" fill="#000" rx="8" />
<line x1="635.00" y1="198.60" x2="786.00" y2="198.60" stroke="#e040e0" stroke-width="1.2" />
<rect x="641.00" y="188.80" width="25.00" height="21.40" fill="#cacaca" stroke="#ececec" stroke-width="0.6"/>
<text x="645.75" y="205.30" font-size="7.5" fill="#181818" dominant-baseline="central" textLength="15.50" lengthAdjust="spacingAndGlyphs" >AGC</text>
<rect x="647.90" y="190.00" width="3.30" height="10.80" fill="#101010" />
<rect x="648.60" y="191.40" width="1.90" height="6.00" fill="#e050e0" />
<rect x="654.10" y="190.00" width="3.30" height="10.80" fill="#101010" />
<rect x="654.80" y="191.40" width="1.90" height="4.40" fill="#e050e0" />
<line x1="660.50" y1="190.50" x2="660.50" y2="199.50" stroke="#a8a8a8" stroke-width="0.9" />
<rect x="672.00" y="188.80" width="46.80" height="21.40" fill="#cacaca" stroke="#ececec" stroke-width="0.6"/>
<text x="675.90" y="205.30" font-size="7.5" fill="#181818" dominant-baseline="central" textLength="39.00" lengthAdjust="spacingAndGlyphs" >Bd Process</text>
<rect x="681.50" y="190.80" width="27.50" height="10.40" fill="#080808" />
<rect x="684.10" y="193.20" width="5.12" height="5.20" fill="#e868e8" />
<rect x="689.83" y="193.20" width="5.12" height="6.00" fill="#e868e8" />
<rect x="695.55" y="193.20" width="5.12" height="5.20" fill="#e868e8" />
<rect x="701.27" y="193.20" width="5.12" height="6.00" fill="#e868e8" />
<rect x="723.80" y="188.80" width="25.00" height="21.40" fill="#cacaca" stroke="#ececec" stroke-width="0.6"/>
<text x="725.80" y="205.30" font-size="7.5" fill="#181818" dominant-baseline="central" textLength="21.00" lengthAdjust="spacingAndGlyphs" >Optim.</text>
<rect x="730.70" y="190.00" width="3.30" height="10.80" fill="#101010" />
<rect x="731.40" y="191.40" width="1.90" height="6.00" fill="#e050e0" />
<rect x="736.90" y="190.00" width="3.30" height="10.80" fill="#101010" />
<rect x="737.60" y="191.40" width="1.90" height="4.40" fill="#e050e0" />
<line x1="743.30" y1="190.50" x2="743.30" y2="199.50" stroke="#a8a8a8" stroke-width="0.9" />
<rect x="754.50" y="188.80" width="25.50" height="21.40" fill="#cacaca" stroke="#ececec" stroke-width="0.6"/>
<text x="756.00" y="205.30" font-size="7.5" fill="#181818" dominant-baseline="central" textLength="22.50" lengthAdjust="spacingAndGlyphs" >Limiter</text>
<rect x="761.65" y="190.00" width="3.30" height="10.80" fill="#101010" />
<rect x="762.35" y="191.40" width="1.90" height="6.00" fill="#e050e0" />
<rect x="767.85" y="190.00" width="3.30" height="10.80" fill="#101010" />
<rect x="768.55" y="191.40" width="1.90" height="4.40" fill="#e050e0" />
<line x1="774.25" y1="190.50" x2="774.25" y2="199.50" stroke="#a8a8a8" stroke-width="0.9" />
<line x1="782.60" y1="198.60" x2="782.60" y2="216.00" stroke="#b0b0b0" stroke-width="1" />
<rect x="774.50" y="215.40" width="15.00" height="10.60" fill="#080808" stroke="#c8c8c8" stroke-width="0.8"/>
<path d="M776.4,217.2 h6.2 q3.4,0.4 3.8,7 h-10z" fill="#30e0e0" stroke="none" stroke-width="1" />
<rect x="623.20" y="239.20" width="175.40" height="70.00" fill="#f6f6f4" />
<line x1="622.60" y1="310.60" x2="799.00" y2="310.60" stroke="#808080" stroke-width="1" />
<rect x="624.20" y="240.00" width="173.60" height="68.40" fill="#929292" />
<rect x="624.20" y="240.00" width="173.60" height="11.90" fill="url(#gt)" />
<line x1="623.80" y1="240.00" x2="797.80" y2="240.00" stroke="#c8c8c8" stroke-width="0.8" />
<text x="627.00" y="246.30" font-size="9.6" fill="#d2d2d2" dominant-baseline="central" font-weight="bold" textLength="68.00" lengthAdjust="spacingAndGlyphs" >Phones Routing</text>
<rect x="787.20" y="241.60" width="7.20" height="7.60" fill="#d4d4d0" stroke="#686868" stroke-width="0.7"/>
<line x1="788.80" y1="243.40" x2="792.80" y2="247.40" stroke="#202020" stroke-width="0.9" />
<line x1="792.80" y1="243.40" x2="788.80" y2="247.40" stroke="#202020" stroke-width="0.9" />
<rect x="627.30" y="253.90" width="166.20" height="52.20" fill="#bcbcbc" rx="9.5" />
<rect x="628.80" y="255.40" width="163.20" height="49.20" fill="#000" rx="8" />
<line x1="635.00" y1="271.00" x2="786.00" y2="271.00" stroke="#d8d8d8" stroke-width="1.1" />
<line x1="635.00" y1="271.00" x2="641.00" y2="271.00" stroke="#e040e0" stroke-width="1.2" />
<line x1="780.00" y1="271.00" x2="786.00" y2="271.00" stroke="#e040e0" stroke-width="1.2" />
<rect x="641.00" y="261.20" width="25.00" height="21.40" fill="#cacaca" stroke="#ececec" stroke-width="0.6"/>
<text x="645.75" y="277.70" font-size="7.5" fill="#181818" dominant-baseline="central" textLength="15.50" lengthAdjust="spacingAndGlyphs" >AGC</text>
<rect x="647.90" y="262.40" width="3.30" height="10.80" fill="#101010" />
<rect x="648.60" y="263.80" width="1.90" height="6.00" fill="#e050e0" />
<rect x="654.10" y="262.40" width="3.30" height="10.80" fill="#101010" />
<rect x="654.80" y="263.80" width="1.90" height="4.40" fill="#e050e0" />
<line x1="660.50" y1="262.90" x2="660.50" y2="271.90" stroke="#a8a8a8" stroke-width="0.9" />
<rect x="672.00" y="261.20" width="46.80" height="21.40" fill="#cacaca" stroke="#ececec" stroke-width="0.6"/>
<text x="675.90" y="277.70" font-size="7.5" fill="#181818" dominant-baseline="central" textLength="39.00" lengthAdjust="spacingAndGlyphs" >Bd Process</text>
<rect x="681.50" y="263.20" width="27.50" height="10.40" fill="#080808" />
<rect x="684.10" y="265.60" width="5.12" height="5.20" fill="#e868e8" />
<rect x="689.83" y="265.60" width="5.12" height="6.00" fill="#e868e8" />
<rect x="695.55" y="265.60" width="5.12" height="5.20" fill="#e868e8" />
<rect x="701.27" y="265.60" width="5.12" height="6.00" fill="#e868e8" />
<rect x="723.80" y="261.20" width="25.00" height="21.40" fill="#cacaca" stroke="#ececec" stroke-width="0.6"/>
<text x="725.80" y="277.70" font-size="7.5" fill="#181818" dominant-baseline="central" textLength="21.00" lengthAdjust="spacingAndGlyphs" >Optim.</text>
<rect x="730.70" y="262.40" width="3.30" height="10.80" fill="#101010" />
<rect x="731.40" y="263.80" width="1.90" height="6.00" fill="#e050e0" />
<rect x="736.90" y="262.40" width="3.30" height="10.80" fill="#101010" />
<rect x="737.60" y="263.80" width="1.90" height="4.40" fill="#e050e0" />
<line x1="743.30" y1="262.90" x2="743.30" y2="271.90" stroke="#a8a8a8" stroke-width="0.9" />
<rect x="754.50" y="261.20" width="25.50" height="21.40" fill="#cacaca" stroke="#ececec" stroke-width="0.6"/>
<text x="756.00" y="277.70" font-size="7.5" fill="#181818" dominant-baseline="central" textLength="22.50" lengthAdjust="spacingAndGlyphs" >Limiter</text>
<rect x="761.65" y="262.40" width="3.30" height="10.80" fill="#101010" />
<rect x="762.35" y="263.80" width="1.90" height="6.00" fill="#e050e0" />
<rect x="767.85" y="262.40" width="3.30" height="10.80" fill="#101010" />
<rect x="768.55" y="263.80" width="1.90" height="4.40" fill="#e050e0" />
<line x1="774.25" y1="262.90" x2="774.25" y2="271.90" stroke="#a8a8a8" stroke-width="0.9" />
<line x1="782.60" y1="271.00" x2="782.60" y2="288.40" stroke="#b0b0b0" stroke-width="1" />
<path d="M777,292.8 q0,-6 5.7,-6 q5.7,0 5.7,6" fill="none" stroke="#e8e8e8" stroke-width="1" />
<ellipse cx="777.2" cy="295.2" rx="2" ry="3" fill="#f0f0f0"/><ellipse cx="788.2" cy="295.2" rx="2" ry="3" fill="#f0f0f0"/>
<rect x="623.20" y="310.80" width="175.40" height="71.40" fill="#f6f6f4" />
<line x1="622.60" y1="383.60" x2="799.00" y2="383.60" stroke="#808080" stroke-width="1" />
<rect x="624.20" y="311.60" width="173.60" height="69.80" fill="#929292" />
<rect x="624.20" y="311.60" width="173.60" height="12.90" fill="url(#gt)" />
<line x1="623.80" y1="311.60" x2="797.80" y2="311.60" stroke="#c8c8c8" stroke-width="0.8" />
<text x="627.00" y="317.90" font-size="9.6" fill="#d2d2d2" dominant-baseline="central" font-weight="bold" textLength="52.00" lengthAdjust="spacingAndGlyphs" >Phone Level</text>
<rect x="787.20" y="313.20" width="7.20" height="7.60" fill="#d4d4d0" stroke="#686868" stroke-width="0.7"/>
<line x1="788.80" y1="315.00" x2="792.80" y2="319.00" stroke="#202020" stroke-width="0.9" />
<line x1="792.80" y1="315.00" x2="788.80" y2="319.00" stroke="#202020" stroke-width="0.9" />
<rect x="627.30" y="326.50" width="166.20" height="52.60" fill="#bcbcbc" rx="9.5" />
<rect x="628.80" y="328.00" width="163.20" height="49.60" fill="#000" rx="8" />
<text x="643.00" y="337.60" font-size="8.5" fill="#e8e8e8" dominant-baseline="central" textLength="28.00" lengthAdjust="spacingAndGlyphs" >Phones</text>
<path d="M650,343 h13 l-6.5,11.6z" fill="#f414f4" stroke="none" stroke-width="1" />
<line x1="647.50" y1="360.80" x2="771.00" y2="360.80" stroke="#c0c0c0" stroke-width="0.9" />
<line x1="650.00" y1="357.80" x2="650.00" y2="359.60" stroke="#707070" stroke-width="0.9" />
<line x1="655.55" y1="357.80" x2="655.55" y2="359.60" stroke="#707070" stroke-width="0.9" />
<line x1="661.10" y1="357.80" x2="661.10" y2="359.60" stroke="#707070" stroke-width="0.9" />
<line x1="666.65" y1="357.80" x2="666.65" y2="359.60" stroke="#707070" stroke-width="0.9" />
<line x1="672.20" y1="357.80" x2="672.20" y2="359.60" stroke="#707070" stroke-width="0.9" />
<line x1="677.75" y1="357.80" x2="677.75" y2="359.60" stroke="#707070" stroke-width="0.9" />
<line x1="683.30" y1="357.80" x2="683.30" y2="359.60" stroke="#707070" stroke-width="0.9" />
<line x1="688.85" y1="357.80" x2="688.85" y2="359.60" stroke="#707070" stroke-width="0.9" />
<line x1="694.40" y1="357.80" x2="694.40" y2="359.60" stroke="#707070" stroke-width="0.9" />
<line x1="699.95" y1="357.80" x2="699.95" y2="359.60" stroke="#707070" stroke-width="0.9" />
<line x1="705.50" y1="357.80" x2="705.50" y2="359.60" stroke="#707070" stroke-width="0.9" />
<line x1="711.05" y1="357.80" x2="711.05" y2="359.60" stroke="#707070" stroke-width="0.9" />
<line x1="716.60" y1="357.80" x2="716.60" y2="359.60" stroke="#707070" stroke-width="0.9" />
<line x1="722.15" y1="357.80" x2="722.15" y2="359.60" stroke="#707070" stroke-width="0.9" />
<line x1="727.70" y1="357.80" x2="727.70" y2="359.60" stroke="#707070" stroke-width="0.9" />
<line x1="733.25" y1="357.80" x2="733.25" y2="359.60" stroke="#707070" stroke-width="0.9" />
<line x1="738.80" y1="357.80" x2="738.80" y2="359.60" stroke="#707070" stroke-width="0.9" />
<line x1="744.35" y1="357.80" x2="744.35" y2="359.60" stroke="#707070" stroke-width="0.9" />
<line x1="749.90" y1="357.80" x2="749.90" y2="359.60" stroke="#707070" stroke-width="0.9" />
<line x1="755.45" y1="357.80" x2="755.45" y2="359.60" stroke="#707070" stroke-width="0.9" />
<line x1="761.00" y1="357.80" x2="761.00" y2="359.60" stroke="#707070" stroke-width="0.9" />
<line x1="766.55" y1="357.80" x2="766.55" y2="359.60" stroke="#707070" stroke-width="0.9" />
<text x="633.80" y="366.00" font-size="8.5" fill="#e8e8e8" dominant-baseline="central" textLength="13.40" lengthAdjust="spacingAndGlyphs" >Min</text>
<text x="772.40" y="367.00" font-size="8.5" fill="#e8e8e8" dominant-baseline="central" textLength="15.60" lengthAdjust="spacingAndGlyphs" >Max</text>
<rect x="623.20" y="383.60" width="175.40" height="131.80" fill="#f6f6f4" />
<line x1="622.60" y1="516.80" x2="799.00" y2="516.80" stroke="#808080" stroke-width="1" />
<rect x="624.20" y="384.40" width="173.60" height="130.20" fill="#929292" />
<rect x="624.20" y="384.40" width="173.60" height="12.30" fill="url(#gt)" />
<line x1="623.80" y1="384.40" x2="797.80" y2="384.40" stroke="#c8c8c8" stroke-width="0.8" />
<text x="627.00" y="390.70" font-size="9.6" fill="#d2d2d2" dominant-baseline="central" font-weight="bold" textLength="113.00" lengthAdjust="spacingAndGlyphs" >Dorrough Loudness Meter</text>
<rect x="787.20" y="386.00" width="7.20" height="7.60" fill="#d4d4d0" stroke="#686868" stroke-width="0.7"/>
<line x1="788.80" y1="387.80" x2="792.80" y2="391.80" stroke="#202020" stroke-width="0.9" />
<line x1="792.80" y1="387.80" x2="788.80" y2="391.80" stroke="#202020" stroke-width="0.9" />
<rect x="627.30" y="398.70" width="166.20" height="113.40" fill="#bcbcbc" rx="15.5" />
<rect x="628.80" y="400.20" width="163.20" height="110.40" fill="#000" rx="14" />
<text x="638.00" y="418.00" font-size="7" fill="#e8e8e8" dominant-baseline="central" textLength="13.00" lengthAdjust="spacingAndGlyphs" >Left</text>
<rect x="648.00" y="442.04" width="2.00" height="6.40" fill="#80e458" />
<rect x="650.50" y="440.48" width="2.00" height="6.40" fill="#94ec68" />
<rect x="653.00" y="438.99" width="2.00" height="6.40" fill="#80e458" />
<rect x="655.50" y="437.60" width="2.00" height="6.40" fill="#94ec68" />
<rect x="658.00" y="436.28" width="2.00" height="6.40" fill="#80e458" />
<rect x="660.50" y="435.04" width="2.00" height="6.40" fill="#94ec68" />
<rect x="663.00" y="433.87" width="2.00" height="6.40" fill="#80e458" />
<rect x="665.50" y="432.77" width="2.00" height="6.40" fill="#94ec68" />
<rect x="668.00" y="431.74" width="2.00" height="6.40" fill="#80e458" />
<rect x="670.50" y="430.78" width="2.00" height="6.40" fill="#94ec68" />
<rect x="673.00" y="429.88" width="2.00" height="6.40" fill="#80e458" />
<rect x="675.50" y="429.05" width="2.00" height="6.40" fill="#94ec68" />
<rect x="678.00" y="428.28" width="2.00" height="6.40" fill="#80e458" />
<rect x="680.50" y="427.57" width="2.00" height="6.40" fill="#94ec68" />
<rect x="683.00" y="426.92" width="2.00" height="6.40" fill="#80e458" />
<rect x="685.50" y="426.33" width="2.00" height="6.40" fill="#94ec68" />
<rect x="688.00" y="425.80" width="2.00" height="6.40" fill="#80e458" />
<rect x="690.50" y="425.32" width="2.00" height="6.40" fill="#94ec68" />
<rect x="693.00" y="424.90" width="2.00" height="6.40" fill="#80e458" />
<rect x="695.50" y="424.54" width="2.00" height="6.40" fill="#94ec68" />
<rect x="698.00" y="424.23" width="2.00" height="6.40" fill="#80e458" />
<rect x="700.50" y="423.97" width="2.00" height="6.40" fill="#94ec68" />
<rect x="703.00" y="423.78" width="2.00" height="6.40" fill="#f0d430" />
<rect x="705.50" y="423.63" width="2.00" height="6.40" fill="#f0d430" />
<rect x="708.00" y="423.54" width="2.00" height="6.40" fill="#f0d430" />
<rect x="710.50" y="423.50" width="2.00" height="6.40" fill="#f0d430" />
<rect x="713.00" y="423.52" width="2.00" height="6.40" fill="#f0d430" />
<rect x="715.50" y="423.59" width="2.00" height="6.40" fill="#f0d430" />
<rect x="718.00" y="423.71" width="2.00" height="6.40" fill="#f0d430" />
<rect x="720.50" y="423.89" width="2.00" height="6.40" fill="#f0d430" />
<rect x="723.00" y="424.12" width="2.00" height="6.40" fill="#f0a830" />
<rect x="725.50" y="424.41" width="2.00" height="6.40" fill="#f0a830" />
<rect x="728.00" y="424.75" width="2.00" height="6.40" fill="#f0a830" />
<rect x="730.50" y="425.15" width="2.00" height="6.40" fill="#f0a830" />
<rect x="733.00" y="425.60" width="2.00" height="6.40" fill="#f0a830" />
<rect x="735.50" y="426.11" width="2.00" height="6.40" fill="#f05050" />
<rect x="738.00" y="426.68" width="2.00" height="6.40" fill="#f05050" />
<rect x="740.50" y="427.30" width="2.00" height="6.40" fill="#f05050" />
<rect x="743.00" y="427.99" width="2.00" height="6.40" fill="#f05050" />
<rect x="745.50" y="428.73" width="2.00" height="6.40" fill="#ecc830" />
<rect x="748.00" y="429.54" width="2.00" height="6.40" fill="#ecc830" />
<rect x="750.50" y="430.41" width="2.00" height="6.40" fill="#ecc830" />
<rect x="753.00" y="431.35" width="2.00" height="6.40" fill="#ecc830" />
<rect x="755.50" y="432.35" width="2.00" height="6.40" fill="#ecc830" />
<rect x="758.00" y="433.42" width="2.00" height="6.40" fill="#a8a060" />
<rect x="760.50" y="434.56" width="2.00" height="6.40" fill="#a8a060" />
<rect x="763.00" y="435.77" width="2.00" height="6.40" fill="#a87c7c" />
<rect x="765.50" y="437.06" width="2.00" height="6.40" fill="#a87c7c" />
<rect x="768.00" y="438.43" width="2.00" height="6.40" fill="#a87c7c" />
<rect x="770.50" y="439.87" width="2.00" height="6.40" fill="#a87c7c" />
<rect x="773.00" y="441.40" width="2.00" height="6.40" fill="#a87c7c" />
<text x="0" y="0" font-size="6.5" fill="#e8e8e8" text-anchor="middle" dominant-baseline="central" transform="translate(661,431.2) rotate(-15.6) scale(0.9,1)">-36</text>
<text x="0" y="0" font-size="6.5" fill="#e8e8e8" text-anchor="middle" dominant-baseline="central" transform="translate(672.4,426.59999999999997) rotate(-11.9) scale(0.9,1)">-32</text>
<text x="0" y="0" font-size="6.5" fill="#e8e8e8" text-anchor="middle" dominant-baseline="central" transform="translate(686,422.2) rotate(-7.8) scale(0.9,1)">-28</text>
<text x="0" y="0" font-size="6.5" fill="#e8e8e8" text-anchor="middle" dominant-baseline="central" transform="translate(698,418.8) rotate(-4.1) scale(0.9,1)">-24</text>
<text x="0" y="0" font-size="6.5" fill="#e8e8e8" text-anchor="middle" dominant-baseline="central" transform="translate(710,417.8) rotate(-0.6) scale(0.9,1)">-20</text>
<text x="0" y="0" font-size="6.5" fill="#e8e8e8" text-anchor="middle" dominant-baseline="central" transform="translate(722.4,418.59999999999997) rotate(3.1) scale(0.9,1)">-16</text>
<text x="0" y="0" font-size="6.5" fill="#e8e8e8" text-anchor="middle" dominant-baseline="central" transform="translate(734.4,420.8) rotate(6.7) scale(0.9,1)">-12</text>
<text x="0" y="0" font-size="6.5" fill="#e8e8e8" text-anchor="middle" dominant-baseline="central" transform="translate(749.4,424.8) rotate(11.3) scale(0.9,1)">-8</text>
<text x="0" y="0" font-size="6.5" fill="#e8e8e8" text-anchor="middle" dominant-baseline="central" transform="translate(761,430.2) rotate(15.0) scale(0.9,1)">-4</text>
<text x="0" y="0" font-size="6.5" fill="#e8e8e8" text-anchor="middle" dominant-baseline="central" transform="translate(772.6,436.2) rotate(18.8) scale(0.9,1)">0</text>
<text x="636.00" y="445.20" font-size="7" fill="#e8e8e8" dominant-baseline="central" textLength="7.60" lengthAdjust="spacingAndGlyphs" >dB</text>
<text x="775.20" y="445.20" font-size="7" fill="#e8e8e8" dominant-baseline="central" textLength="7.60" lengthAdjust="spacingAndGlyphs" >dB</text>
<line x1="640.00" y1="453.00" x2="689.00" y2="453.00" stroke="#c8c8c8" stroke-width="0.8" />
<line x1="729.00" y1="453.00" x2="779.00" y2="453.00" stroke="#c8c8c8" stroke-width="0.8" />
<text x="689" y="451.6" font-size="12" fill="none" stroke="#e0e0e0" stroke-width="0.5" font-style="italic" textLength="40.5" lengthAdjust="spacingAndGlyphs">dorrough</text>
<text x="638.00" y="462.00" font-size="7" fill="#e8e8e8" dominant-baseline="central" textLength="16.00" lengthAdjust="spacingAndGlyphs" >Right</text>
<rect x="648.00" y="486.04" width="2.00" height="6.40" fill="#80e458" />
<rect x="650.50" y="484.48" width="2.00" height="6.40" fill="#94ec68" />
<rect x="653.00" y="482.99" width="2.00" height="6.40" fill="#80e458" />
<rect x="655.50" y="481.60" width="2.00" height="6.40" fill="#94ec68" />
<rect x="658.00" y="480.28" width="2.00" height="6.40" fill="#80e458" />
<rect x="660.50" y="479.04" width="2.00" height="6.40" fill="#94ec68" />
<rect x="663.00" y="477.87" width="2.00" height="6.40" fill="#80e458" />
<rect x="665.50" y="476.77" width="2.00" height="6.40" fill="#94ec68" />
<rect x="668.00" y="475.74" width="2.00" height="6.40" fill="#80e458" />
<rect x="670.50" y="474.78" width="2.00" height="6.40" fill="#94ec68" />
<rect x="673.00" y="473.88" width="2.00" height="6.40" fill="#80e458" />
<rect x="675.50" y="473.05" width="2.00" height="6.40" fill="#94ec68" />
<rect x="678.00" y="472.28" width="2.00" height="6.40" fill="#80e458" />
<rect x="680.50" y="471.57" width="2.00" height="6.40" fill="#94ec68" />
<rect x="683.00" y="470.92" width="2.00" height="6.40" fill="#80e458" />
<rect x="685.50" y="470.33" width="2.00" height="6.40" fill="#94ec68" />
<rect x="688.00" y="469.80" width="2.00" height="6.40" fill="#80e458" />
<rect x="690.50" y="469.32" width="2.00" height="6.40" fill="#94ec68" />
<rect x="693.00" y="468.90" width="2.00" height="6.40" fill="#80e458" />
<rect x="695.50" y="468.54" width="2.00" height="6.40" fill="#94ec68" />
<rect x="698.00" y="468.23" width="2.00" height="6.40" fill="#80e458" />
<rect x="700.50" y="467.97" width="2.00" height="6.40" fill="#94ec68" />
<rect x="703.00" y="467.78" width="2.00" height="6.40" fill="#f0d430" />
<rect x="705.50" y="467.63" width="2.00" height="6.40" fill="#f0d430" />
<rect x="708.00" y="467.54" width="2.00" height="6.40" fill="#f0d430" />
<rect x="710.50" y="467.50" width="2.00" height="6.40" fill="#f0d430" />
<rect x="713.00" y="467.52" width="2.00" height="6.40" fill="#f0d430" />
<rect x="715.50" y="467.59" width="2.00" height="6.40" fill="#f0d430" />
<rect x="718.00" y="467.71" width="2.00" height="6.40" fill="#f0d430" />
<rect x="720.50" y="467.89" width="2.00" height="6.40" fill="#f0d430" />
<rect x="723.00" y="468.12" width="2.00" height="6.40" fill="#f0a830" />
<rect x="725.50" y="468.41" width="2.00" height="6.40" fill="#f0a830" />
<rect x="728.00" y="468.75" width="2.00" height="6.40" fill="#f0a830" />
<rect x="730.50" y="469.15" width="2.00" height="6.40" fill="#f0a830" />
<rect x="733.00" y="469.60" width="2.00" height="6.40" fill="#f0a830" />
<rect x="735.50" y="470.11" width="2.00" height="6.40" fill="#f05050" />
<rect x="738.00" y="470.68" width="2.00" height="6.40" fill="#f05050" />
<rect x="740.50" y="471.30" width="2.00" height="6.40" fill="#f05050" />
<rect x="743.00" y="471.99" width="2.00" height="6.40" fill="#f05050" />
<rect x="745.50" y="472.73" width="2.00" height="6.40" fill="#ecc830" />
<rect x="748.00" y="473.54" width="2.00" height="6.40" fill="#ecc830" />
<rect x="750.50" y="474.41" width="2.00" height="6.40" fill="#ecc830" />
<rect x="753.00" y="475.35" width="2.00" height="6.40" fill="#ecc830" />
<rect x="755.50" y="476.35" width="2.00" height="6.40" fill="#ecc830" />
<rect x="758.00" y="477.42" width="2.00" height="6.40" fill="#a8a060" />
<rect x="760.50" y="478.56" width="2.00" height="6.40" fill="#a8a060" />
<rect x="763.00" y="479.77" width="2.00" height="6.40" fill="#a87c7c" />
<rect x="765.50" y="481.06" width="2.00" height="6.40" fill="#a87c7c" />
<rect x="768.00" y="482.43" width="2.00" height="6.40" fill="#a87c7c" />
<rect x="770.50" y="483.87" width="2.00" height="6.40" fill="#a87c7c" />
<rect x="773.00" y="485.40" width="2.00" height="6.40" fill="#a87c7c" />
<text x="0" y="0" font-size="6.5" fill="#e8e8e8" text-anchor="middle" dominant-baseline="central" transform="translate(661,475.2) rotate(-15.6) scale(0.9,1)">-36</text>
<text x="0" y="0" font-size="6.5" fill="#e8e8e8" text-anchor="middle" dominant-baseline="central" transform="translate(672.4,470.59999999999997) rotate(-11.9) scale(0.9,1)">-32</text>
<text x="0" y="0" font-size="6.5" fill="#e8e8e8" text-anchor="middle" dominant-baseline="central" transform="translate(686,466.2) rotate(-7.8) scale(0.9,1)">-28</text>
<text x="0" y="0" font-size="6.5" fill="#e8e8e8" text-anchor="middle" dominant-baseline="central" transform="translate(698,462.8) rotate(-4.1) scale(0.9,1)">-24</text>
<text x="0" y="0" font-size="6.5" fill="#e8e8e8" text-anchor="middle" dominant-baseline="central" transform="translate(710,461.8) rotate(-0.6) scale(0.9,1)">-20</text>
<text x="0" y="0" font-size="6.5" fill="#e8e8e8" text-anchor="middle" dominant-baseline="central" transform="translate(722.4,462.59999999999997) rotate(3.1) scale(0.9,1)">-16</text>
<text x="0" y="0" font-size="6.5" fill="#e8e8e8" text-anchor="middle" dominant-baseline="central" transform="translate(734.4,464.8) rotate(6.7) scale(0.9,1)">-12</text>
<text x="0" y="0" font-size="6.5" fill="#e8e8e8" text-anchor="middle" dominant-baseline="central" transform="translate(749.4,468.8) rotate(11.3) scale(0.9,1)">-8</text>
<text x="0" y="0" font-size="6.5" fill="#e8e8e8" text-anchor="middle" dominant-baseline="central" transform="translate(761,474.2) rotate(15.0) scale(0.9,1)">-4</text>
<text x="0" y="0" font-size="6.5" fill="#e8e8e8" text-anchor="middle" dominant-baseline="central" transform="translate(772.6,480.2) rotate(18.8) scale(0.9,1)">0</text>
<text x="636.00" y="489.20" font-size="7" fill="#e8e8e8" dominant-baseline="central" textLength="7.60" lengthAdjust="spacingAndGlyphs" >dB</text>
<text x="775.20" y="489.20" font-size="7" fill="#e8e8e8" dominant-baseline="central" textLength="7.60" lengthAdjust="spacingAndGlyphs" >dB</text>
<line x1="640.00" y1="497.00" x2="689.00" y2="497.00" stroke="#c8c8c8" stroke-width="0.8" />
<line x1="729.00" y1="497.00" x2="779.00" y2="497.00" stroke="#c8c8c8" stroke-width="0.8" />
<text x="689" y="495.6" font-size="12" fill="none" stroke="#e0e0e0" stroke-width="0.5" font-style="italic" textLength="40.5" lengthAdjust="spacingAndGlyphs">dorrough</text>
<rect x="623.20" y="514.80" width="175.40" height="80.80" fill="#f6f6f4" />
<rect x="624.20" y="515.60" width="173.60" height="79.20" fill="#929292" />
<line x1="623.00" y1="595.20" x2="798.00" y2="595.20" stroke="#707070" stroke-width="1" />
<rect x="624.20" y="515.60" width="173.60" height="14.40" fill="url(#gt)" />
<text x="627.00" y="522.80" font-size="9.6" fill="#d2d2d2" dominant-baseline="central" font-weight="bold" textLength="66.00" lengthAdjust="spacingAndGlyphs" >Quick Compare</text>
<rect x="787.40" y="518.80" width="6.80" height="7.40" fill="#d4d4d0" stroke="#686868" stroke-width="0.7"/>
<line x1="789.00" y1="520.60" x2="792.60" y2="524.60" stroke="#202020" stroke-width="0.9" />
<line x1="792.60" y1="520.60" x2="789.00" y2="524.60" stroke="#202020" stroke-width="0.9" />
<rect x="626.40" y="529.60" width="167.80" height="64.00" fill="#ffffff" stroke="#707070" stroke-width="0.8"/>
<rect x="782.00" y="531.00" width="12.00" height="63.00" fill="#f0efea" />
<rect x="782.40" y="531.40" width="11.40" height="11.20" fill="#dedcd4" stroke="#808080" stroke-width="0.7"/>
<path d="M785.2,539.0 h5.8 l-2.9,-3.6z" fill="#000" stroke="none" stroke-width="1" />
<rect x="782.40" y="582.40" width="11.40" height="11.20" fill="#dedcd4" stroke="#808080" stroke-width="0.7"/>
<path d="M785.2,586.1999999999999 h5.8 l-2.9,3.6z" fill="#000" stroke="none" stroke-width="1" />
<rect x="782.40" y="543.40" width="11.40" height="27.60" fill="#dedcd4" stroke="#808080" stroke-width="0.7"/>
<text x="644.20" y="537.40" font-size="9" fill="#000" dominant-baseline="central" textLength="52.50" lengthAdjust="spacingAndGlyphs" stroke="#000" stroke-width="0.2">7 + 4 AC Loud</text>
<rect x="627.60" y="532.00" width="10.60" height="10.60" fill="#c020c0" stroke="#600060" stroke-width="0.6"/>
<text x="628.60" y="534.80" font-size="4.5" fill="#400040" dominant-baseline="central" font-weight="bold" textLength="8.40" lengthAdjust="spacingAndGlyphs" >ON</text>
<text x="628.80" y="539.80" font-size="4.5" fill="#400040" dominant-baseline="central" font-weight="bold" textLength="8.00" lengthAdjust="spacingAndGlyphs" >AIR</text>
<text x="644.20" y="549.88" font-size="9" fill="#000" dominant-baseline="central" textLength="47.50" lengthAdjust="spacingAndGlyphs" stroke="#000" stroke-width="0.2">7 + 4 AC Mid</text>
<path d="M627.8,545.28 h5 l6,4.6 l-6,4.6 h-5z" fill="#c8c0f0" stroke="#6860a0" stroke-width="0.7" />
<text x="628.80" y="549.88" font-size="6" fill="#2020a0" dominant-baseline="central" font-weight="bold" >A</text>
<text x="644.20" y="562.36" font-size="9" fill="#000" dominant-baseline="central" textLength="48.50" lengthAdjust="spacingAndGlyphs" stroke="#000" stroke-width="0.2">7 + 4 AC Soft</text>
<path d="M627.8,557.76 h5 l6,4.6 l-6,4.6 h-5z" fill="#c8c0f0" stroke="#6860a0" stroke-width="0.7" />
<text x="628.80" y="562.36" font-size="6" fill="#2020a0" dominant-baseline="central" font-weight="bold" >A</text>
<text x="644.20" y="574.84" font-size="9" fill="#000" dominant-baseline="central" textLength="65.00" lengthAdjust="spacingAndGlyphs" stroke="#000" stroke-width="0.2">7 + 4 CHR Style 1</text>
<path d="M627.8,570.2399999999999 h5 l6,4.6 l-6,4.6 h-5z" fill="#c8c0f0" stroke="#6860a0" stroke-width="0.7" />
<text x="628.80" y="574.84" font-size="6" fill="#2020a0" dominant-baseline="central" font-weight="bold" >A</text>
<text x="644.20" y="587.32" font-size="9" fill="#000" dominant-baseline="central" textLength="65.50" lengthAdjust="spacingAndGlyphs" stroke="#000" stroke-width="0.2">7 + 4 CHR Style 2</text>
<path d="M627.8,582.7199999999999 h5 l6,4.6 l-6,4.6 h-5z" fill="#c8c0f0" stroke="#6860a0" stroke-width="0.7" />
<text x="628.80" y="587.32" font-size="6" fill="#2020a0" dominant-baseline="central" font-weight="bold" >A</text>
</svg></body></html>
